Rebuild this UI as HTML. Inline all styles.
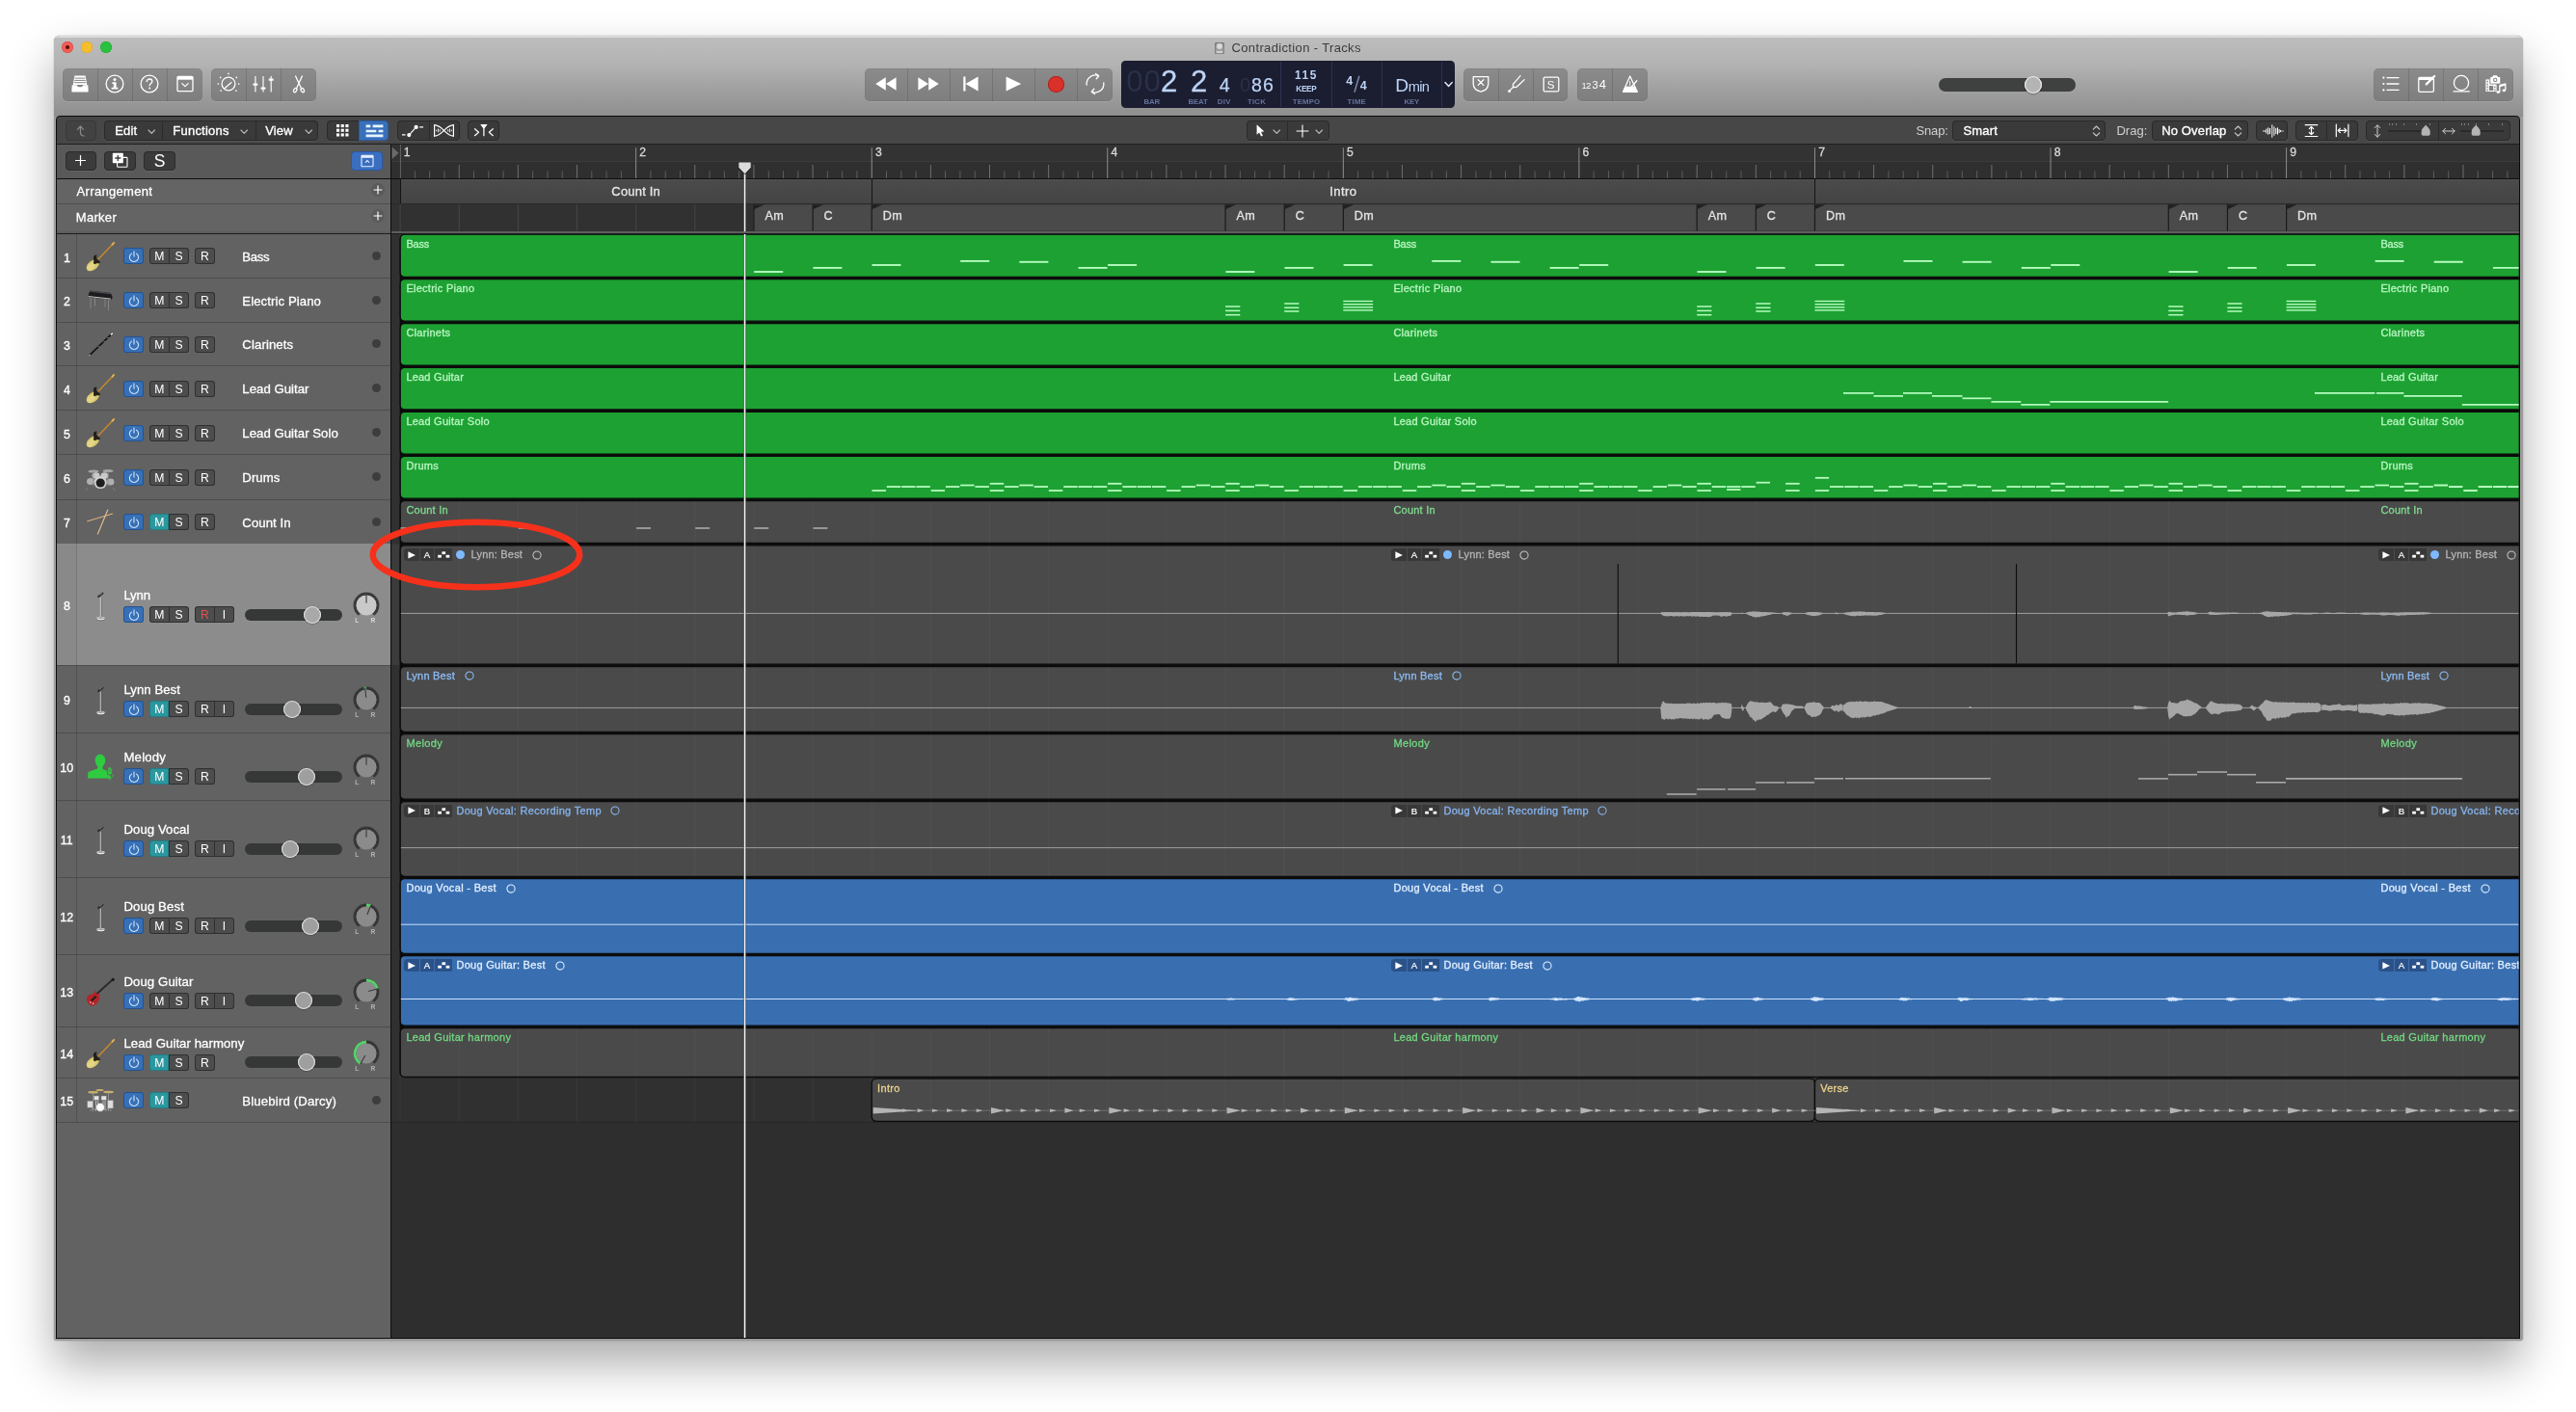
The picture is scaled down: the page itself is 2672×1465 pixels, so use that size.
<!DOCTYPE html>
<html><head><meta charset="utf-8"><title>Contradiction - Tracks</title>
<style>
html,body{margin:0;padding:0;background:#fff;}
body{width:2672px;height:1465px;position:relative;overflow:hidden;font-family:"Liberation Sans",sans-serif;}
div,span.t,svg{position:absolute;box-sizing:border-box;}
span.t{white-space:nowrap;display:block;}
svg{overflow:visible;}
svg.tx{pointer-events:none;}
svg.tx text{font-family:"Liberation Sans",sans-serif;white-space:pre;}
.tb{background:linear-gradient(#8b8b8b,#7e7e7e);border-radius:5px;box-shadow:0 0.5px 0 rgba(255,255,255,.18),inset 0 0 0 0.5px rgba(0,0,0,.08);}
.tbd{background:rgba(0,0,0,.13);width:1px;}
.mb{background:#3a3a3a;border-radius:4.5px;box-shadow:inset 0 0 0 1px #2a2a2a, 0 1px 0 rgba(255,255,255,.06);}
.mbd{background:#2a2a2a;width:1px;}
.hb{background:#4d4d4d;border-radius:3.5px;box-shadow:inset 0 0 0 1px #2f2f2f;}
.hbd{background:#2f2f2f;width:1px;}
#wrap{left:0;top:0;width:2672px;height:1465px;will-change:transform;}
</style></head><body><div id="wrap">
<div style="left:55.70px;top:37.30px;width:2561.10px;height:1353.80px;border-radius:6px 6px 3px 3px;background:#9b9b9b;box-shadow:0 24px 48px rgba(0,0,0,.33),0 0 1.5px rgba(0,0,0,.38);"></div>
<div style="left:55.70px;top:37.30px;width:2561.10px;height:84.00px;border-radius:6px 6px 0 0;background:linear-gradient(#cfcfcf 0,#e0e0e0 0.8px,#dedede 1.7px,#bdbdbd 1.7px,#b3b3b3 35%,#a1a1a1 65%,#8e8e8e 100%);"></div>
<div style="left:63.90px;top:43.00px;width:12.00px;height:12.00px;border-radius:50%;background:#ee5e57;box-shadow:inset 0 0 0 0.5px #d8483f;"></div>
<div style="left:84.00px;top:43.00px;width:12.00px;height:12.00px;border-radius:50%;background:#f6be2f;box-shadow:inset 0 0 0 0.5px #dba221;"></div>
<div style="left:104.00px;top:43.00px;width:12.00px;height:12.00px;border-radius:50%;background:#29c13f;box-shadow:inset 0 0 0 0.5px #1ea830;"></div>
<div style="left:68.10px;top:47.20px;width:3.60px;height:3.60px;border-radius:50%;background:#5e0d09;"></div>
<div style="left:1260.00px;top:43.50px;width:10.00px;height:12.50px;border-radius:1.5px;background:linear-gradient(#8c8c8c,#a8a8a8);box-shadow:inset 0 0 0 0.6px #6e6e6e;"></div>
<div style="left:1262.00px;top:45.20px;width:6.00px;height:6.00px;border-radius:50%;background:#d8d8d8;"></div>
<div style="left:1262.30px;top:53.00px;width:5.40px;height:1.60px;background:#d0d0d0;"></div>
<svg class="tx" style="left:0;top:0;" width="2672" height="1465"><defs><clipPath id="tclip"><rect x="406.2" y="242" width="2206.4" height="1146"/></clipPath></defs><text x="1277.50" y="54.20" font-size="13" fill="#3c3c3c" letter-spacing="0.357">Contradiction - Tracks</text></svg>
<div class="tb" style="left:65.10px;top:71.30px;width:144.60px;height:33.30px;"></div>
<div class="tbd" style="left:100.60px;top:71.30px;width:1.00px;height:33.30px;"></div>
<div class="tbd" style="left:136.80px;top:71.30px;width:1.00px;height:33.30px;"></div>
<div class="tbd" style="left:172.90px;top:71.30px;width:1.00px;height:33.30px;"></div>
<div class="tb" style="left:219.00px;top:71.30px;width:108.80px;height:33.30px;"></div>
<div class="tbd" style="left:254.70px;top:71.30px;width:1.00px;height:33.30px;"></div>
<div class="tbd" style="left:291.00px;top:71.30px;width:1.00px;height:33.30px;"></div>
<div class="tb" style="left:897.10px;top:71.30px;width:256.70px;height:33.30px;"></div>
<div class="tbd" style="left:940.70px;top:71.30px;width:1.00px;height:33.30px;"></div>
<div class="tbd" style="left:984.80px;top:71.30px;width:1.00px;height:33.30px;"></div>
<div class="tbd" style="left:1028.80px;top:71.30px;width:1.00px;height:33.30px;"></div>
<div class="tbd" style="left:1072.90px;top:71.30px;width:1.00px;height:33.30px;"></div>
<div class="tbd" style="left:1117.00px;top:71.30px;width:1.00px;height:33.30px;"></div>
<div class="tb" style="left:1518.20px;top:71.30px;width:108.30px;height:33.30px;"></div>
<div class="tbd" style="left:1554.00px;top:71.30px;width:1.00px;height:33.30px;"></div>
<div class="tbd" style="left:1589.90px;top:71.30px;width:1.00px;height:33.30px;"></div>
<div class="tb" style="left:1636.00px;top:71.30px;width:72.80px;height:33.30px;"></div>
<div class="tbd" style="left:1672.00px;top:71.30px;width:1.00px;height:33.30px;"></div>
<div class="tb" style="left:2462.00px;top:71.30px;width:144.90px;height:33.30px;"></div>
<div class="tbd" style="left:2498.00px;top:71.30px;width:1.00px;height:33.30px;"></div>
<div class="tbd" style="left:2534.00px;top:71.30px;width:1.00px;height:33.30px;"></div>
<div class="tbd" style="left:2570.10px;top:71.30px;width:1.00px;height:33.30px;"></div>
<svg style="left:73.20px;top:77.40px;" width="20" height="20" viewBox="0 0 20 20"><path d="M4.400 1.500h11.200l1.700 9.400H2.700z" fill="#fff"/><path d="M4.600 4.100h10.800M4.200 6.400h11.600M3.800 8.700h12.400" stroke="#858585" stroke-width="1" fill="none"/>
<path d="M1.700 11.200h5.100c.2 1.400 1.400 2.100 3.200 2.100s3-.7 3.200-2.100h5.100l.4 6.300a.9.9 0 0 1-.9 1H2.200a.9.9 0 0 1-.9-1z" fill="#fff"/></svg>
<svg style="left:109.20px;top:77.40px;" width="20" height="20" viewBox="0 0 20 20"><circle cx="10" cy="10" r="8.900" stroke="#fff" fill="none" stroke-width="1.3" stroke-linecap="round" stroke-linejoin="round"/><circle cx="10" cy="5.400" r="1.500" fill="#fff"/><path d="M7.400 8.200h4.200v5.600h1.800v1.800H6.600v-1.800h2.200V10H7.400z" fill="#fff"/></svg>
<svg style="left:145.30px;top:77.40px;" width="20" height="20" viewBox="0 0 20 20"><circle cx="10" cy="10" r="8.900" stroke="#fff" fill="none" stroke-width="1.3" stroke-linecap="round" stroke-linejoin="round"/><path d="M7.300 7.600c0-1.600 1.200-2.600 2.800-2.600s2.800.9 2.800 2.400c0 2-2.700 2.200-2.700 4.400" stroke="#fff" fill="none" stroke-width="1.3" stroke-linecap="round" stroke-linejoin="round"/><circle cx="10.200" cy="14.600" r="1" fill="#fff"/></svg>
<svg style="left:181.50px;top:77.40px;" width="20" height="20" viewBox="0 0 20 20"><rect x="2" y="2.3" width="16" height="15.4" rx="1.2" stroke="#fff" fill="none" stroke-width="1.3" stroke-linecap="round" stroke-linejoin="round"/><rect x="2" y="2.3" width="16" height="3.4" fill="#fff"/><path d="M6.8 9.6l3.2 3 3.2-3" stroke="#fff" fill="none" stroke-width="1.3" stroke-linecap="round" stroke-linejoin="round"/></svg>
<svg style="left:227.10px;top:77.40px;" width="20" height="20" viewBox="0 0 20 20"><circle cx="10" cy="10" r="6.9" stroke="#fff" fill="none" stroke-width="1.3" stroke-linecap="round" stroke-linejoin="round"/><path d="M6.200 14.600L13 8.600" stroke="#fff" fill="none" stroke-width="1.3" stroke-linecap="round" stroke-linejoin="round"/><circle cx="10.00" cy="-0.60" r="0.85" fill="#fff"/><circle cx="18.35" cy="3.47" r="0.85" fill="#fff"/><circle cx="20.60" cy="10.00" r="0.85" fill="#fff"/><circle cx="17.88" cy="17.09" r="0.85" fill="#fff"/><circle cx="2.12" cy="17.09" r="0.85" fill="#fff"/><circle cx="-0.60" cy="10.00" r="0.85" fill="#fff"/><circle cx="1.65" cy="3.47" r="0.85" fill="#fff"/></svg>
<svg style="left:263.30px;top:77.40px;" width="20" height="20" viewBox="0 0 20 20"><path d="M1.900 2v16.400M10 2v16.400M18.200 2v16.400" stroke="#fff" stroke-width="1.150" fill="none"/><path d="M-0.500 10.600h4.800M7.600 14.600h4.800M15.800 5.600h4.800" stroke="#fff" stroke-width="2.100" fill="none"/></svg>
<svg style="left:299.60px;top:77.40px;" width="20" height="20" viewBox="0 0 20 20"><path d="M6.600 2l6 13M13.400 2l-6 13" stroke="#fff" fill="none" stroke-width="1.3" stroke-linecap="round" stroke-linejoin="round"/><ellipse cx="6.200" cy="16.600" rx="1.500" ry="2.300" transform="rotate(28 6.200 16.600)" stroke="#fff" fill="none" stroke-width="1.3" stroke-linecap="round" stroke-linejoin="round"/><ellipse cx="13.800" cy="16.600" rx="1.500" ry="2.300" transform="rotate(-28 13.800 16.600)" stroke="#fff" fill="none" stroke-width="1.3" stroke-linecap="round" stroke-linejoin="round"/></svg>
<svg style="left:907.20px;top:75.40px;" width="24" height="24" viewBox="0 0 24 24"><path d="M11.8 5.3v13.4L1.2 12zM22.6 5.3v13.4L12 12z" fill="#fff"/></svg>
<svg style="left:951.20px;top:75.40px;" width="24" height="24" viewBox="0 0 24 24"><path d="M1.4 5.3v13.4L12 12zM12.2 5.3v13.4L22.8 12z" fill="#fff"/></svg>
<svg style="left:995.30px;top:75.40px;" width="24" height="24" viewBox="0 0 24 24"><path d="M4.3 4.6h2.2v14.8H4.3zM19.6 4.6v14.8L6.5 12z" fill="#fff"/></svg>
<svg style="left:1039.40px;top:75.40px;" width="24" height="24" viewBox="0 0 24 24"><path d="M4.6 4.4v15.2L20.2 12z" fill="#fff"/></svg>
<div style="left:1086.70px;top:78.60px;width:17.60px;height:17.60px;border-radius:50%;background:#d9302a;box-shadow:inset 0 0 0 0.8px #a8201c;"></div>
<svg style="left:1123.60px;top:75.40px;" width="24" height="24" viewBox="0 0 24 24"><path d="M3.2 13.2A8.9 8.9 0 0 1 15.4 3.7M20.8 10.8A8.9 8.9 0 0 1 8.6 20.3" stroke="#fff" fill="none" stroke-width="1.3" stroke-linecap="round" stroke-linejoin="round"/><path d="M12.6 1.4l3.2 2.4-2.6 2.9M11.4 22.6l-3.2-2.4 2.6-2.9" stroke="#fff" fill="none" stroke-width="1.3" stroke-linecap="round" stroke-linejoin="round"/></svg>
<svg style="left:1526.40px;top:77.40px;" width="20" height="20" viewBox="0 0 20 20"><path d="M2.2 2.6h15.6v7.2c0 4.6-3.3 7.3-7.8 8.3-4.5-1-7.8-3.7-7.8-8.3z" stroke="#fff" fill="none" stroke-width="1.3" stroke-linecap="round" stroke-linejoin="round"/><path d="M7.2 5.8l5.6 5.6M12.8 5.8l-5.6 5.6" stroke="#fff" fill="none" stroke-width="1.3" stroke-linecap="round" stroke-linejoin="round"/></svg>
<svg style="left:1562.50px;top:77.40px;" width="20" height="20" viewBox="0 0 20 20"><path d="M2.6 17.4L7 13M7 13c-1.5-1.5-.4-3 .8-4.2L14 1.6M7 13c1.5 1.500 3 .4 4.2-.8l7-6.600" stroke="#fff" fill="none" stroke-width="1.3" stroke-linecap="round" stroke-linejoin="round"/><circle cx="2.6" cy="17.400" r="1.5" fill="#fff"/></svg>
<svg style="left:1598.50px;top:77.40px;" width="20" height="20" viewBox="0 0 20 20"><rect x="2.200" y="3.100" width="15.600" height="14.800" rx="1.500" stroke="#fff" fill="none" stroke-width="1.3" stroke-linecap="round" stroke-linejoin="round"/></svg>
<svg style="left:1680.60px;top:77.40px;" width="20" height="20" viewBox="0 0 20 20"><path d="M9.760 2.050L2.600 18.350H17.260z" stroke="#fff" fill="none" stroke-width="1.3" stroke-linecap="round" stroke-linejoin="round"/><path d="M4.920 13.050H14.800L17.260 18.350H2.600z" fill="#fff" stroke="#fff" stroke-width="0.800" stroke-linejoin="round"/><path d="M11.300 13.050L16.850 6.700" stroke="#fff" stroke-width="1.300" stroke-linecap="round"/><path d="M9.760 7.200V11.800" stroke="#fff" stroke-width="1"/></svg>
<svg style="left:2470.20px;top:77.40px;" width="20" height="20" viewBox="0 0 20 20"><path d="M6 3.600h12M6 10h12M6 16.400h12" stroke="#fff" fill="none" stroke-width="1.3" stroke-linecap="round" stroke-linejoin="round"/><circle cx="2.400" cy="3.600" r="1.100" fill="#fff"/><circle cx="2.400" cy="10" r="1.100" fill="#fff"/><circle cx="2.400" cy="16.400" r="1.100" fill="#fff"/></svg>
<svg style="left:2506.50px;top:77.40px;" width="20" height="20" viewBox="0 0 20 20"><rect x="1.800" y="3.400" width="15.600" height="15" rx="1.400" stroke="#fff" fill="none" stroke-width="1.3" stroke-linecap="round" stroke-linejoin="round"/><rect x="1.800" y="3.400" width="15.600" height="2.600" fill="#fff"/><path d="M9.800 10.400L18.200 2" stroke="#fff" stroke-width="2.200" stroke-linecap="round"/><path d="M9.800 10.400L18.200 2" stroke="#7f7f7f" stroke-width="4.400" stroke-linecap="butt" opacity="0"/></svg>
<svg style="left:2542.50px;top:77.40px;" width="20" height="20" viewBox="0 0 20 20"><circle cx="10" cy="9" r="7.600" stroke="#fff" fill="none" stroke-width="1.3" stroke-linecap="round" stroke-linejoin="round"/><path d="M2 17.800h16.400" stroke="#fff" fill="none" stroke-width="1.3" stroke-linecap="round" stroke-linejoin="round"/></svg>
<svg style="left:2577.80px;top:76.40px;" width="22" height="22" viewBox="0 0 22 22"><rect x="0.400" y="6.400" width="11.200" height="12.600" fill="#fff"/><path d="M1.500 7.800h1.300v1.700H1.500zM1.500 10.700h1.300v1.700H1.500zM1.500 13.600h1.300v1.700H1.500zM1.500 16.500h1.300v1.700H1.500zM9.200 13.600h1.300v1.700H9.200zM9.200 16.500h1.300v1.700H9.200z" fill="#828282"/><rect x="3.900" y="13" width="4.300" height="5" fill="#828282"/>
<g transform="translate(-2.800 -0.700)"><path d="M7.600 4.200h2.200l1-1.800h4.200l1 1.800h2.600v7.600h-11z" fill="#fff" stroke="#828282" stroke-width="0.900"/><circle cx="13" cy="7.600" r="2.200" fill="#828282"/><circle cx="13" cy="7.600" r="1.150" fill="#fff"/></g>
<path d="M14.800 12.400l6-1.400v6.600" stroke="#fff" stroke-width="1.300" fill="none"/><path d="M14.800 12.400v7" stroke="#fff" stroke-width="1.300" fill="none"/><path d="M14.800 12.600l6-1.400v1.600l-6 1.400z" fill="#fff"/><ellipse cx="13.300" cy="19.600" rx="1.800" ry="1.350" fill="#fff"/><ellipse cx="19.300" cy="17.800" rx="1.800" ry="1.350" fill="#fff"/></svg>
<svg class="tx" style="left:0;top:0;" width="2672" height="1465"><defs><clipPath id="tclip"><rect x="406.2" y="242" width="2206.4" height="1146"/></clipPath></defs><text x="1604.83" y="92.10" font-size="11.6" fill="#fff">S</text><text x="1640.70" y="92.10" font-size="8.4" fill="#fff">1</text><text x="1644.90" y="92.10" font-size="9.9" fill="#fff">2</text><text x="1651.50" y="92.10" font-size="11.2" fill="#fff">3</text><text x="1658.80" y="92.10" font-size="12.9" fill="#fff">4</text></svg>
<div style="left:1162.90px;top:63.20px;width:346.30px;height:48.60px;background:#1b1d30;border-radius:4.500px;"></div>
<div style="left:1327.90px;top:64.20px;width:1.00px;height:46.60px;background:#2c3350;"></div>
<div style="left:1380.90px;top:64.20px;width:1.00px;height:46.60px;background:#2c3350;"></div>
<div style="left:1433.10px;top:64.20px;width:1.00px;height:46.60px;background:#2c3350;"></div>
<div style="left:1495.10px;top:64.20px;width:1.00px;height:46.60px;background:#2c3350;"></div>
<svg style="left:1400.00px;top:76.00px;" width="14" height="22" viewBox="0 0 14 22"><path d="M9.900 2.700L4.900 19.700" stroke="#7d88aa" stroke-width="1.500" fill="none"/></svg>
<svg style="left:1497.00px;top:83.00px;" width="12" height="10" viewBox="0 0 12 10"><path d="M2 2.600l3.600 3.800 3.600-3.800" stroke="#dfe8fa" stroke-width="1.500" fill="none" stroke-linecap="round" stroke-linejoin="round"/></svg>
<svg class="tx" style="left:0;top:0;" width="2672" height="1465"><defs><clipPath id="tclip"><rect x="406.2" y="242" width="2206.4" height="1146"/></clipPath></defs><text x="1168.20" y="94.80" font-size="31" fill="#2a3048" letter-spacing="1.059">00</text><text x="1203.90" y="94.80" font-size="31" fill="#bcd3f5" stroke="#bcd3f5" stroke-width="0.3">2</text><text x="1234.90" y="94.80" font-size="31" fill="#bcd3f5" stroke="#bcd3f5" stroke-width="0.3">2</text><text x="1264.70" y="94.80" font-size="19.6" fill="#bcd3f5" stroke="#bcd3f5" stroke-width="0.25">4</text><text x="1286.20" y="94.80" font-size="19.6" fill="#2a3048">0</text><text x="1297.90" y="94.80" font-size="19.6" fill="#bcd3f5" letter-spacing="1.299" stroke="#bcd3f5" stroke-width="0.25">86</text><text x="1186.40" y="107.90" font-size="7.8" fill="#64729b" letter-spacing="-0.033" font-weight="bold">BAR</text><text x="1232.40" y="107.90" font-size="7.8" fill="#64729b" letter-spacing="-0.114" font-weight="bold">BEAT</text><text x="1262.80" y="107.90" font-size="7.8" fill="#64729b" letter-spacing="0.266" font-weight="bold">DIV</text><text x="1294.00" y="107.90" font-size="7.8" fill="#64729b" letter-spacing="0.200" font-weight="bold">TICK</text><text x="1343.00" y="81.70" font-size="11.9" fill="#bcd3f5" letter-spacing="1.600" font-weight="bold">115</text><text x="1344.30" y="95.00" font-size="8.2" fill="#bcd3f5" letter-spacing="-0.332" font-weight="bold">KEEP</text><text x="1340.80" y="107.90" font-size="7.8" fill="#64729b" letter-spacing="0.133" font-weight="bold">TEMPO</text><text x="1396.20" y="87.90" font-size="12.5" fill="#bcd3f5" font-weight="bold">4</text><text x="1410.80" y="92.90" font-size="12.5" fill="#bcd3f5" font-weight="bold">4</text><text x="1397.60" y="107.90" font-size="7.8" fill="#64729b" letter-spacing="0.192" font-weight="bold">TIME</text><text x="1447.20" y="94.70" font-size="19.2" fill="#bcd3f5">D</text><text x="1460.80" y="94.70" font-size="14.6" fill="#bcd3f5" letter-spacing="-0.709">min</text><text x="1456.40" y="107.90" font-size="7.8" fill="#64729b" letter-spacing="-0.146" font-weight="bold">KEY</text></svg>
<div style="left:2011.10px;top:81.00px;width:141.80px;height:14.20px;border-radius:7.100px;background:#3e4140;"></div>
<div style="left:2099.70px;top:78.80px;width:18.40px;height:18.40px;border-radius:50%;background:#b4b4b4;box-shadow:inset 0 0 0 1.100px #efefef, 0 1px 1.500px rgba(0,0,0,.35);"></div>
<div style="left:59.10px;top:121.00px;width:2553.50px;height:1266.60px;background:#2d2d2d;border-radius:3.5px 3.5px 0 0;box-shadow:0 0 0 1px #0c0c0c;"></div>
<div style="left:59.10px;top:121.00px;width:2553.50px;height:28.80px;background:#474747;border-radius:3.5px 3.5px 0 0;border-bottom:1px solid #1f1f1f;"></div>
<div style="left:67.50px;top:125.40px;width:32.40px;height:20.30px;background:#424242;border-radius:4.500px;box-shadow:inset 0 0 0 1px #383838;"></div>
<svg style="left:77.00px;top:128.50px;" width="14" height="14" viewBox="0 0 14 14"><path d="M3.400 5.400L6.400 1.800l3 3.600M6.400 1.800v6.400c0 2.400 1.200 3.600 3.800 3.800" stroke="#8a8a8a" stroke-width="1.200" fill="none" stroke-linecap="round" stroke-linejoin="round"/></svg>
<div class="mb" style="left:108.10px;top:125.40px;width:222.40px;height:20.30px;"></div>
<div class="mbd" style="left:168.40px;top:126.40px;width:1.00px;height:18.30px;"></div>
<div class="mbd" style="left:264.70px;top:126.40px;width:1.00px;height:18.30px;"></div>
<svg style="left:153.05px;top:133.70px;" width="8.5" height="5.4" viewBox="0 0 8.5 5.4"><path d="M1 1l3.25 3.40 3.25 -3.40" stroke="#b8b8b8" stroke-width="1.15" fill="none" stroke-linecap="round" stroke-linejoin="round"/></svg>
<svg style="left:248.95px;top:133.70px;" width="8.5" height="5.4" viewBox="0 0 8.5 5.4"><path d="M1 1l3.25 3.40 3.25 -3.40" stroke="#b8b8b8" stroke-width="1.15" fill="none" stroke-linecap="round" stroke-linejoin="round"/></svg>
<svg style="left:315.75px;top:133.70px;" width="8.5" height="5.4" viewBox="0 0 8.5 5.4"><path d="M1 1l3.25 3.40 3.25 -3.40" stroke="#b8b8b8" stroke-width="1.15" fill="none" stroke-linecap="round" stroke-linejoin="round"/></svg>
<div class="mb" style="left:339.00px;top:125.40px;width:64.40px;height:20.30px;"></div>
<div style="left:371.70px;top:125.40px;width:31.70px;height:20.30px;background:#3a70ba;border-radius:0 4.500px 4.500px 0;box-shadow:inset 0 0 0 1px #2c599f;"></div>
<svg style="left:348.00px;top:128.10px;" width="14.5" height="14.5" viewBox="0 0 14.5 14.5"><rect x="1.00" y="1.00" width="3.100" height="3.100" fill="#fff"/><rect x="1.00" y="5.70" width="3.100" height="3.100" fill="#fff"/><rect x="1.00" y="10.40" width="3.100" height="3.100" fill="#fff"/><rect x="5.70" y="1.00" width="3.100" height="3.100" fill="#fff"/><rect x="5.70" y="5.70" width="3.100" height="3.100" fill="#fff"/><rect x="5.70" y="10.40" width="3.100" height="3.100" fill="#fff"/><rect x="10.40" y="1.00" width="3.100" height="3.100" fill="#fff"/><rect x="10.40" y="5.70" width="3.100" height="3.100" fill="#fff"/><rect x="10.40" y="10.40" width="3.100" height="3.100" fill="#fff"/></svg>
<svg style="left:378.50px;top:128.60px;" width="20" height="15" viewBox="0 0 20 15"><path d="M0.600 1.800h4.700M7.600 1.800h10.800M0.600 7h10.700M13.600 7h4.800M0.600 11.900h17.800" stroke="#e6f3ff" stroke-width="2.700" fill="none"/></svg>
<div class="mb" style="left:412.30px;top:125.40px;width:64.50px;height:20.30px;"></div>
<div class="mbd" style="left:444.50px;top:126.40px;width:1.00px;height:18.30px;"></div>
<svg style="left:418.00px;top:127.50px;" width="22" height="16" viewBox="0 0 22 16"><path d="M-1 11.900h3.500M17.200 3.900h3.900" stroke="#fff" stroke-width="1.200"/><path d="M7.600 10.600L12.300 5.400" stroke="#fff" stroke-width="1.200"/><circle cx="6.300" cy="12.100" r="2.100" fill="#fff"/><circle cx="13.600" cy="3.900" r="2.100" fill="#fff"/></svg>
<svg style="left:450.00px;top:127.20px;" width="22" height="17" viewBox="0 0 22 17"><path d="M0.600 2.600v11.600M20.400 2.600v11.600" stroke="#fff" fill="none" stroke-width="1.200" stroke-linecap="round" stroke-linejoin="round"/><path d="M0.600 2.600C5.500 3 8 6 10.500 8.400S15.500 13.800 20.400 14.200M0.600 14.200C5.500 13.800 8 10.800 10.500 8.400S15.500 3 20.400 2.600" stroke="#fff" fill="none" stroke-width="1.200" stroke-linecap="round" stroke-linejoin="round"/><path d="M2.600 7.600v1.600M4.400 6.400v4M6.200 7.200v2.400M14.800 7.200v2.400M16.600 6.400v4M18.400 7.600v1.600" stroke="#fff" stroke-width="0.900"/></svg>
<div class="mb" style="left:485.40px;top:125.40px;width:32.40px;height:20.30px;"></div>
<svg style="left:490.50px;top:128.40px;" width="22" height="15" viewBox="0 0 22 15"><path d="M1.500 5.700l4 3.500-4 3.500M20.300 5.700l-4 3.500 4 3.500" stroke="#fff" fill="none" stroke-width="1.200" stroke-linecap="round" stroke-linejoin="round"/><path d="M7.200 1.100h7.400l-3.100 4.200h-1.200z" fill="#fff"/><path d="M10.900 4.600v8.700" stroke="#fff" stroke-width="1.250"/></svg>
<div class="mb" style="left:1292.60px;top:125.40px;width:86.20px;height:20.30px;"></div>
<div class="mbd" style="left:1335.40px;top:126.40px;width:1.00px;height:18.30px;"></div>
<svg style="left:1300.50px;top:128.20px;" width="12" height="15" viewBox="0 0 12 15"><path d="M2.600 1.200v10.600l2.600-2.300 1.900 4.100 1.800-.8-1.900-4 3.400-.2z" fill="#fff"/></svg>
<svg style="left:1320.15px;top:133.70px;" width="8.5" height="5.4" viewBox="0 0 8.5 5.4"><path d="M1 1l3.25 3.40 3.25 -3.40" stroke="#b8b8b8" stroke-width="1.15" fill="none" stroke-linecap="round" stroke-linejoin="round"/></svg>
<svg style="left:1343.50px;top:128.80px;" width="14" height="14" viewBox="0 0 14 14"><path d="M7 0.600v12.800M0.600 7h12.800" stroke="#fff" stroke-width="1.100"/></svg>
<svg style="left:1364.35px;top:133.70px;" width="8.5" height="5.4" viewBox="0 0 8.5 5.4"><path d="M1 1l3.25 3.40 3.25 -3.40" stroke="#b8b8b8" stroke-width="1.15" fill="none" stroke-linecap="round" stroke-linejoin="round"/></svg>
<div class="mb" style="left:2025.30px;top:125.40px;width:159.20px;height:20.30px;"></div>
<svg style="left:2169.70px;top:128.60px;" width="9" height="14" viewBox="0 0 9 14"><path d="M1.300 5.200L4.500 2l3.200 3.200M1.300 8.800L4.500 12l3.200-3.200" stroke="#c8c8c8" stroke-width="1.150" fill="none" stroke-linecap="round" stroke-linejoin="round"/></svg>
<div class="mb" style="left:2231.60px;top:125.40px;width:100.20px;height:20.30px;"></div>
<svg style="left:2316.90px;top:128.60px;" width="9" height="14" viewBox="0 0 9 14"><path d="M1.300 5.200L4.500 2l3.200 3.200M1.300 8.800L4.500 12l3.200-3.200" stroke="#c8c8c8" stroke-width="1.150" fill="none" stroke-linecap="round" stroke-linejoin="round"/></svg>
<div class="mb" style="left:2340.20px;top:125.40px;width:32.60px;height:20.30px;"></div>
<svg style="left:2347.00px;top:127.50px;" width="22" height="16" viewBox="0 0 22 16"><path d="M0.50 7.50v1.00" stroke="#fff" stroke-width="1"/><path d="M2.25 6.90v2.20" stroke="#fff" stroke-width="1"/><path d="M4.00 5.50v5.00" stroke="#fff" stroke-width="1"/><path d="M5.75 4.30v7.40" stroke="#fff" stroke-width="1"/><path d="M7.50 5.00v6.00" stroke="#fff" stroke-width="1"/><path d="M9.80 1.30v13.40" stroke="#fff" stroke-width="1"/><path d="M11.90 3.30v9.40" stroke="#fff" stroke-width="1"/><path d="M13.80 5.00v6.00" stroke="#fff" stroke-width="1"/><path d="M15.50 4.40v7.20" stroke="#fff" stroke-width="1"/><path d="M17.10 6.00v4.00" stroke="#fff" stroke-width="1"/><path d="M18.60 7.00v2.00" stroke="#fff" stroke-width="1"/><path d="M20.00 7.50v1.00" stroke="#fff" stroke-width="1"/><path d="M21.30 7.60v0.80" stroke="#fff" stroke-width="1"/></svg>
<div class="mb" style="left:2381.30px;top:125.40px;width:64.70px;height:20.30px;"></div>
<div class="mbd" style="left:2413.40px;top:126.40px;width:1.00px;height:18.30px;"></div>
<svg style="left:2390.00px;top:128.00px;" width="15" height="15.5" viewBox="0 0 15 15.5"><path d="M1.200 1.700h12.600M1.200 13.500h12.600" stroke="#fff" fill="none" stroke-width="1.200" stroke-linecap="round" stroke-linejoin="round"/><path d="M7.500 3.600v8M5.300 5.700l2.200-2.200 2.200 2.200M5.300 9.500l2.200 2.200 2.200-2.200" stroke="#fff" fill="none" stroke-width="1.200" stroke-linecap="round" stroke-linejoin="round"/></svg>
<svg style="left:2422.00px;top:128.20px;" width="15.5" height="15" viewBox="0 0 15.5 15"><path d="M1.300 1.200v12.400M13.900 1.200v12.400" stroke="#fff" fill="none" stroke-width="1.200" stroke-linecap="round" stroke-linejoin="round"/><path d="M3.300 7.400h8.600M5.400 5.200L3.200 7.400l2.200 2.200M9.800 5.200l2.200 2.200-2.200 2.200" stroke="#fff" fill="none" stroke-width="1.200" stroke-linecap="round" stroke-linejoin="round"/></svg>
<div class="mb" style="left:2454.20px;top:125.40px;width:150.10px;height:20.30px;"></div>
<div class="mbd" style="left:2529.00px;top:126.40px;width:1.00px;height:18.30px;"></div>
<svg style="left:2460.50px;top:128.00px;" width="10" height="16" viewBox="0 0 10 16"><path d="M5 2v12M2.200 4.600L5 1.800l2.800 2.800M2.200 11.400L5 14.200l2.800-2.800" stroke="#d2d2d2" fill="none" stroke-width="1" stroke-linecap="round" stroke-linejoin="round"/></svg>
<div style="left:2477.00px;top:134.60px;width:41.00px;height:2.20px;background:#2a2a2a;border-radius:1px;"></div>
<svg style="left:2531.60px;top:130.70px;" width="16" height="10" viewBox="0 0 16 10"><path d="M2 5h12M4.600 2.200L1.800 5l2.800 2.800M11.400 2.200L14.200 5l-2.800 2.800" stroke="#d2d2d2" fill="none" stroke-width="1" stroke-linecap="round" stroke-linejoin="round"/></svg>
<div style="left:2552.00px;top:134.60px;width:45.00px;height:2.20px;background:#2a2a2a;border-radius:1px;"></div>
<div style="left:2477.90px;top:128.30px;width:0.80px;height:1.80px;background:#7e7e7e;"></div>
<div style="left:2480.80px;top:128.30px;width:0.80px;height:1.80px;background:#7e7e7e;"></div>
<div style="left:2484.60px;top:128.30px;width:0.80px;height:1.80px;background:#7e7e7e;"></div>
<div style="left:2493.10px;top:128.30px;width:0.80px;height:1.80px;background:#7e7e7e;"></div>
<div style="left:2506.10px;top:128.30px;width:0.80px;height:1.80px;background:#7e7e7e;"></div>
<div style="left:2519.90px;top:128.30px;width:0.80px;height:1.80px;background:#7e7e7e;"></div>
<div style="left:2552.90px;top:128.30px;width:0.80px;height:1.80px;background:#7e7e7e;"></div>
<div style="left:2555.80px;top:128.30px;width:0.80px;height:1.80px;background:#7e7e7e;"></div>
<div style="left:2559.60px;top:128.30px;width:0.80px;height:1.80px;background:#7e7e7e;"></div>
<div style="left:2568.30px;top:128.30px;width:0.80px;height:1.80px;background:#7e7e7e;"></div>
<div style="left:2581.10px;top:128.30px;width:0.80px;height:1.80px;background:#7e7e7e;"></div>
<div style="left:2594.90px;top:128.30px;width:0.80px;height:1.80px;background:#7e7e7e;"></div>
<svg style="left:2511.00px;top:128.60px;" width="10.4" height="12.4" viewBox="0 0 10.4 12.4"><path d="M5.200 0.500C6.400 2.600 9.700 4.400 9.700 7.300v2.700c0 1.100-.7 1.700-1.800 1.700H2.500c-1.100 0-1.800-.6-1.800-1.700V7.300C0.700 4.400 4 2.600 5.200 0.500z" fill="#b4b4b4"/></svg>
<svg style="left:2562.80px;top:128.60px;" width="10.4" height="12.4" viewBox="0 0 10.4 12.4"><path d="M5.200 0.500C6.400 2.600 9.700 4.400 9.700 7.300v2.700c0 1.100-.7 1.700-1.800 1.700H2.500c-1.100 0-1.800-.6-1.800-1.700V7.300C0.700 4.400 4 2.600 5.200 0.500z" fill="#b4b4b4"/></svg>
<svg class="tx" style="left:0;top:0;" width="2672" height="1465"><defs><clipPath id="tclip"><rect x="406.2" y="242" width="2206.4" height="1146"/></clipPath></defs><text x="119.20" y="140.20" font-size="13" fill="#fff" letter-spacing="0.200" stroke="#fff" stroke-width="0.35">Edit</text><text x="179.30" y="140.20" font-size="13" fill="#fff" letter-spacing="0.226" stroke="#fff" stroke-width="0.35">Functions</text><text x="275.20" y="140.20" font-size="13" fill="#fff" letter-spacing="0.164" stroke="#fff" stroke-width="0.35">View</text><text x="1987.40" y="140.20" font-size="13" fill="#d0d0d0" letter-spacing="-0.095">Snap:</text><text x="2036.50" y="140.20" font-size="13" fill="#fff" letter-spacing="0.166" stroke="#fff" stroke-width="0.35">Smart</text><text x="2195.40" y="140.20" font-size="13" fill="#d0d0d0" letter-spacing="0.042">Drag:</text><text x="2242.20" y="140.20" font-size="13" fill="#fff" letter-spacing="0.145" stroke="#fff" stroke-width="0.35">No Overlap</text></svg>
<div style="left:406.20px;top:150.00px;width:2206.40px;height:17.20px;background:#333;"></div>
<div style="left:406.20px;top:167.20px;width:2206.40px;height:18.00px;background:#2f2f2f;border-top:1px solid #3c3c3c;"></div>
<svg style="left:0.00px;top:0.00px;" width="2672" height="200" viewBox="0 0 2672 200"><path d="M430.39 177.4V185.2" stroke="#5e5e5e" stroke-width="1"/><path d="M445.67 177.4V185.2" stroke="#5e5e5e" stroke-width="1"/><path d="M460.96 177.4V185.2" stroke="#5e5e5e" stroke-width="1"/><path d="M476.24 171V185.2" stroke="#6f6f6f" stroke-width="1"/><path d="M491.53 177.4V185.2" stroke="#5e5e5e" stroke-width="1"/><path d="M506.81 177.4V185.2" stroke="#5e5e5e" stroke-width="1"/><path d="M522.10 177.4V185.2" stroke="#5e5e5e" stroke-width="1"/><path d="M537.38 171V185.2" stroke="#6f6f6f" stroke-width="1"/><path d="M552.66 177.4V185.2" stroke="#5e5e5e" stroke-width="1"/><path d="M567.95 177.4V185.2" stroke="#5e5e5e" stroke-width="1"/><path d="M583.24 177.4V185.2" stroke="#5e5e5e" stroke-width="1"/><path d="M598.52 171V185.2" stroke="#6f6f6f" stroke-width="1"/><path d="M613.81 177.4V185.2" stroke="#5e5e5e" stroke-width="1"/><path d="M629.09 177.4V185.2" stroke="#5e5e5e" stroke-width="1"/><path d="M644.38 177.4V185.2" stroke="#5e5e5e" stroke-width="1"/><path d="M659.66 153.2V185.2" stroke="#8e8e8e" stroke-width="1"/><path d="M674.95 177.4V185.2" stroke="#5e5e5e" stroke-width="1"/><path d="M690.23 177.4V185.2" stroke="#5e5e5e" stroke-width="1"/><path d="M705.52 177.4V185.2" stroke="#5e5e5e" stroke-width="1"/><path d="M720.80 171V185.2" stroke="#6f6f6f" stroke-width="1"/><path d="M736.09 177.4V185.2" stroke="#5e5e5e" stroke-width="1"/><path d="M751.37 177.4V185.2" stroke="#5e5e5e" stroke-width="1"/><path d="M766.65 177.4V185.2" stroke="#5e5e5e" stroke-width="1"/><path d="M781.94 171V185.2" stroke="#6f6f6f" stroke-width="1"/><path d="M797.23 177.4V185.2" stroke="#5e5e5e" stroke-width="1"/><path d="M812.51 177.4V185.2" stroke="#5e5e5e" stroke-width="1"/><path d="M827.80 177.4V185.2" stroke="#5e5e5e" stroke-width="1"/><path d="M843.08 171V185.2" stroke="#6f6f6f" stroke-width="1"/><path d="M858.37 177.4V185.2" stroke="#5e5e5e" stroke-width="1"/><path d="M873.65 177.4V185.2" stroke="#5e5e5e" stroke-width="1"/><path d="M888.93 177.4V185.2" stroke="#5e5e5e" stroke-width="1"/><path d="M904.22 153.2V185.2" stroke="#8e8e8e" stroke-width="1"/><path d="M919.51 177.4V185.2" stroke="#5e5e5e" stroke-width="1"/><path d="M934.79 177.4V185.2" stroke="#5e5e5e" stroke-width="1"/><path d="M950.08 177.4V185.2" stroke="#5e5e5e" stroke-width="1"/><path d="M965.36 171V185.2" stroke="#6f6f6f" stroke-width="1"/><path d="M980.64 177.4V185.2" stroke="#5e5e5e" stroke-width="1"/><path d="M995.93 177.4V185.2" stroke="#5e5e5e" stroke-width="1"/><path d="M1011.22 177.4V185.2" stroke="#5e5e5e" stroke-width="1"/><path d="M1026.50 171V185.2" stroke="#6f6f6f" stroke-width="1"/><path d="M1041.79 177.4V185.2" stroke="#5e5e5e" stroke-width="1"/><path d="M1057.07 177.4V185.2" stroke="#5e5e5e" stroke-width="1"/><path d="M1072.36 177.4V185.2" stroke="#5e5e5e" stroke-width="1"/><path d="M1087.64 171V185.2" stroke="#6f6f6f" stroke-width="1"/><path d="M1102.93 177.4V185.2" stroke="#5e5e5e" stroke-width="1"/><path d="M1118.21 177.4V185.2" stroke="#5e5e5e" stroke-width="1"/><path d="M1133.49 177.4V185.2" stroke="#5e5e5e" stroke-width="1"/><path d="M1148.78 153.2V185.2" stroke="#8e8e8e" stroke-width="1"/><path d="M1164.07 177.4V185.2" stroke="#5e5e5e" stroke-width="1"/><path d="M1179.35 177.4V185.2" stroke="#5e5e5e" stroke-width="1"/><path d="M1194.63 177.4V185.2" stroke="#5e5e5e" stroke-width="1"/><path d="M1209.92 171V185.2" stroke="#6f6f6f" stroke-width="1"/><path d="M1225.20 177.4V185.2" stroke="#5e5e5e" stroke-width="1"/><path d="M1240.49 177.4V185.2" stroke="#5e5e5e" stroke-width="1"/><path d="M1255.78 177.4V185.2" stroke="#5e5e5e" stroke-width="1"/><path d="M1271.06 171V185.2" stroke="#6f6f6f" stroke-width="1"/><path d="M1286.35 177.4V185.2" stroke="#5e5e5e" stroke-width="1"/><path d="M1301.63 177.4V185.2" stroke="#5e5e5e" stroke-width="1"/><path d="M1316.91 177.4V185.2" stroke="#5e5e5e" stroke-width="1"/><path d="M1332.20 171V185.2" stroke="#6f6f6f" stroke-width="1"/><path d="M1347.49 177.4V185.2" stroke="#5e5e5e" stroke-width="1"/><path d="M1362.77 177.4V185.2" stroke="#5e5e5e" stroke-width="1"/><path d="M1378.06 177.4V185.2" stroke="#5e5e5e" stroke-width="1"/><path d="M1393.34 153.2V185.2" stroke="#8e8e8e" stroke-width="1"/><path d="M1408.62 177.4V185.2" stroke="#5e5e5e" stroke-width="1"/><path d="M1423.91 177.4V185.2" stroke="#5e5e5e" stroke-width="1"/><path d="M1439.20 177.4V185.2" stroke="#5e5e5e" stroke-width="1"/><path d="M1454.48 171V185.2" stroke="#6f6f6f" stroke-width="1"/><path d="M1469.76 177.4V185.2" stroke="#5e5e5e" stroke-width="1"/><path d="M1485.05 177.4V185.2" stroke="#5e5e5e" stroke-width="1"/><path d="M1500.34 177.4V185.2" stroke="#5e5e5e" stroke-width="1"/><path d="M1515.62 171V185.2" stroke="#6f6f6f" stroke-width="1"/><path d="M1530.91 177.4V185.2" stroke="#5e5e5e" stroke-width="1"/><path d="M1546.19 177.4V185.2" stroke="#5e5e5e" stroke-width="1"/><path d="M1561.47 177.4V185.2" stroke="#5e5e5e" stroke-width="1"/><path d="M1576.76 171V185.2" stroke="#6f6f6f" stroke-width="1"/><path d="M1592.05 177.4V185.2" stroke="#5e5e5e" stroke-width="1"/><path d="M1607.33 177.4V185.2" stroke="#5e5e5e" stroke-width="1"/><path d="M1622.62 177.4V185.2" stroke="#5e5e5e" stroke-width="1"/><path d="M1637.90 153.2V185.2" stroke="#8e8e8e" stroke-width="1"/><path d="M1653.18 177.4V185.2" stroke="#5e5e5e" stroke-width="1"/><path d="M1668.47 177.4V185.2" stroke="#5e5e5e" stroke-width="1"/><path d="M1683.76 177.4V185.2" stroke="#5e5e5e" stroke-width="1"/><path d="M1699.04 171V185.2" stroke="#6f6f6f" stroke-width="1"/><path d="M1714.32 177.4V185.2" stroke="#5e5e5e" stroke-width="1"/><path d="M1729.61 177.4V185.2" stroke="#5e5e5e" stroke-width="1"/><path d="M1744.89 177.4V185.2" stroke="#5e5e5e" stroke-width="1"/><path d="M1760.18 171V185.2" stroke="#6f6f6f" stroke-width="1"/><path d="M1775.47 177.4V185.2" stroke="#5e5e5e" stroke-width="1"/><path d="M1790.75 177.4V185.2" stroke="#5e5e5e" stroke-width="1"/><path d="M1806.03 177.4V185.2" stroke="#5e5e5e" stroke-width="1"/><path d="M1821.32 171V185.2" stroke="#6f6f6f" stroke-width="1"/><path d="M1836.61 177.4V185.2" stroke="#5e5e5e" stroke-width="1"/><path d="M1851.89 177.4V185.2" stroke="#5e5e5e" stroke-width="1"/><path d="M1867.18 177.4V185.2" stroke="#5e5e5e" stroke-width="1"/><path d="M1882.46 153.2V185.2" stroke="#8e8e8e" stroke-width="1"/><path d="M1897.74 177.4V185.2" stroke="#5e5e5e" stroke-width="1"/><path d="M1913.03 177.4V185.2" stroke="#5e5e5e" stroke-width="1"/><path d="M1928.32 177.4V185.2" stroke="#5e5e5e" stroke-width="1"/><path d="M1943.60 171V185.2" stroke="#6f6f6f" stroke-width="1"/><path d="M1958.89 177.4V185.2" stroke="#5e5e5e" stroke-width="1"/><path d="M1974.17 177.4V185.2" stroke="#5e5e5e" stroke-width="1"/><path d="M1989.45 177.4V185.2" stroke="#5e5e5e" stroke-width="1"/><path d="M2004.74 171V185.2" stroke="#6f6f6f" stroke-width="1"/><path d="M2020.03 177.4V185.2" stroke="#5e5e5e" stroke-width="1"/><path d="M2035.31 177.4V185.2" stroke="#5e5e5e" stroke-width="1"/><path d="M2050.60 177.4V185.2" stroke="#5e5e5e" stroke-width="1"/><path d="M2065.88 171V185.2" stroke="#6f6f6f" stroke-width="1"/><path d="M2081.16 177.4V185.2" stroke="#5e5e5e" stroke-width="1"/><path d="M2096.45 177.4V185.2" stroke="#5e5e5e" stroke-width="1"/><path d="M2111.74 177.4V185.2" stroke="#5e5e5e" stroke-width="1"/><path d="M2127.02 153.2V185.2" stroke="#8e8e8e" stroke-width="1"/><path d="M2142.30 177.4V185.2" stroke="#5e5e5e" stroke-width="1"/><path d="M2157.59 177.4V185.2" stroke="#5e5e5e" stroke-width="1"/><path d="M2172.88 177.4V185.2" stroke="#5e5e5e" stroke-width="1"/><path d="M2188.16 171V185.2" stroke="#6f6f6f" stroke-width="1"/><path d="M2203.45 177.4V185.2" stroke="#5e5e5e" stroke-width="1"/><path d="M2218.73 177.4V185.2" stroke="#5e5e5e" stroke-width="1"/><path d="M2234.01 177.4V185.2" stroke="#5e5e5e" stroke-width="1"/><path d="M2249.30 171V185.2" stroke="#6f6f6f" stroke-width="1"/><path d="M2264.59 177.4V185.2" stroke="#5e5e5e" stroke-width="1"/><path d="M2279.87 177.4V185.2" stroke="#5e5e5e" stroke-width="1"/><path d="M2295.16 177.4V185.2" stroke="#5e5e5e" stroke-width="1"/><path d="M2310.44 171V185.2" stroke="#6f6f6f" stroke-width="1"/><path d="M2325.72 177.4V185.2" stroke="#5e5e5e" stroke-width="1"/><path d="M2341.01 177.4V185.2" stroke="#5e5e5e" stroke-width="1"/><path d="M2356.30 177.4V185.2" stroke="#5e5e5e" stroke-width="1"/><path d="M2371.58 153.2V185.2" stroke="#8e8e8e" stroke-width="1"/><path d="M2386.87 177.4V185.2" stroke="#5e5e5e" stroke-width="1"/><path d="M2402.15 177.4V185.2" stroke="#5e5e5e" stroke-width="1"/><path d="M2417.43 177.4V185.2" stroke="#5e5e5e" stroke-width="1"/><path d="M2432.72 171V185.2" stroke="#6f6f6f" stroke-width="1"/><path d="M2448.01 177.4V185.2" stroke="#5e5e5e" stroke-width="1"/><path d="M2463.29 177.4V185.2" stroke="#5e5e5e" stroke-width="1"/><path d="M2478.57 177.4V185.2" stroke="#5e5e5e" stroke-width="1"/><path d="M2493.86 171V185.2" stroke="#6f6f6f" stroke-width="1"/><path d="M2509.14 177.4V185.2" stroke="#5e5e5e" stroke-width="1"/><path d="M2524.43 177.4V185.2" stroke="#5e5e5e" stroke-width="1"/><path d="M2539.72 177.4V185.2" stroke="#5e5e5e" stroke-width="1"/><path d="M2555.00 171V185.2" stroke="#6f6f6f" stroke-width="1"/><path d="M2570.28 177.4V185.2" stroke="#5e5e5e" stroke-width="1"/><path d="M2585.57 177.4V185.2" stroke="#5e5e5e" stroke-width="1"/><path d="M2600.86 177.4V185.2" stroke="#5e5e5e" stroke-width="1"/><path d="M406.6 152.6L413.6 158.800L406.6 165z" fill="#6a6a6a"/><path d="M415.4 150.5V185" stroke="#b4b4b4" stroke-width="0.800" stroke-dasharray="1 1"/></svg>
<svg class="tx" style="left:0;top:0;" width="2672" height="1465"><defs><clipPath id="tclip"><rect x="406.2" y="242" width="2206.4" height="1146"/></clipPath></defs><text x="418.80" y="161.80" font-size="12.2" fill="#dadada" stroke="#dadada" stroke-width="0.3">1</text><text x="663.36" y="161.80" font-size="12.2" fill="#dadada" stroke="#dadada" stroke-width="0.3">2</text><text x="907.92" y="161.80" font-size="12.2" fill="#dadada" stroke="#dadada" stroke-width="0.3">3</text><text x="1152.48" y="161.80" font-size="12.2" fill="#dadada" stroke="#dadada" stroke-width="0.3">4</text><text x="1397.04" y="161.80" font-size="12.2" fill="#dadada" stroke="#dadada" stroke-width="0.3">5</text><text x="1641.60" y="161.80" font-size="12.2" fill="#dadada" stroke="#dadada" stroke-width="0.3">6</text><text x="1886.16" y="161.80" font-size="12.2" fill="#dadada" stroke="#dadada" stroke-width="0.3">7</text><text x="2130.72" y="161.80" font-size="12.2" fill="#dadada" stroke="#dadada" stroke-width="0.3">8</text><text x="2375.28" y="161.80" font-size="12.2" fill="#dadada" stroke="#dadada" stroke-width="0.3">9</text></svg>
<div style="left:406.20px;top:186.40px;width:2206.40px;height:24.80px;background:#323232;"></div>
<div style="left:415.10px;top:186.40px;width:2197.50px;height:24.80px;background:linear-gradient(#4b4b4b,#444);box-shadow:inset 0 1px 0 #525252;"></div>
<div style="left:414.50px;top:186.40px;width:1.20px;height:24.80px;background:#141414;"></div>
<div style="left:903.62px;top:186.40px;width:1.20px;height:24.80px;background:#141414;"></div>
<div style="left:1881.86px;top:186.40px;width:1.20px;height:24.80px;background:#141414;"></div>
<div style="left:406.20px;top:211.20px;width:2206.40px;height:1.00px;background:#2a2a2a;"></div>
<svg class="tx" style="left:0;top:0;" width="2672" height="1465"><defs><clipPath id="tclip"><rect x="406.2" y="242" width="2206.4" height="1146"/></clipPath></defs><text x="634.36" y="202.80" font-size="13" fill="#e8e8e8" letter-spacing="0.182" stroke="#e8e8e8" stroke-width="0.3">Count In</text><text x="1379.34" y="202.80" font-size="13" fill="#e8e8e8" letter-spacing="0.397" stroke="#e8e8e8" stroke-width="0.3">Intro</text></svg>
<div style="left:406.20px;top:212.20px;width:2206.40px;height:27.40px;background:#313131;"></div>
<svg style="left:0.00px;top:0.00px;" width="2672" height="260" viewBox="0 0 2672 260"><path d="M415.10 212.2V239.6" stroke="#474747" stroke-width="1"/><path d="M476.24 212.2V239.6" stroke="#474747" stroke-width="1"/><path d="M537.38 212.2V239.6" stroke="#474747" stroke-width="1"/><path d="M598.52 212.2V239.6" stroke="#474747" stroke-width="1"/><path d="M659.66 212.2V239.6" stroke="#474747" stroke-width="1"/><path d="M720.80 212.2V239.6" stroke="#474747" stroke-width="1"/><path d="M781.94 212.2V239.6" stroke="#474747" stroke-width="1"/><path d="M843.08 212.2V239.6" stroke="#474747" stroke-width="1"/><rect x="781.94" y="212.2" width="61.14" height="27.40" fill="#4a4a4a"/><path d="M781.94 212.2V239.6" stroke="#1b1b1b" stroke-width="1.200"/><path d="M781.94 212.2h11.200L781.94 217.20z" fill="#202020"/><rect x="843.08" y="212.2" width="61.14" height="27.40" fill="#4a4a4a"/><path d="M843.08 212.2V239.6" stroke="#1b1b1b" stroke-width="1.200"/><path d="M843.08 212.2h11.200L843.08 217.20z" fill="#202020"/><rect x="904.22" y="212.2" width="366.84" height="27.40" fill="#4a4a4a"/><path d="M904.22 212.2V239.6" stroke="#1b1b1b" stroke-width="1.200"/><path d="M904.22 212.2h11.200L904.22 217.20z" fill="#202020"/><rect x="1271.06" y="212.2" width="61.14" height="27.40" fill="#4a4a4a"/><path d="M1271.06 212.2V239.6" stroke="#1b1b1b" stroke-width="1.200"/><path d="M1271.06 212.2h11.200L1271.06 217.20z" fill="#202020"/><rect x="1332.20" y="212.2" width="61.14" height="27.40" fill="#4a4a4a"/><path d="M1332.20 212.2V239.6" stroke="#1b1b1b" stroke-width="1.200"/><path d="M1332.20 212.2h11.200L1332.20 217.20z" fill="#202020"/><rect x="1393.34" y="212.2" width="366.84" height="27.40" fill="#4a4a4a"/><path d="M1393.34 212.2V239.6" stroke="#1b1b1b" stroke-width="1.200"/><path d="M1393.34 212.2h11.200L1393.34 217.20z" fill="#202020"/><rect x="1760.18" y="212.2" width="61.14" height="27.40" fill="#4a4a4a"/><path d="M1760.18 212.2V239.6" stroke="#1b1b1b" stroke-width="1.200"/><path d="M1760.18 212.2h11.200L1760.18 217.20z" fill="#202020"/><rect x="1821.32" y="212.2" width="61.14" height="27.40" fill="#4a4a4a"/><path d="M1821.32 212.2V239.6" stroke="#1b1b1b" stroke-width="1.200"/><path d="M1821.32 212.2h11.200L1821.32 217.20z" fill="#202020"/><rect x="1882.46" y="212.2" width="366.84" height="27.40" fill="#4a4a4a"/><path d="M1882.46 212.2V239.6" stroke="#1b1b1b" stroke-width="1.200"/><path d="M1882.46 212.2h11.200L1882.46 217.20z" fill="#202020"/><rect x="2249.30" y="212.2" width="61.14" height="27.40" fill="#4a4a4a"/><path d="M2249.30 212.2V239.6" stroke="#1b1b1b" stroke-width="1.200"/><path d="M2249.30 212.2h11.200L2249.30 217.20z" fill="#202020"/><rect x="2310.44" y="212.2" width="61.14" height="27.40" fill="#4a4a4a"/><path d="M2310.44 212.2V239.6" stroke="#1b1b1b" stroke-width="1.200"/><path d="M2310.44 212.2h11.200L2310.44 217.20z" fill="#202020"/><rect x="2371.58" y="212.2" width="241.02" height="27.40" fill="#4a4a4a"/><path d="M2371.58 212.2V239.6" stroke="#1b1b1b" stroke-width="1.200"/><path d="M2371.58 212.2h11.200L2371.58 217.20z" fill="#202020"/></svg>
<svg class="tx" style="left:0;top:0;" width="2672" height="1465"><defs><clipPath id="tclip"><rect x="406.2" y="242" width="2206.4" height="1146"/></clipPath></defs><text x="793.44" y="228.00" font-size="12.6" fill="#e4e4e4" letter-spacing="0.350" stroke="#e4e4e4" stroke-width="0.3">Am</text><text x="854.58" y="228.00" font-size="12.6" fill="#e4e4e4" stroke="#e4e4e4" stroke-width="0.3">C</text><text x="915.72" y="228.00" font-size="12.6" fill="#e4e4e4" letter-spacing="0.402" stroke="#e4e4e4" stroke-width="0.3">Dm</text><text x="1282.56" y="228.00" font-size="12.6" fill="#e4e4e4" letter-spacing="0.350" stroke="#e4e4e4" stroke-width="0.3">Am</text><text x="1343.70" y="228.00" font-size="12.6" fill="#e4e4e4" stroke="#e4e4e4" stroke-width="0.3">C</text><text x="1404.84" y="228.00" font-size="12.6" fill="#e4e4e4" letter-spacing="0.402" stroke="#e4e4e4" stroke-width="0.3">Dm</text><text x="1771.68" y="228.00" font-size="12.6" fill="#e4e4e4" letter-spacing="0.350" stroke="#e4e4e4" stroke-width="0.3">Am</text><text x="1832.82" y="228.00" font-size="12.6" fill="#e4e4e4" stroke="#e4e4e4" stroke-width="0.3">C</text><text x="1893.96" y="228.00" font-size="12.6" fill="#e4e4e4" letter-spacing="0.402" stroke="#e4e4e4" stroke-width="0.3">Dm</text><text x="2260.80" y="228.00" font-size="12.6" fill="#e4e4e4" letter-spacing="0.350" stroke="#e4e4e4" stroke-width="0.3">Am</text><text x="2321.94" y="228.00" font-size="12.6" fill="#e4e4e4" stroke="#e4e4e4" stroke-width="0.3">C</text><text x="2383.08" y="228.00" font-size="12.6" fill="#e4e4e4" letter-spacing="0.402" stroke="#e4e4e4" stroke-width="0.3">Dm</text></svg>
<svg style="left:0;top:0;" width="2672" height="1465" viewBox="0 0 2672 1465"><defs><clipPath id="lc"><rect x="406.2" y="242.8" width="2206.4" height="1144.800"/></clipPath></defs><g clip-path="url(#lc)"><rect x="406.2" y="242.8" width="2206.4" height="1144.8" fill="#2e2e2e"/><rect x="406.2" y="242.8" width="2206.4" height="921.6" fill="#303030"/><rect x="406.2" y="564.4" width="2206.4" height="125.7" fill="#3b3b3b"/><path d="M415.10 242.8V1164.4" stroke="#3a3a3a" stroke-width="1"/><path d="M476.24 242.8V1164.4" stroke="#3a3a3a" stroke-width="1"/><path d="M537.38 242.8V1164.4" stroke="#3a3a3a" stroke-width="1"/><path d="M598.52 242.8V1164.4" stroke="#3a3a3a" stroke-width="1"/><path d="M659.66 242.8V1164.4" stroke="#3a3a3a" stroke-width="1"/><path d="M720.80 242.8V1164.4" stroke="#3a3a3a" stroke-width="1"/><path d="M781.94 242.8V1164.4" stroke="#3a3a3a" stroke-width="1"/><path d="M843.08 242.8V1164.4" stroke="#3a3a3a" stroke-width="1"/><path d="M904.22 242.8V1164.4" stroke="#3a3a3a" stroke-width="1"/><path d="M965.36 242.8V1164.4" stroke="#3a3a3a" stroke-width="1"/><path d="M1026.50 242.8V1164.4" stroke="#3a3a3a" stroke-width="1"/><path d="M1087.64 242.8V1164.4" stroke="#3a3a3a" stroke-width="1"/><path d="M1148.78 242.8V1164.4" stroke="#3a3a3a" stroke-width="1"/><path d="M1209.92 242.8V1164.4" stroke="#3a3a3a" stroke-width="1"/><path d="M1271.06 242.8V1164.4" stroke="#3a3a3a" stroke-width="1"/><path d="M1332.20 242.8V1164.4" stroke="#3a3a3a" stroke-width="1"/><path d="M1393.34 242.8V1164.4" stroke="#3a3a3a" stroke-width="1"/><path d="M1454.48 242.8V1164.4" stroke="#3a3a3a" stroke-width="1"/><path d="M1515.62 242.8V1164.4" stroke="#3a3a3a" stroke-width="1"/><path d="M1576.76 242.8V1164.4" stroke="#3a3a3a" stroke-width="1"/><path d="M1637.90 242.8V1164.4" stroke="#3a3a3a" stroke-width="1"/><path d="M1699.04 242.8V1164.4" stroke="#3a3a3a" stroke-width="1"/><path d="M1760.18 242.8V1164.4" stroke="#3a3a3a" stroke-width="1"/><path d="M1821.32 242.8V1164.4" stroke="#3a3a3a" stroke-width="1"/><path d="M1882.46 242.8V1164.4" stroke="#3a3a3a" stroke-width="1"/><path d="M1943.60 242.8V1164.4" stroke="#3a3a3a" stroke-width="1"/><path d="M2004.74 242.8V1164.4" stroke="#3a3a3a" stroke-width="1"/><path d="M2065.88 242.8V1164.4" stroke="#3a3a3a" stroke-width="1"/><path d="M2127.02 242.8V1164.4" stroke="#3a3a3a" stroke-width="1"/><path d="M2188.16 242.8V1164.4" stroke="#3a3a3a" stroke-width="1"/><path d="M2249.30 242.8V1164.4" stroke="#3a3a3a" stroke-width="1"/><path d="M2310.44 242.8V1164.4" stroke="#3a3a3a" stroke-width="1"/><path d="M2371.58 242.8V1164.4" stroke="#3a3a3a" stroke-width="1"/><path d="M2432.72 242.8V1164.4" stroke="#3a3a3a" stroke-width="1"/><path d="M2493.86 242.8V1164.4" stroke="#3a3a3a" stroke-width="1"/><path d="M2555.00 242.8V1164.4" stroke="#3a3a3a" stroke-width="1"/><path d="M406.2 1164.4H2612.6" stroke="#262626" stroke-width="1"/><rect x="414.60" y="243.10" width="2206.80" height="874.50" rx="4.5" fill="#0b0b0b"/><rect x="415.20" y="243.20" width="2206.00" height="44.20" rx="4.7" fill="#1da132" stroke="#0c0c0c" stroke-width="1.300"/><rect x="415.20" y="289.70" width="2206.00" height="43.50" rx="4.7" fill="#1da132" stroke="#0c0c0c" stroke-width="1.300"/><rect x="415.20" y="335.50" width="2206.00" height="43.60" rx="4.7" fill="#1da132" stroke="#0c0c0c" stroke-width="1.300"/><rect x="415.20" y="381.40" width="2206.00" height="43.60" rx="4.7" fill="#1da132" stroke="#0c0c0c" stroke-width="1.300"/><rect x="415.20" y="427.30" width="2206.00" height="43.80" rx="4.7" fill="#1da132" stroke="#0c0c0c" stroke-width="1.300"/><rect x="415.20" y="473.40" width="2206.00" height="43.80" rx="4.7" fill="#1da132" stroke="#0c0c0c" stroke-width="1.300"/><rect x="415.20" y="519.50" width="2206.00" height="44.00" rx="4.7" fill="#4a4a4a" stroke="#0c0c0c" stroke-width="1.300"/><path d="M476.24 520.6V562.4M537.38 520.6V562.4M598.52 520.6V562.4M659.66 520.6V562.4M720.80 520.6V562.4M781.94 520.6V562.4M843.08 520.6V562.4M904.22 520.6V562.4M965.36 520.6V562.4M1026.50 520.6V562.4M1087.64 520.6V562.4M1148.78 520.6V562.4M1209.92 520.6V562.4M1271.06 520.6V562.4M1332.20 520.6V562.4M1393.34 520.6V562.4M1454.48 520.6V562.4M1515.62 520.6V562.4M1576.76 520.6V562.4M1637.90 520.6V562.4M1699.04 520.6V562.4M1760.18 520.6V562.4M1821.32 520.6V562.4M1882.46 520.6V562.4M1943.60 520.6V562.4M2004.74 520.6V562.4M2065.88 520.6V562.4M2127.02 520.6V562.4M2188.16 520.6V562.4M2249.30 520.6V562.4M2310.44 520.6V562.4M2371.58 520.6V562.4M2432.72 520.6V562.4M2493.86 520.6V562.4M2555.00 520.6V562.4" stroke="#505050" stroke-width="1" fill="none"/><rect x="415.20" y="565.80" width="2206.00" height="123.40" rx="4.7" fill="#4a4a4a" stroke="#0c0c0c" stroke-width="1.300"/><path d="M476.24 566.9V688.1M537.38 566.9V688.1M598.52 566.9V688.1M659.66 566.9V688.1M720.80 566.9V688.1M781.94 566.9V688.1M843.08 566.9V688.1M904.22 566.9V688.1M965.36 566.9V688.1M1026.50 566.9V688.1M1087.64 566.9V688.1M1148.78 566.9V688.1M1209.92 566.9V688.1M1271.06 566.9V688.1M1332.20 566.9V688.1M1393.34 566.9V688.1M1454.48 566.9V688.1M1515.62 566.9V688.1M1576.76 566.9V688.1M1637.90 566.9V688.1M1699.04 566.9V688.1M1760.18 566.9V688.1M1821.32 566.9V688.1M1882.46 566.9V688.1M1943.60 566.9V688.1M2004.74 566.9V688.1M2065.88 566.9V688.1M2127.02 566.9V688.1M2188.16 566.9V688.1M2249.30 566.9V688.1M2310.44 566.9V688.1M2371.58 566.9V688.1M2432.72 566.9V688.1M2493.86 566.9V688.1M2555.00 566.9V688.1" stroke="#505050" stroke-width="1" fill="none"/><path d="M415.8 636.4H2612.6" stroke="#a9a9a9" stroke-width="0.900"/><path d="M1678.3 585V688.400" stroke="#0e0e0e" stroke-width="1.100"/><path d="M2091.5 585V688.400" stroke="#0e0e0e" stroke-width="1.100"/><path d="M1722.3 636.4L1723.3 635.0L1724.3 635.0L1725.3 635.2L1726.3 635.0L1727.3 635.0L1728.3 635.3L1729.3 635.1L1730.3 635.1L1731.3 635.1L1732.3 635.2L1733.3 635.1L1734.3 635.2L1735.3 635.3L1736.3 635.2L1737.3 635.0L1738.3 635.2L1739.3 635.1L1740.3 635.3L1741.3 635.1L1742.3 635.3L1743.3 635.2L1744.3 635.2L1745.3 635.2L1746.3 635.1L1747.3 635.1L1748.3 635.2L1749.3 635.1L1750.3 635.2L1751.3 635.2L1752.3 635.2L1753.3 635.2L1754.3 635.1L1755.3 635.1L1756.3 635.1L1757.3 635.0L1758.3 635.1L1759.3 634.9L1760.3 635.0L1761.3 635.1L1762.3 635.1L1763.3 635.0L1764.3 634.9L1765.3 635.0L1766.3 634.9L1767.3 635.2L1768.3 635.1L1769.3 635.1L1770.3 635.0L1771.3 634.9L1772.3 635.1L1773.3 634.9L1774.3 634.9L1775.3 635.2L1776.3 635.0L1777.3 635.2L1778.3 635.2L1779.3 635.3L1780.3 635.3L1781.3 635.2L1782.3 635.2L1783.3 635.2L1784.3 635.1L1785.3 635.2L1786.3 635.3L1787.3 635.1L1788.3 635.1L1789.3 635.3L1790.3 635.1L1791.3 635.0L1792.3 635.2L1793.3 635.3L1794.3 635.1L1795.3 635.3L1796.3 635.8L1796.3 637.4L1795.3 638.7L1794.3 639.1L1793.3 639.0L1792.3 639.2L1791.3 639.5L1790.3 639.7L1789.3 639.3L1788.3 639.0L1787.3 639.6L1786.3 639.5L1785.3 639.7L1784.3 639.4L1783.3 638.7L1782.3 638.5L1781.3 638.7L1780.3 638.4L1779.3 638.5L1778.3 638.6L1777.3 638.8L1776.3 638.7L1775.3 639.5L1774.3 639.8L1773.3 640.0L1772.3 640.5L1771.3 639.8L1770.3 639.9L1769.3 640.0L1768.3 639.8L1767.3 639.9L1766.3 639.9L1765.3 639.6L1764.3 639.9L1763.3 640.0L1762.3 639.5L1761.3 639.4L1760.3 639.6L1759.3 639.4L1758.3 639.7L1757.3 639.2L1756.3 639.2L1755.3 639.7L1754.3 639.4L1753.3 639.2L1752.3 639.1L1751.3 639.6L1750.3 639.1L1749.3 639.2L1748.3 639.5L1747.3 639.5L1746.3 639.4L1745.3 639.4L1744.3 639.3L1743.3 639.1L1742.3 639.7L1741.3 639.3L1740.3 639.6L1739.3 639.1L1738.3 639.3L1737.3 639.4L1736.3 639.6L1735.3 639.6L1734.3 639.0L1733.3 639.0L1732.3 639.0L1731.3 639.4L1730.3 639.5L1729.3 639.1L1728.3 639.4L1727.3 639.0L1726.3 639.3L1725.3 638.8L1724.3 638.2L1723.3 637.5L1722.3 636.4z" fill="#a6a6a6"/><path d="M1806.0 636.2L1807.0 635.5L1808.0 636.2L1808.0 636.6L1807.0 636.9L1806.0 636.6z" fill="#a6a6a6"/><path d="M1810.7 636.1L1811.7 635.6L1812.7 635.2L1813.7 634.9L1814.7 634.6L1815.7 634.7L1816.7 634.7L1817.7 634.4L1818.7 634.3L1819.7 634.6L1820.7 634.6L1821.7 634.5L1822.7 634.6L1823.7 634.8L1824.7 634.7L1825.7 634.8L1826.7 635.0L1827.7 635.0L1828.7 635.2L1829.7 634.9L1830.7 635.1L1831.7 635.1L1832.7 635.2L1833.7 635.2L1834.7 635.2L1835.7 635.2L1836.7 635.4L1837.7 635.3L1838.7 635.4L1839.7 635.5L1840.7 635.7L1841.7 635.7L1842.7 635.9L1843.7 635.9L1844.7 636.1L1844.7 636.7L1843.7 636.7L1842.7 636.9L1841.7 636.9L1840.7 637.0L1839.7 637.1L1838.7 637.1L1837.7 637.3L1836.7 637.6L1835.7 637.9L1834.7 638.0L1833.7 638.3L1832.7 638.4L1831.7 638.8L1830.7 639.0L1829.7 639.1L1828.7 639.5L1827.7 639.6L1826.7 639.5L1825.7 639.7L1824.7 640.4L1823.7 640.0L1822.7 640.3L1821.7 640.5L1820.7 640.6L1819.7 640.2L1818.7 639.7L1817.7 639.9L1816.7 639.1L1815.7 638.9L1814.7 638.5L1813.7 638.1L1812.7 637.7L1811.7 637.1L1810.7 636.7z" fill="#a6a6a6"/><path d="M1848.0 636.2L1849.0 635.7L1850.0 635.1L1851.0 635.2L1852.0 635.1L1853.0 635.3L1854.0 635.0L1855.0 635.3L1856.0 635.3L1857.0 635.4L1858.0 635.7L1859.0 636.1L1859.0 636.7L1858.0 637.1L1857.0 637.5L1856.0 638.0L1855.0 638.5L1854.0 638.9L1853.0 638.7L1852.0 638.1L1851.0 638.2L1850.0 638.0L1849.0 637.2L1848.0 636.7z" fill="#a6a6a6"/><path d="M1872.0 636.2L1873.0 635.8L1874.0 635.4L1875.0 635.2L1876.0 635.0L1877.0 635.0L1878.0 635.0L1879.0 635.1L1880.0 634.9L1881.0 635.0L1882.0 635.0L1883.0 635.1L1884.0 635.0L1885.0 635.0L1886.0 635.2L1887.0 635.2L1888.0 635.5L1889.0 635.7L1890.0 635.7L1891.0 636.1L1891.0 636.6L1890.0 637.2L1889.0 637.6L1888.0 638.0L1887.0 638.4L1886.0 638.5L1885.0 638.7L1884.0 638.8L1883.0 639.0L1882.0 639.0L1881.0 638.9L1880.0 639.2L1879.0 638.8L1878.0 638.6L1877.0 638.4L1876.0 638.0L1875.0 638.2L1874.0 637.5L1873.0 637.2L1872.0 636.6z" fill="#a6a6a6"/><path d="M1903.0 636.2L1904.0 635.6L1905.0 635.4L1906.0 636.0L1907.0 636.2L1907.0 636.8L1906.0 637.6L1905.0 637.1L1904.0 636.8L1903.0 636.6z" fill="#a6a6a6"/><path d="M1911.9 636.1L1912.9 635.8L1913.9 635.8L1914.9 635.6L1915.9 635.3L1916.9 635.2L1917.9 635.2L1918.9 635.1L1919.9 634.9L1920.9 634.7L1921.9 634.4L1922.9 634.7L1923.9 634.5L1924.9 634.7L1925.9 634.4L1926.9 634.5L1927.9 634.5L1928.9 634.4L1929.9 634.3L1930.9 634.4L1931.9 634.7L1932.9 634.5L1933.9 634.5L1934.9 635.0L1935.9 635.0L1936.9 634.9L1937.9 635.0L1938.9 635.0L1939.9 635.1L1940.9 635.1L1941.9 635.1L1942.9 635.1L1943.9 635.0L1944.9 635.2L1945.9 635.2L1946.9 635.3L1947.9 635.3L1948.9 635.1L1949.9 635.2L1950.9 635.3L1951.9 635.4L1952.9 635.6L1953.9 635.6L1954.9 635.9L1955.9 636.1L1955.9 636.7L1954.9 636.9L1953.9 637.2L1952.9 637.5L1951.9 637.7L1950.9 638.0L1949.9 637.9L1948.9 638.3L1947.9 638.3L1946.9 638.7L1945.9 638.7L1944.9 638.7L1943.9 638.6L1942.9 638.9L1941.9 638.5L1940.9 638.8L1939.9 638.4L1938.9 638.6L1937.9 638.7L1936.9 638.6L1935.9 638.6L1934.9 638.5L1933.9 638.4L1932.9 638.8L1931.9 638.8L1930.9 638.8L1929.9 638.9L1928.9 639.0L1927.9 638.8L1926.9 638.8L1925.9 638.7L1924.9 639.2L1923.9 639.3L1922.9 639.2L1921.9 639.2L1920.9 638.9L1919.9 639.0L1918.9 638.8L1917.9 638.5L1916.9 638.5L1915.9 638.1L1914.9 637.8L1913.9 637.7L1912.9 637.1L1911.9 636.7z" fill="#a6a6a6"/><path d="M2248.2 636.1L2249.2 635.1L2250.2 634.8L2251.2 634.9L2252.2 635.2L2253.2 635.3L2254.2 635.5L2255.2 635.4L2256.2 635.5L2257.2 635.4L2258.2 635.2L2259.2 635.0L2260.2 634.9L2261.2 634.8L2262.2 634.9L2263.2 634.8L2264.2 634.5L2265.2 634.7L2266.2 634.6L2267.2 634.5L2268.2 634.2L2269.2 634.3L2270.2 634.6L2271.2 634.7L2272.2 634.7L2273.2 634.8L2274.2 635.0L2275.2 635.0L2276.2 635.2L2277.2 635.4L2278.2 635.6L2279.2 635.9L2279.2 637.0L2278.2 637.2L2277.2 637.5L2276.2 637.7L2275.2 638.0L2274.2 638.1L2273.2 638.0L2272.2 638.1L2271.2 638.3L2270.2 638.3L2269.2 638.4L2268.2 638.4L2267.2 638.5L2266.2 638.1L2265.2 638.0L2264.2 638.1L2263.2 638.0L2262.2 637.9L2261.2 637.8L2260.2 637.8L2259.2 637.7L2258.2 637.8L2257.2 637.8L2256.2 637.5L2255.2 637.9L2254.2 638.1L2253.2 638.2L2252.2 638.6L2251.2 638.6L2250.2 639.4L2249.2 639.0L2248.2 636.7z" fill="#a6a6a6"/><path d="M2289.4 636.1L2290.4 635.7L2291.4 635.0L2292.4 634.7L2293.4 634.8L2294.4 634.9L2295.4 635.2L2296.4 635.1L2297.4 635.4L2298.4 635.4L2299.4 635.4L2300.4 635.4L2301.4 635.4L2302.4 635.5L2303.4 635.5L2304.4 635.5L2305.4 635.6L2306.4 635.5L2307.4 635.6L2308.4 635.5L2309.4 635.4L2310.4 635.5L2311.4 635.6L2312.4 635.6L2313.4 635.5L2314.4 635.7L2315.4 635.6L2316.4 635.6L2317.4 635.7L2318.4 635.6L2319.4 635.6L2320.4 635.7L2321.4 635.8L2322.4 635.7L2322.4 636.8L2321.4 636.9L2320.4 637.0L2319.4 636.9L2318.4 637.0L2317.4 637.0L2316.4 637.0L2315.4 637.1L2314.4 637.1L2313.4 637.1L2312.4 637.2L2311.4 637.3L2310.4 637.3L2309.4 637.3L2308.4 637.3L2307.4 637.5L2306.4 637.4L2305.4 637.4L2304.4 637.6L2303.4 637.8L2302.4 637.6L2301.4 637.9L2300.4 637.7L2299.4 638.1L2298.4 637.9L2297.4 638.0L2296.4 638.0L2295.4 637.8L2294.4 638.0L2293.4 637.7L2292.4 637.9L2291.4 637.6L2290.4 637.1L2289.4 636.6z" fill="#a6a6a6"/><path d="M2337.0 636.2L2338.0 635.5L2339.0 636.2L2339.0 636.6L2338.0 636.8L2337.0 636.6z" fill="#a6a6a6"/><path d="M2342.5 636.2L2343.5 635.9L2344.5 635.7L2345.5 635.5L2346.5 635.2L2347.5 634.8L2348.5 634.8L2349.5 634.5L2350.5 634.2L2351.5 634.3L2352.5 634.2L2353.5 634.6L2354.5 634.6L2355.5 634.7L2356.5 634.8L2357.5 634.7L2358.5 634.8L2359.5 634.9L2360.5 634.8L2361.5 635.1L2362.5 635.1L2363.5 635.0L2364.5 635.1L2365.5 635.1L2366.5 635.2L2367.5 635.2L2368.5 635.3L2369.5 635.3L2370.5 635.1L2371.5 635.3L2372.5 635.4L2373.5 635.2L2374.5 635.3L2375.5 635.4L2376.5 635.5L2377.5 635.6L2378.5 635.6L2379.5 635.6L2380.5 635.6L2381.5 635.7L2382.5 635.6L2383.5 635.6L2384.5 635.8L2385.5 635.6L2386.5 635.7L2387.5 635.7L2388.5 635.8L2389.5 635.7L2390.5 635.8L2391.5 635.8L2392.5 635.8L2393.5 635.8L2394.5 635.7L2395.5 635.7L2396.5 635.7L2397.5 635.7L2398.5 635.8L2399.5 635.8L2400.5 635.7L2401.5 635.8L2402.5 635.8L2403.5 635.7L2404.5 635.7L2404.5 636.8L2403.5 637.0L2402.5 637.1L2401.5 637.0L2400.5 637.1L2399.5 637.1L2398.5 637.3L2397.5 637.4L2396.5 637.5L2395.5 637.5L2394.5 637.5L2393.5 637.5L2392.5 637.4L2391.5 637.3L2390.5 637.4L2389.5 637.4L2388.5 637.3L2387.5 637.3L2386.5 637.3L2385.5 637.3L2384.5 637.2L2383.5 637.2L2382.5 637.3L2381.5 637.3L2380.5 637.2L2379.5 637.1L2378.5 637.3L2377.5 637.6L2376.5 637.8L2375.5 637.9L2374.5 638.6L2373.5 638.3L2372.5 638.4L2371.5 638.9L2370.5 638.5L2369.5 638.9L2368.5 638.9L2367.5 639.3L2366.5 639.0L2365.5 639.1L2364.5 639.4L2363.5 639.5L2362.5 639.7L2361.5 639.0L2360.5 639.7L2359.5 639.6L2358.5 639.3L2357.5 639.9L2356.5 640.1L2355.5 639.6L2354.5 640.3L2353.5 640.0L2352.5 640.3L2351.5 640.1L2350.5 639.4L2349.5 639.0L2348.5 638.7L2347.5 637.9L2346.5 637.6L2345.5 637.3L2344.5 637.1L2343.5 636.9L2342.5 636.7z" fill="#a6a6a6"/><path d="M2408.0 636.2L2409.0 636.1L2410.0 635.9L2411.0 635.8L2412.0 635.7L2413.0 635.6L2414.0 635.5L2415.0 635.5L2416.0 635.8L2417.0 635.8L2418.0 635.9L2419.0 636.0L2420.0 636.1L2421.0 635.9L2422.0 635.9L2423.0 635.8L2424.0 635.8L2425.0 635.6L2426.0 635.7L2427.0 635.6L2428.0 635.5L2429.0 635.6L2430.0 635.7L2431.0 635.6L2432.0 635.7L2433.0 635.8L2434.0 635.9L2435.0 635.9L2436.0 636.0L2437.0 635.9L2438.0 635.9L2439.0 635.9L2440.0 635.9L2441.0 636.0L2442.0 636.0L2443.0 635.8L2444.0 635.8L2445.0 635.8L2445.0 636.9L2444.0 636.9L2443.0 636.9L2442.0 636.9L2441.0 637.0L2440.0 636.9L2439.0 637.0L2438.0 637.0L2437.0 637.0L2436.0 637.0L2435.0 637.1L2434.0 637.0L2433.0 637.0L2432.0 636.9L2431.0 636.9L2430.0 636.9L2429.0 636.9L2428.0 636.8L2427.0 636.9L2426.0 636.9L2425.0 636.9L2424.0 637.0L2423.0 636.9L2422.0 637.1L2421.0 637.1L2420.0 637.1L2419.0 637.1L2418.0 637.1L2417.0 637.0L2416.0 637.0L2415.0 636.9L2414.0 636.9L2413.0 636.8L2412.0 636.8L2411.0 636.8L2410.0 636.7L2409.0 636.7L2408.0 636.7z" fill="#a6a6a6"/><path d="M2445.9 636.0L2446.9 635.9L2447.9 635.9L2448.9 635.7L2449.9 635.7L2450.9 635.7L2451.9 635.5L2452.9 635.5L2453.9 635.6L2454.9 635.5L2455.9 635.6L2456.9 635.5L2457.9 635.5L2458.9 635.7L2459.9 635.7L2460.9 635.5L2461.9 635.7L2462.9 635.6L2463.9 635.7L2464.9 635.7L2465.9 635.7L2466.9 635.7L2467.9 635.5L2468.9 635.5L2469.9 635.4L2470.9 635.4L2471.9 635.2L2472.9 635.4L2473.9 635.4L2474.9 635.5L2475.9 635.5L2476.9 635.5L2477.9 635.6L2478.9 635.7L2479.9 635.7L2480.9 635.7L2481.9 635.7L2482.9 635.6L2483.9 635.6L2484.9 635.5L2485.9 635.5L2486.9 635.4L2487.9 635.4L2488.9 635.5L2489.9 635.3L2490.9 635.4L2491.9 635.4L2492.9 635.2L2493.9 635.3L2494.9 635.2L2495.9 635.3L2496.9 635.3L2497.9 635.3L2498.9 635.2L2499.9 635.3L2500.9 635.2L2501.9 635.3L2502.9 635.3L2503.9 635.4L2504.9 635.2L2505.9 635.3L2506.9 635.2L2507.9 635.2L2508.9 635.3L2509.9 635.1L2510.9 635.2L2511.9 635.3L2512.9 635.1L2513.9 635.2L2514.9 635.2L2515.9 635.2L2516.9 635.3L2517.9 635.5L2518.9 635.6L2519.9 635.6L2520.9 635.8L2521.9 636.0L2521.9 636.7L2520.9 637.0L2519.9 637.0L2518.9 637.2L2517.9 637.2L2516.9 637.3L2515.9 637.3L2514.9 637.5L2513.9 637.7L2512.9 637.8L2511.9 637.5L2510.9 637.6L2509.9 637.9L2508.9 637.8L2507.9 637.7L2506.9 637.8L2505.9 637.9L2504.9 637.8L2503.9 637.9L2502.9 638.0L2501.9 638.0L2500.9 637.9L2499.9 638.1L2498.9 638.1L2497.9 638.0L2496.9 638.1L2495.9 638.2L2494.9 638.4L2493.9 638.2L2492.9 638.4L2491.9 638.3L2490.9 638.6L2489.9 638.3L2488.9 638.7L2487.9 638.9L2486.9 638.8L2485.9 638.5L2484.9 638.6L2483.9 638.4L2482.9 638.1L2481.9 638.3L2480.9 637.9L2479.9 637.9L2478.9 638.0L2477.9 637.9L2476.9 638.1L2475.9 638.3L2474.9 638.3L2473.9 638.6L2472.9 638.4L2471.9 638.4L2470.9 638.5L2469.9 638.3L2468.9 637.9L2467.9 638.0L2466.9 637.6L2465.9 637.8L2464.9 637.8L2463.9 637.7L2462.9 637.6L2461.9 637.7L2460.9 637.8L2459.9 637.6L2458.9 637.7L2457.9 637.7L2456.9 637.7L2455.9 637.9L2454.9 637.8L2453.9 637.9L2452.9 637.8L2451.9 637.9L2450.9 637.6L2449.9 637.5L2448.9 637.4L2447.9 637.1L2446.9 637.0L2445.9 636.8z" fill="#a6a6a6"/><rect x="415.20" y="691.50" width="2206.00" height="67.80" rx="4.7" fill="#4a4a4a" stroke="#0c0c0c" stroke-width="1.300"/><path d="M476.24 692.6V758.2M537.38 692.6V758.2M598.52 692.6V758.2M659.66 692.6V758.2M720.80 692.6V758.2M781.94 692.6V758.2M843.08 692.6V758.2M904.22 692.6V758.2M965.36 692.6V758.2M1026.50 692.6V758.2M1087.64 692.6V758.2M1148.78 692.6V758.2M1209.92 692.6V758.2M1271.06 692.6V758.2M1332.20 692.6V758.2M1393.34 692.6V758.2M1454.48 692.6V758.2M1515.62 692.6V758.2M1576.76 692.6V758.2M1637.90 692.6V758.2M1699.04 692.6V758.2M1760.18 692.6V758.2M1821.32 692.6V758.2M1882.46 692.6V758.2M1943.60 692.6V758.2M2004.74 692.6V758.2M2065.88 692.6V758.2M2127.02 692.6V758.2M2188.16 692.6V758.2M2249.30 692.6V758.2M2310.44 692.6V758.2M2371.58 692.6V758.2M2432.72 692.6V758.2M2493.86 692.6V758.2M2555.00 692.6V758.2" stroke="#505050" stroke-width="1" fill="none"/><path d="M415.8 734.4H2612.6" stroke="#a9a9a9" stroke-width="0.900"/><path d="M1722.3 734.4L1723.3 730.9L1724.3 728.4L1725.3 727.2L1726.3 728.6L1727.3 729.6L1728.3 729.6L1729.3 729.7L1730.3 729.7L1731.3 729.8L1732.3 729.9L1733.3 729.7L1734.3 729.7L1735.3 730.2L1736.3 730.2L1737.3 729.9L1738.3 730.3L1739.3 729.9L1740.3 729.9L1741.3 730.1L1742.3 730.3L1743.3 730.0L1744.3 729.9L1745.3 729.8L1746.3 730.3L1747.3 729.9L1748.3 730.2L1749.3 729.8L1750.3 729.6L1751.3 729.8L1752.3 729.6L1753.3 729.6L1754.3 730.2L1755.3 729.9L1756.3 729.5L1757.3 729.8L1758.3 729.9L1759.3 730.1L1760.3 729.4L1761.3 729.6L1762.3 729.9L1763.3 729.5L1764.3 729.1L1765.3 729.8L1766.3 729.0L1767.3 729.0L1768.3 729.5L1769.3 728.8L1770.3 729.1L1771.3 729.1L1772.3 729.3L1773.3 729.0L1774.3 728.8L1775.3 729.5L1776.3 729.0L1777.3 729.0L1778.3 729.0L1779.3 729.2L1780.3 729.7L1781.3 729.6L1782.3 729.3L1783.3 729.2L1784.3 729.2L1785.3 729.2L1786.3 728.6L1787.3 729.3L1788.3 729.3L1789.3 728.8L1790.3 729.2L1791.3 729.4L1792.3 729.0L1793.3 729.7L1794.3 729.7L1795.3 729.8L1796.3 731.6L1796.3 737.2L1795.3 744.0L1794.3 745.2L1793.3 746.1L1792.3 745.5L1791.3 745.9L1790.3 745.4L1789.3 746.0L1788.3 744.8L1787.3 745.3L1786.3 744.5L1785.3 743.7L1784.3 742.1L1783.3 740.9L1782.3 741.0L1781.3 741.3L1780.3 741.5L1779.3 741.2L1778.3 741.8L1777.3 742.3L1776.3 744.3L1775.3 745.0L1774.3 746.3L1773.3 745.4L1772.3 746.7L1771.3 746.7L1770.3 746.0L1769.3 746.4L1768.3 746.1L1767.3 746.8L1766.3 746.6L1765.3 745.7L1764.3 745.1L1763.3 746.6L1762.3 746.2L1761.3 746.5L1760.3 745.7L1759.3 746.2L1758.3 746.3L1757.3 744.9L1756.3 746.6L1755.3 746.0L1754.3 745.4L1753.3 746.1L1752.3 745.9L1751.3 745.5L1750.3 745.8L1749.3 745.8L1748.3 745.5L1747.3 745.3L1746.3 745.8L1745.3 745.5L1744.3 745.2L1743.3 745.0L1742.3 745.1L1741.3 745.6L1740.3 745.5L1739.3 745.9L1738.3 745.4L1737.3 745.7L1736.3 746.7L1735.3 746.2L1734.3 746.0L1733.3 746.7L1732.3 745.8L1731.3 745.7L1730.3 746.8L1729.3 745.7L1728.3 745.5L1727.3 746.2L1726.3 746.9L1725.3 746.2L1724.3 746.1L1723.3 745.4L1722.3 734.4z" fill="#a6a6a6"/><path d="M1805.8 734.4L1806.8 730.6L1807.8 733.5L1808.8 733.7L1808.8 736.2L1807.8 738.1L1806.8 736.0L1805.8 734.4z" fill="#a6a6a6"/><path d="M1810.7 734.0L1811.7 731.9L1812.7 730.0L1813.7 728.8L1814.7 727.7L1815.7 727.2L1816.7 727.6L1817.7 727.8L1818.7 727.8L1819.7 728.2L1820.7 728.6L1821.7 728.3L1822.7 728.5L1823.7 728.4L1824.7 728.9L1825.7 728.9L1826.7 728.5L1827.7 729.1L1828.7 728.5L1829.7 729.1L1830.7 729.3L1831.7 729.1L1832.7 728.7L1833.7 729.1L1834.7 728.4L1835.7 728.0L1836.7 728.8L1837.7 729.4L1838.7 730.8L1839.7 732.1L1840.7 732.4L1841.7 732.4L1842.7 732.5L1843.7 732.9L1844.7 733.4L1844.7 735.9L1843.7 737.0L1842.7 738.2L1841.7 738.9L1840.7 738.9L1839.7 737.9L1838.7 738.6L1837.7 739.1L1836.7 739.5L1835.7 740.3L1834.7 741.3L1833.7 741.9L1832.7 741.8L1831.7 743.3L1830.7 743.8L1829.7 744.5L1828.7 745.0L1827.7 745.8L1826.7 746.3L1825.7 747.1L1824.7 745.9L1823.7 747.8L1822.7 746.6L1821.7 748.2L1820.7 749.0L1819.7 747.1L1818.7 747.4L1817.7 745.3L1816.7 744.6L1815.7 744.2L1814.7 742.6L1813.7 740.7L1812.7 739.0L1811.7 737.2L1810.7 734.9z" fill="#a6a6a6"/><path d="M1847.5 734.0L1848.5 731.6L1849.5 730.5L1850.5 730.5L1851.5 730.4L1852.5 730.2L1853.5 730.6L1854.5 730.5L1855.5 730.5L1856.5 730.7L1857.5 731.1L1858.5 731.0L1859.5 731.3L1860.5 731.5L1861.5 732.0L1862.5 732.2L1863.5 732.2L1864.5 732.5L1865.5 732.5L1866.5 732.5L1867.5 732.6L1868.5 732.6L1869.5 732.7L1870.5 732.8L1870.5 734.8L1869.5 734.8L1868.5 734.8L1867.5 734.8L1866.5 734.8L1865.5 734.9L1864.5 734.9L1863.5 734.9L1862.5 734.9L1861.5 735.3L1860.5 736.0L1859.5 736.9L1858.5 737.8L1857.5 739.8L1856.5 741.7L1855.5 742.9L1854.5 742.7L1853.5 744.6L1852.5 744.3L1851.5 742.1L1850.5 741.0L1849.5 739.6L1848.5 737.8L1847.5 734.8z" fill="#a6a6a6"/><path d="M1871.6 733.5L1872.6 731.8L1873.6 730.0L1874.6 729.3L1875.6 729.4L1876.6 728.5L1877.6 729.1L1878.6 728.9L1879.6 728.4L1880.6 728.5L1881.6 728.6L1882.6 728.6L1883.6 729.1L1884.6 728.9L1885.6 728.7L1886.6 729.2L1887.6 729.2L1888.6 730.1L1889.6 731.4L1890.6 732.3L1891.6 733.5L1891.6 735.4L1890.6 736.5L1889.6 738.9L1888.6 740.7L1887.6 741.6L1886.6 742.6L1885.6 742.4L1884.6 743.1L1883.6 744.2L1882.6 743.2L1881.6 743.7L1880.6 743.9L1879.6 743.7L1878.6 743.8L1877.6 742.5L1876.6 742.0L1875.6 741.8L1874.6 740.8L1873.6 739.2L1872.6 737.1L1871.6 734.9z" fill="#a6a6a6"/><path d="M1898.6 733.9L1899.6 732.8L1900.6 731.8L1901.6 731.9L1902.6 732.5L1903.6 732.1L1904.6 731.1L1905.6 731.3L1906.6 732.1L1907.6 731.6L1908.6 730.4L1909.6 730.2L1910.6 731.1L1911.6 731.5L1911.6 737.6L1910.6 737.5L1909.6 737.2L1908.6 737.6L1907.6 738.4L1906.6 738.9L1905.6 737.6L1904.6 737.3L1903.6 737.9L1902.6 738.1L1901.6 737.1L1900.6 736.3L1899.6 735.5L1898.6 734.8z" fill="#a6a6a6"/><path d="M1911.9 731.4L1912.9 731.1L1913.9 730.5L1914.9 729.3L1915.9 728.9L1916.9 728.3L1917.9 728.2L1918.9 728.3L1919.9 727.8L1920.9 727.9L1921.9 728.3L1922.9 727.7L1923.9 728.3L1924.9 728.0L1925.9 727.5L1926.9 727.8L1927.9 728.2L1928.9 727.3L1929.9 727.4L1930.9 727.9L1931.9 727.7L1932.9 728.2L1933.9 727.5L1934.9 727.5L1935.9 728.1L1936.9 727.7L1937.9 728.0L1938.9 728.5L1939.9 727.7L1940.9 728.0L1941.9 728.1L1942.9 728.1L1943.9 727.4L1944.9 727.6L1945.9 727.9L1946.9 727.9L1947.9 727.7L1948.9 728.1L1949.9 728.0L1950.9 727.9L1951.9 728.0L1952.9 728.7L1953.9 728.8L1954.9 729.3L1955.9 729.4L1956.9 729.9L1957.9 730.1L1958.9 730.5L1959.9 730.8L1960.9 731.5L1961.9 731.5L1962.9 731.9L1963.9 732.3L1964.9 732.7L1965.9 733.1L1966.9 733.3L1967.9 733.7L1968.9 734.1L1968.9 734.7L1967.9 735.0L1966.9 735.3L1965.9 735.7L1964.9 735.9L1963.9 736.3L1962.9 736.8L1961.9 737.0L1960.9 737.2L1959.9 737.6L1958.9 738.0L1957.9 738.1L1956.9 738.4L1955.9 739.2L1954.9 739.5L1953.9 740.1L1952.9 740.5L1951.9 740.2L1950.9 740.7L1949.9 741.1L1948.9 741.8L1947.9 741.4L1946.9 741.8L1945.9 742.0L1944.9 743.0L1943.9 742.1L1942.9 742.4L1941.9 743.2L1940.9 743.2L1939.9 744.0L1938.9 744.1L1937.9 742.9L1936.9 744.2L1935.9 743.6L1934.9 744.3L1933.9 744.8L1932.9 743.5L1931.9 744.9L1930.9 744.0L1929.9 744.2L1928.9 745.3L1927.9 745.3L1926.9 744.1L1925.9 745.4L1924.9 744.6L1923.9 744.3L1922.9 745.2L1921.9 744.9L1920.9 744.9L1919.9 744.3L1918.9 744.2L1917.9 743.1L1916.9 742.5L1915.9 741.9L1914.9 741.2L1913.9 739.5L1912.9 738.5L1911.9 737.8z" fill="#a6a6a6"/><path d="M2042.0 734.1L2043.0 733.2L2044.0 733.1L2045.0 733.8L2045.0 734.7L2044.0 734.9L2043.0 734.9L2042.0 734.7z" fill="#a6a6a6"/><path d="M2212.6 734.1L2213.6 732.5L2214.6 732.0L2215.6 732.3L2216.6 732.4L2217.6 732.5L2218.6 732.5L2219.6 732.6L2220.6 732.8L2221.6 733.0L2222.6 733.2L2223.6 733.3L2224.6 733.4L2225.6 733.6L2226.6 733.8L2227.6 733.9L2228.6 734.0L2228.6 734.8L2227.6 735.0L2226.6 735.2L2225.6 735.3L2224.6 735.4L2223.6 735.5L2222.6 735.7L2221.6 735.8L2220.6 735.9L2219.6 735.8L2218.6 735.8L2217.6 736.0L2216.6 735.9L2215.6 736.1L2214.6 736.0L2213.6 735.6L2212.6 734.7z" fill="#a6a6a6"/><path d="M2248.2 734.0L2249.2 729.2L2250.2 727.1L2251.2 727.6L2252.2 729.2L2253.2 728.8L2254.2 729.2L2255.2 729.1L2256.2 729.6L2257.2 729.8L2258.2 729.6L2259.2 729.6L2260.2 728.8L2261.2 727.7L2262.2 727.1L2263.2 727.5L2264.2 727.3L2265.2 726.8L2266.2 726.8L2267.2 726.8L2268.2 725.8L2269.2 725.7L2270.2 726.0L2271.2 727.1L2272.2 726.8L2273.2 727.5L2274.2 728.3L2275.2 728.3L2276.2 729.2L2277.2 729.6L2278.2 729.6L2279.2 730.3L2280.2 731.0L2281.2 731.7L2282.2 732.4L2283.2 733.0L2283.2 735.0L2282.2 735.3L2281.2 735.8L2280.2 737.1L2279.2 738.4L2278.2 739.1L2277.2 740.4L2276.2 740.8L2275.2 741.5L2274.2 742.1L2273.2 743.0L2272.2 742.6L2271.2 743.3L2270.2 743.1L2269.2 743.0L2268.2 743.3L2267.2 743.4L2266.2 743.2L2265.2 742.9L2264.2 743.0L2263.2 742.1L2262.2 742.0L2261.2 741.0L2260.2 741.1L2259.2 739.9L2258.2 740.3L2257.2 740.6L2256.2 741.5L2255.2 742.8L2254.2 743.3L2253.2 744.4L2252.2 744.8L2251.2 745.3L2250.2 746.7L2249.2 743.0L2248.2 734.8z" fill="#a6a6a6"/><path d="M2288.0 733.8L2289.0 732.6L2290.0 731.1L2291.0 729.9L2292.0 728.5L2293.0 727.6L2294.0 727.6L2295.0 728.1L2296.0 728.5L2297.0 729.3L2298.0 729.3L2299.0 729.5L2300.0 730.1L2301.0 730.0L2302.0 730.2L2303.0 730.2L2304.0 729.8L2305.0 730.0L2306.0 730.2L2307.0 730.3L2308.0 730.2L2309.0 730.5L2310.0 730.5L2311.0 730.3L2312.0 730.3L2313.0 730.2L2314.0 730.5L2315.0 730.0L2316.0 730.2L2317.0 730.4L2318.0 730.5L2319.0 730.4L2320.0 730.4L2321.0 730.8L2322.0 730.5L2323.0 731.1L2324.0 731.3L2325.0 732.2L2326.0 732.9L2326.0 735.3L2325.0 736.2L2324.0 736.9L2323.0 736.9L2322.0 737.2L2321.0 737.3L2320.0 737.6L2319.0 737.7L2318.0 737.7L2317.0 738.0L2316.0 738.1L2315.0 737.9L2314.0 738.2L2313.0 738.0L2312.0 738.2L2311.0 738.4L2310.0 738.3L2309.0 738.4L2308.0 738.4L2307.0 738.7L2306.0 739.3L2305.0 739.1L2304.0 739.6L2303.0 740.6L2302.0 740.5L2301.0 741.4L2300.0 741.1L2299.0 740.6L2298.0 740.5L2297.0 740.4L2296.0 740.6L2295.0 741.0L2294.0 741.3L2293.0 740.6L2292.0 739.7L2291.0 738.8L2290.0 737.6L2289.0 736.2L2288.0 734.9z" fill="#a6a6a6"/><path d="M2333.5 734.1L2334.5 732.8L2335.5 731.7L2336.5 731.8L2337.5 733.0L2338.5 733.3L2339.5 733.6L2340.5 733.8L2340.5 735.3L2339.5 736.0L2338.5 736.8L2337.5 737.4L2336.5 736.3L2335.5 735.5L2334.5 735.0L2333.5 734.7z" fill="#a6a6a6"/><path d="M2342.5 733.8L2343.5 732.8L2344.5 731.8L2345.5 730.5L2346.5 730.1L2347.5 728.9L2348.5 727.5L2349.5 726.6L2350.5 726.2L2351.5 726.3L2352.5 726.8L2353.5 727.0L2354.5 727.6L2355.5 727.8L2356.5 728.1L2357.5 728.4L2358.5 728.2L2359.5 728.4L2360.5 727.9L2361.5 728.2L2362.5 728.8L2363.5 728.5L2364.5 728.5L2365.5 728.4L2366.5 728.8L2367.5 728.6L2368.5 728.6L2369.5 728.4L2370.5 728.9L2371.5 728.5L2372.5 728.7L2373.5 728.9L2374.5 728.7L2375.5 728.8L2376.5 728.5L2377.5 729.0L2378.5 728.5L2379.5 728.6L2380.5 728.9L2381.5 729.3L2382.5 728.9L2383.5 729.2L2384.5 729.1L2385.5 728.7L2386.5 729.4L2387.5 728.9L2388.5 729.3L2389.5 728.9L2390.5 729.3L2391.5 729.0L2392.5 729.5L2393.5 729.3L2394.5 728.8L2395.5 729.0L2396.5 729.4L2397.5 729.3L2398.5 729.1L2399.5 729.2L2400.5 729.5L2401.5 729.2L2402.5 729.2L2403.5 729.2L2404.5 729.1L2405.5 729.7L2406.5 730.5L2407.5 731.4L2407.5 737.1L2406.5 737.8L2405.5 738.5L2404.5 738.8L2403.5 739.2L2402.5 739.0L2401.5 738.9L2400.5 738.8L2399.5 738.8L2398.5 739.0L2397.5 739.0L2396.5 738.9L2395.5 739.0L2394.5 739.2L2393.5 739.1L2392.5 738.9L2391.5 739.5L2390.5 739.5L2389.5 739.0L2388.5 739.3L2387.5 739.3L2386.5 739.7L2385.5 739.5L2384.5 739.2L2383.5 739.9L2382.5 739.6L2381.5 740.1L2380.5 740.3L2379.5 740.4L2378.5 740.1L2377.5 740.4L2376.5 741.6L2375.5 742.2L2374.5 743.6L2373.5 744.0L2372.5 743.6L2371.5 743.7L2370.5 744.8L2369.5 744.7L2368.5 744.1L2367.5 745.0L2366.5 744.8L2365.5 744.3L2364.5 744.4L2363.5 745.7L2362.5 744.8L2361.5 744.8L2360.5 746.4L2359.5 745.6L2358.5 745.2L2357.5 745.5L2356.5 745.8L2355.5 747.4L2354.5 747.8L2353.5 747.5L2352.5 748.0L2351.5 747.7L2350.5 746.0L2349.5 744.1L2348.5 743.4L2347.5 741.9L2346.5 739.8L2345.5 737.9L2344.5 736.9L2343.5 735.9L2342.5 734.9z" fill="#a6a6a6"/><path d="M2408.2 731.5L2409.2 731.3L2410.2 731.3L2411.2 731.1L2412.2 731.0L2413.2 731.4L2414.2 731.8L2415.2 732.0L2416.2 732.1L2417.2 732.0L2418.2 731.6L2419.2 731.5L2420.2 731.3L2421.2 731.0L2422.2 731.2L2423.2 730.9L2424.2 730.9L2425.2 730.5L2426.2 730.2L2427.2 730.6L2428.2 731.4L2429.2 731.7L2430.2 732.1L2431.2 731.8L2432.2 731.7L2433.2 731.5L2434.2 731.6L2435.2 731.4L2436.2 731.1L2437.2 731.5L2438.2 731.6L2439.2 731.6L2440.2 731.6L2441.2 731.9L2442.2 731.5L2443.2 731.7L2444.2 731.2L2445.2 731.2L2445.2 737.6L2444.2 737.4L2443.2 737.6L2442.2 737.9L2441.2 737.7L2440.2 737.6L2439.2 737.3L2438.2 737.2L2437.2 737.0L2436.2 737.0L2435.2 737.0L2434.2 737.0L2433.2 737.0L2432.2 737.4L2431.2 737.2L2430.2 737.5L2429.2 737.4L2428.2 737.1L2427.2 737.1L2426.2 736.6L2425.2 736.8L2424.2 736.8L2423.2 736.7L2422.2 737.0L2421.2 736.9L2420.2 737.1L2419.2 737.3L2418.2 737.4L2417.2 737.7L2416.2 737.6L2415.2 737.5L2414.2 737.1L2413.2 737.0L2412.2 736.7L2411.2 736.7L2410.2 736.8L2409.2 736.8L2408.2 736.9z" fill="#a6a6a6"/><path d="M2445.9 731.2L2446.9 730.6L2447.9 730.5L2448.9 730.2L2449.9 730.8L2450.9 730.6L2451.9 730.6L2452.9 730.7L2453.9 730.9L2454.9 730.7L2455.9 730.4L2456.9 730.7L2457.9 730.7L2458.9 730.9L2459.9 730.6L2460.9 730.6L2461.9 730.3L2462.9 730.4L2463.9 730.5L2464.9 730.2L2465.9 730.5L2466.9 730.3L2467.9 730.4L2468.9 729.9L2469.9 730.4L2470.9 730.2L2471.9 730.0L2472.9 729.6L2473.9 729.7L2474.9 730.3L2475.9 730.2L2476.9 729.9L2477.9 730.1L2478.9 730.4L2479.9 730.4L2480.9 730.1L2481.9 730.3L2482.9 730.2L2483.9 729.8L2484.9 729.7L2485.9 729.7L2486.9 729.4L2487.9 729.9L2488.9 729.7L2489.9 729.2L2490.9 729.1L2491.9 729.7L2492.9 729.3L2493.9 729.3L2494.9 729.2L2495.9 729.4L2496.9 729.1L2497.9 729.7L2498.9 729.5L2499.9 729.9L2500.9 729.9L2501.9 729.6L2502.9 729.6L2503.9 729.5L2504.9 729.5L2505.9 729.2L2506.9 729.8L2507.9 729.2L2508.9 729.6L2509.9 729.1L2510.9 729.8L2511.9 729.7L2512.9 729.8L2513.9 729.7L2514.9 729.8L2515.9 729.6L2516.9 729.7L2517.9 729.7L2518.9 729.9L2519.9 729.9L2520.9 730.2L2521.9 730.1L2522.9 730.3L2523.9 730.7L2524.9 730.8L2525.9 730.9L2526.9 731.0L2527.9 731.3L2528.9 731.4L2529.9 731.9L2530.9 731.9L2531.9 732.3L2532.9 732.5L2533.9 732.8L2534.9 733.1L2535.9 733.4L2536.9 733.7L2537.9 734.0L2537.9 734.8L2536.9 735.1L2535.9 735.4L2534.9 735.7L2533.9 736.1L2532.9 736.2L2531.9 736.7L2530.9 736.9L2529.9 737.2L2528.9 737.5L2527.9 737.8L2526.9 737.9L2525.9 738.2L2524.9 738.5L2523.9 739.3L2522.9 739.0L2521.9 739.2L2520.9 739.7L2519.9 739.8L2518.9 740.2L2517.9 740.0L2516.9 740.0L2515.9 740.3L2514.9 740.7L2513.9 740.3L2512.9 741.0L2511.9 740.8L2510.9 741.3L2509.9 740.8L2508.9 741.3L2507.9 741.7L2506.9 741.7L2505.9 741.1L2504.9 741.0L2503.9 741.7L2502.9 741.3L2501.9 741.5L2500.9 741.6L2499.9 741.3L2498.9 741.7L2497.9 741.8L2496.9 741.8L2495.9 741.4L2494.9 742.1L2493.9 742.4L2492.9 742.4L2491.9 742.1L2490.9 742.1L2489.9 742.3L2488.9 742.6L2487.9 742.6L2486.9 741.8L2485.9 742.7L2484.9 741.9L2483.9 742.1L2482.9 742.0L2481.9 741.3L2480.9 741.1L2479.9 741.4L2478.9 741.2L2477.9 740.7L2476.9 740.9L2475.9 741.1L2474.9 741.6L2473.9 742.1L2472.9 742.7L2471.9 742.2L2470.9 742.3L2469.9 742.2L2468.9 742.1L2467.9 741.4L2466.9 741.2L2465.9 741.2L2464.9 740.7L2463.9 741.4L2462.9 740.7L2461.9 740.4L2460.9 740.6L2459.9 739.6L2458.9 740.2L2457.9 739.8L2456.9 740.0L2455.9 740.1L2454.9 739.5L2453.9 739.5L2452.9 740.1L2451.9 739.5L2450.9 739.9L2449.9 739.3L2448.9 739.9L2447.9 739.8L2446.9 738.9L2445.9 737.6z" fill="#a6a6a6"/><rect x="415.20" y="761.60" width="2206.00" height="67.60" rx="4.7" fill="#4a4a4a" stroke="#0c0c0c" stroke-width="1.300"/><path d="M476.24 762.7V828.1M537.38 762.7V828.1M598.52 762.7V828.1M659.66 762.7V828.1M720.80 762.7V828.1M781.94 762.7V828.1M843.08 762.7V828.1M904.22 762.7V828.1M965.36 762.7V828.1M1026.50 762.7V828.1M1087.64 762.7V828.1M1148.78 762.7V828.1M1209.92 762.7V828.1M1271.06 762.7V828.1M1332.20 762.7V828.1M1393.34 762.7V828.1M1454.48 762.7V828.1M1515.62 762.7V828.1M1576.76 762.7V828.1M1637.90 762.7V828.1M1699.04 762.7V828.1M1760.18 762.7V828.1M1821.32 762.7V828.1M1882.46 762.7V828.1M1943.60 762.7V828.1M2004.74 762.7V828.1M2065.88 762.7V828.1M2127.02 762.7V828.1M2188.16 762.7V828.1M2249.30 762.7V828.1M2310.44 762.7V828.1M2371.58 762.7V828.1M2432.72 762.7V828.1M2493.86 762.7V828.1M2555.00 762.7V828.1" stroke="#505050" stroke-width="1" fill="none"/><rect x="415.20" y="831.50" width="2206.00" height="77.80" rx="4.7" fill="#4a4a4a" stroke="#0c0c0c" stroke-width="1.300"/><path d="M476.24 832.6V908.2M537.38 832.6V908.2M598.52 832.6V908.2M659.66 832.6V908.2M720.80 832.6V908.2M781.94 832.6V908.2M843.08 832.6V908.2M904.22 832.6V908.2M965.36 832.6V908.2M1026.50 832.6V908.2M1087.64 832.6V908.2M1148.78 832.6V908.2M1209.92 832.6V908.2M1271.06 832.6V908.2M1332.20 832.6V908.2M1393.34 832.6V908.2M1454.48 832.6V908.2M1515.62 832.6V908.2M1576.76 832.6V908.2M1637.90 832.6V908.2M1699.04 832.6V908.2M1760.18 832.6V908.2M1821.32 832.6V908.2M1882.46 832.6V908.2M1943.60 832.6V908.2M2004.74 832.6V908.2M2065.88 832.6V908.2M2127.02 832.6V908.2M2188.16 832.6V908.2M2249.30 832.6V908.2M2310.44 832.6V908.2M2371.58 832.6V908.2M2432.72 832.6V908.2M2493.86 832.6V908.2M2555.00 832.6V908.2" stroke="#505050" stroke-width="1" fill="none"/><path d="M415.8 879.6H2612.6" stroke="#a9a9a9" stroke-width="0.900"/><rect x="415.20" y="911.60" width="2206.00" height="77.80" rx="4.7" fill="#396fb1" stroke="#0c0c0c" stroke-width="1.300"/><path d="M415.8 959.2H2612.6" stroke="#d4e6ff" stroke-width="0.950"/><rect x="415.20" y="991.70" width="2206.00" height="72.50" rx="4.7" fill="#396fb1" stroke="#0c0c0c" stroke-width="1.300"/><path d="M415.8 1036.5H2612.6" stroke="#d4e6ff" stroke-width="0.950"/><path d="M1271.0 1036.1L1271.9 1036.1L1272.8 1035.7L1273.7 1035.9L1274.6 1035.8L1275.5 1035.7L1276.4 1035.4L1277.3 1035.5L1278.2 1035.8L1279.1 1036.0L1280.0 1035.8L1280.9 1036.1L1281.8 1035.9L1282.7 1036.1L1283.6 1036.1L1284.5 1036.1L1285.4 1036.1L1286.3 1036.1L1286.3 1036.9L1285.4 1036.9L1284.5 1036.9L1283.6 1036.9L1282.7 1037.0L1281.8 1037.1L1280.9 1037.1L1280.0 1037.4L1279.1 1037.3L1278.2 1037.7L1277.3 1037.3L1276.4 1037.6L1275.5 1037.5L1274.6 1037.5L1273.7 1037.7L1272.8 1037.1L1271.9 1036.9L1271.0 1036.9z" fill="#d4e6ff"/><path d="M1333.5 1036.1L1334.4 1036.1L1335.3 1035.9L1336.2 1035.8L1337.1 1035.5L1338.0 1035.1L1338.9 1035.3L1339.8 1035.5L1340.7 1035.2L1341.6 1035.8L1342.5 1035.7L1343.4 1035.9L1344.3 1035.9L1345.2 1035.9L1346.1 1036.1L1347.0 1036.1L1347.9 1036.1L1348.8 1036.1L1348.8 1036.9L1347.9 1037.0L1347.0 1037.0L1346.1 1037.3L1345.2 1037.2L1344.3 1037.4L1343.4 1037.4L1342.5 1037.8L1341.6 1037.4L1340.7 1038.0L1339.8 1038.0L1338.9 1038.0L1338.0 1037.9L1337.1 1037.7L1336.2 1037.8L1335.3 1037.5L1334.4 1036.9L1333.5 1036.9z" fill="#d4e6ff"/><path d="M1393.7 1036.1L1394.6 1036.1L1395.5 1035.6L1396.4 1035.1L1397.3 1035.5L1398.2 1035.3L1399.1 1035.2L1400.0 1035.0L1400.9 1034.6L1401.8 1035.4L1402.7 1035.3L1403.6 1035.6L1404.5 1035.4L1405.4 1035.6L1406.3 1035.7L1407.2 1035.5L1408.1 1035.7L1409.0 1035.7L1409.9 1036.1L1410.8 1036.1L1411.7 1036.1L1411.7 1036.9L1410.8 1036.9L1409.9 1037.1L1409.0 1037.3L1408.1 1037.2L1407.2 1037.4L1406.3 1037.9L1405.4 1037.7L1404.5 1037.7L1403.6 1038.6L1402.7 1038.2L1401.8 1038.0L1400.9 1039.0L1400.0 1038.3L1399.1 1039.1L1398.2 1039.0L1397.3 1037.7L1396.4 1037.5L1395.5 1037.6L1394.6 1037.3L1393.7 1036.9z" fill="#d4e6ff"/><path d="M1485.0 1036.1L1485.9 1035.8L1486.8 1035.4L1487.7 1035.2L1488.6 1034.8L1489.5 1034.9L1490.4 1034.8L1491.3 1035.5L1492.2 1035.3L1493.1 1035.7L1494.0 1035.4L1494.9 1035.5L1495.8 1035.7L1496.7 1036.0L1497.6 1036.1L1497.6 1036.9L1496.7 1036.9L1495.8 1037.4L1494.9 1037.3L1494.0 1037.4L1493.1 1038.0L1492.2 1038.2L1491.3 1038.0L1490.4 1037.8L1489.5 1038.8L1488.6 1038.1L1487.7 1038.4L1486.8 1037.4L1485.9 1037.3L1485.0 1036.9z" fill="#d4e6ff"/><path d="M1543.0 1036.1L1543.9 1036.1L1544.8 1035.4L1545.7 1035.1L1546.6 1035.3L1547.5 1034.8L1548.4 1034.9L1549.3 1035.2L1550.2 1034.9L1551.1 1035.2L1552.0 1035.6L1552.9 1035.5L1553.8 1035.5L1554.7 1035.6L1555.6 1035.9L1556.5 1036.1L1557.4 1036.1L1557.4 1036.9L1556.5 1036.9L1555.6 1037.1L1554.7 1037.1L1553.8 1037.6L1552.9 1037.6L1552.0 1037.6L1551.1 1037.5L1550.2 1037.8L1549.3 1038.1L1548.4 1037.8L1547.5 1038.0L1546.6 1038.4L1545.7 1038.3L1544.8 1037.7L1543.9 1037.1L1543.0 1036.9z" fill="#d4e6ff"/><path d="M1606.0 1036.1L1606.9 1036.1L1607.8 1036.1L1608.7 1036.0L1609.6 1035.9L1610.5 1035.5L1611.4 1035.7L1612.3 1035.6L1613.2 1035.1L1614.1 1035.3L1615.0 1035.7L1615.9 1035.6L1616.8 1035.7L1617.7 1035.4L1618.6 1035.4L1619.5 1035.6L1620.4 1035.8L1621.3 1036.0L1622.2 1036.0L1623.1 1036.0L1624.0 1035.8L1624.9 1036.0L1625.8 1035.9L1626.7 1035.9L1627.6 1036.0L1628.5 1036.0L1629.4 1036.1L1630.3 1036.1L1631.2 1036.1L1631.2 1036.9L1630.3 1036.9L1629.4 1037.0L1628.5 1036.9L1627.6 1037.1L1626.7 1037.0L1625.8 1037.2L1624.9 1037.4L1624.0 1037.5L1623.1 1037.4L1622.2 1037.2L1621.3 1037.3L1620.4 1037.8L1619.5 1037.4L1618.6 1037.8L1617.7 1037.6L1616.8 1037.4L1615.9 1038.0L1615.0 1038.2L1614.1 1038.2L1613.2 1038.1L1612.3 1038.0L1611.4 1037.3L1610.5 1037.2L1609.6 1037.4L1608.7 1037.0L1607.8 1036.9L1606.9 1037.0L1606.0 1036.9z" fill="#d4e6ff"/><path d="M1632.0 1036.1L1632.9 1035.7L1633.8 1035.3L1634.7 1035.2L1635.6 1034.6L1636.5 1034.0L1637.4 1034.0L1638.3 1034.1L1639.2 1034.9L1640.1 1034.5L1641.0 1034.6L1641.9 1035.2L1642.8 1035.0L1643.7 1035.0L1644.6 1035.5L1645.5 1035.6L1646.4 1035.4L1647.3 1035.5L1648.2 1035.7L1649.1 1036.1L1650.0 1036.1L1650.0 1036.9L1649.1 1037.0L1648.2 1037.0L1647.3 1037.5L1646.4 1037.7L1645.5 1037.6L1644.6 1038.0L1643.7 1037.7L1642.8 1038.4L1641.9 1038.3L1641.0 1038.3L1640.1 1038.7L1639.2 1038.4L1638.3 1039.8L1637.4 1039.0L1636.5 1038.5L1635.6 1038.7L1634.7 1038.5L1633.8 1037.9L1632.9 1037.4L1632.0 1036.9z" fill="#d4e6ff"/><path d="M1753.0 1036.1L1753.9 1036.0L1754.8 1035.8L1755.7 1035.6L1756.6 1035.6L1757.5 1035.0L1758.4 1035.4L1759.3 1035.1L1760.2 1034.9L1761.1 1034.7L1762.0 1035.0L1762.9 1035.1L1763.8 1035.4L1764.7 1035.3L1765.6 1035.7L1766.5 1035.5L1767.4 1035.9L1768.3 1035.8L1769.2 1036.1L1770.1 1036.1L1771.0 1036.1L1771.0 1036.9L1770.1 1036.9L1769.2 1037.0L1768.3 1037.2L1767.4 1037.6L1766.5 1037.7L1765.6 1037.4L1764.7 1037.4L1763.8 1037.7L1762.9 1037.5L1762.0 1038.5L1761.1 1038.0L1760.2 1038.9L1759.3 1037.9L1758.4 1037.9L1757.5 1037.9L1756.6 1038.2L1755.7 1037.8L1754.8 1037.5L1753.9 1037.2L1753.0 1036.9z" fill="#d4e6ff"/><path d="M1817.0 1036.1L1817.9 1035.9L1818.8 1035.7L1819.7 1035.1L1820.6 1035.5L1821.5 1035.0L1822.4 1034.8L1823.3 1034.8L1824.2 1035.1L1825.1 1035.5L1826.0 1035.8L1826.9 1035.6L1827.8 1035.7L1828.7 1036.0L1829.6 1036.1L1830.5 1036.1L1830.5 1036.9L1829.6 1037.1L1828.7 1037.0L1827.8 1037.5L1826.9 1037.5L1826.0 1037.7L1825.1 1037.5L1824.2 1037.9L1823.3 1037.7L1822.4 1038.7L1821.5 1038.4L1820.6 1038.6L1819.7 1037.8L1818.8 1037.8L1817.9 1037.3L1817.0 1036.9z" fill="#d4e6ff"/><path d="M1877.0 1036.1L1877.9 1036.0L1878.8 1035.3L1879.7 1035.6L1880.6 1035.4L1881.5 1034.3L1882.4 1034.6L1883.3 1034.5L1884.2 1034.8L1885.1 1034.8L1886.0 1034.7L1886.9 1035.0L1887.8 1035.5L1888.7 1035.6L1889.6 1035.3L1890.5 1035.5L1891.4 1035.7L1892.3 1035.9L1893.2 1036.1L1893.2 1036.9L1892.3 1037.0L1891.4 1037.2L1890.5 1037.8L1889.6 1037.5L1888.7 1037.9L1887.8 1037.8L1886.9 1038.1L1886.0 1038.6L1885.1 1037.9L1884.2 1039.2L1883.3 1039.1L1882.4 1038.3L1881.5 1038.8L1880.6 1038.1L1879.7 1038.1L1878.8 1037.4L1877.9 1037.0L1877.0 1036.9z" fill="#d4e6ff"/><path d="M1968.0 1036.1L1968.9 1036.0L1969.8 1036.0L1970.7 1035.8L1971.6 1035.3L1972.5 1035.1L1973.4 1035.1L1974.3 1035.3L1975.2 1035.6L1976.1 1035.1L1977.0 1035.2L1977.9 1035.7L1978.8 1035.5L1979.7 1035.5L1980.6 1035.6L1981.5 1035.9L1982.4 1036.0L1983.3 1036.1L1984.2 1036.1L1984.2 1036.9L1983.3 1036.9L1982.4 1037.2L1981.5 1037.2L1980.6 1037.1L1979.7 1037.6L1978.8 1037.4L1977.9 1038.0L1977.0 1038.2L1976.1 1038.4L1975.2 1038.1L1974.3 1038.5L1973.4 1037.8L1972.5 1037.9L1971.6 1037.8L1970.7 1037.7L1969.8 1037.3L1968.9 1037.0L1968.0 1036.9z" fill="#d4e6ff"/><path d="M2029.0 1036.1L2029.9 1036.1L2030.8 1035.7L2031.7 1035.3L2032.6 1035.0L2033.5 1035.2L2034.4 1035.1L2035.3 1035.4L2036.2 1035.3L2037.1 1035.4L2038.0 1035.1L2038.9 1035.5L2039.8 1035.1L2040.7 1035.4L2041.6 1035.8L2042.5 1035.7L2043.4 1035.7L2044.3 1035.9L2045.2 1036.1L2046.1 1036.1L2047.0 1036.1L2047.0 1036.9L2046.1 1036.9L2045.2 1037.2L2044.3 1037.2L2043.4 1037.1L2042.5 1037.3L2041.6 1037.7L2040.7 1038.0L2039.8 1038.2L2038.9 1037.8L2038.0 1037.9L2037.1 1037.9L2036.2 1038.0L2035.3 1038.9L2034.4 1039.0L2033.5 1038.9L2032.6 1038.0L2031.7 1037.4L2030.8 1037.3L2029.9 1037.0L2029.0 1036.9z" fill="#d4e6ff"/><path d="M2096.0 1036.1L2096.9 1036.1L2097.8 1035.9L2098.7 1036.1L2099.6 1036.0L2100.5 1035.6L2101.4 1035.8L2102.3 1035.4L2103.2 1035.7L2104.1 1035.0L2105.0 1035.7L2105.9 1035.1L2106.8 1035.7L2107.7 1035.2L2108.6 1035.8L2109.5 1035.4L2110.4 1035.5L2111.3 1035.6L2112.2 1035.5L2113.1 1035.7L2114.0 1035.8L2114.9 1036.0L2115.8 1035.8L2116.7 1035.9L2117.6 1035.8L2118.5 1036.0L2119.4 1036.1L2120.3 1036.1L2121.2 1036.1L2121.2 1036.9L2120.3 1037.0L2119.4 1037.0L2118.5 1037.1L2117.6 1037.1L2116.7 1037.0L2115.8 1037.0L2114.9 1037.1L2114.0 1037.3L2113.1 1037.6L2112.2 1037.6L2111.3 1037.2L2110.4 1037.6L2109.5 1037.3L2108.6 1037.9L2107.7 1037.8L2106.8 1038.0L2105.9 1037.9L2105.0 1037.9L2104.1 1038.1L2103.2 1037.5L2102.3 1037.4L2101.4 1037.4L2100.5 1037.4L2099.6 1037.4L2098.7 1037.4L2097.8 1037.2L2096.9 1037.0L2096.0 1036.9z" fill="#d4e6ff"/><path d="M2122.0 1036.1L2122.9 1036.0L2123.8 1035.9L2124.7 1035.6L2125.6 1035.4L2126.5 1034.6L2127.4 1035.1L2128.3 1034.8L2129.2 1035.2L2130.1 1035.1L2131.0 1035.3L2131.9 1034.5L2132.8 1035.2L2133.7 1034.9L2134.6 1035.1L2135.5 1035.5L2136.4 1035.2L2137.3 1035.1L2138.2 1035.4L2139.1 1035.6L2140.0 1035.8L2140.9 1035.8L2141.8 1035.9L2142.7 1036.0L2143.6 1036.1L2143.6 1036.9L2142.7 1036.9L2141.8 1037.0L2140.9 1037.1L2140.0 1037.3L2139.1 1037.4L2138.2 1037.9L2137.3 1037.4L2136.4 1038.1L2135.5 1037.8L2134.6 1038.3L2133.7 1037.9L2132.8 1037.9L2131.9 1038.6L2131.0 1038.5L2130.1 1038.7L2129.2 1039.1L2128.3 1038.2L2127.4 1039.1L2126.5 1038.8L2125.6 1037.6L2124.7 1037.7L2123.8 1037.2L2122.9 1037.1L2122.0 1036.9z" fill="#d4e6ff"/><path d="M2246.0 1036.1L2246.9 1035.8L2247.8 1035.4L2248.7 1035.3L2249.6 1034.9L2250.5 1034.6L2251.4 1035.2L2252.3 1034.8L2253.2 1034.8L2254.1 1034.2L2255.0 1035.3L2255.9 1034.9L2256.8 1035.1L2257.7 1035.5L2258.6 1035.2L2259.5 1035.7L2260.4 1035.7L2261.3 1035.6L2262.2 1035.8L2263.1 1035.8L2264.0 1035.9L2264.9 1036.1L2265.8 1036.1L2265.8 1036.9L2264.9 1037.0L2264.0 1037.3L2263.1 1037.4L2262.2 1037.6L2261.3 1037.8L2260.4 1037.4L2259.5 1037.8L2258.6 1038.4L2257.7 1038.3L2256.8 1038.8L2255.9 1038.4L2255.0 1038.3L2254.1 1039.0L2253.2 1038.0L2252.3 1039.3L2251.4 1038.5L2250.5 1038.7L2249.6 1038.7L2248.7 1037.5L2247.8 1037.2L2246.9 1037.0L2246.0 1036.9z" fill="#d4e6ff"/><path d="M2308.0 1036.1L2308.9 1035.9L2309.8 1035.4L2310.7 1035.1L2311.6 1035.4L2312.5 1035.1L2313.4 1034.8L2314.3 1035.5L2315.2 1034.7L2316.1 1035.6L2317.0 1035.2L2317.9 1035.5L2318.8 1035.6L2319.7 1035.8L2320.6 1035.9L2321.5 1036.0L2322.4 1035.9L2323.3 1036.1L2323.3 1036.9L2322.4 1037.2L2321.5 1037.0L2320.6 1037.5L2319.7 1037.3L2318.8 1037.5L2317.9 1037.8L2317.0 1037.9L2316.1 1038.0L2315.2 1038.6L2314.3 1038.7L2313.4 1038.9L2312.5 1038.1L2311.6 1038.5L2310.7 1037.5L2309.8 1037.8L2308.9 1037.2L2308.0 1036.9z" fill="#d4e6ff"/><path d="M2367.0 1036.1L2367.9 1035.9L2368.8 1035.6L2369.7 1035.4L2370.6 1035.4L2371.5 1035.6L2372.4 1035.1L2373.3 1035.4L2374.2 1034.5L2375.1 1034.6L2376.0 1035.4L2376.9 1034.7L2377.8 1035.4L2378.7 1035.0L2379.6 1035.6L2380.5 1035.4L2381.4 1035.4L2382.3 1035.4L2383.2 1035.5L2384.1 1035.3L2385.0 1035.8L2385.9 1035.8L2386.8 1035.9L2387.7 1035.9L2388.6 1036.1L2389.5 1036.1L2389.5 1036.9L2388.6 1037.1L2387.7 1036.9L2386.8 1037.2L2385.9 1037.5L2385.0 1037.5L2384.1 1037.5L2383.2 1037.3L2382.3 1037.8L2381.4 1038.3L2380.5 1037.8L2379.6 1038.5L2378.7 1037.8L2377.8 1038.9L2376.9 1038.7L2376.0 1038.8L2375.1 1039.0L2374.2 1039.3L2373.3 1038.0L2372.4 1038.7L2371.5 1038.4L2370.6 1037.9L2369.7 1038.0L2368.8 1037.3L2367.9 1037.2L2367.0 1036.9z" fill="#d4e6ff"/><path d="M2462.0 1036.1L2462.9 1036.0L2463.8 1035.8L2464.7 1035.8L2465.6 1035.6L2466.5 1035.5L2467.4 1035.5L2468.3 1035.4L2469.2 1035.3L2470.1 1035.7L2471.0 1035.8L2471.9 1035.8L2472.8 1035.8L2473.7 1035.8L2474.6 1036.0L2475.5 1036.1L2476.4 1035.9L2477.3 1036.1L2478.2 1036.1L2479.1 1036.1L2480.0 1036.1L2480.0 1036.9L2479.1 1036.9L2478.2 1036.9L2477.3 1036.9L2476.4 1036.9L2475.5 1037.0L2474.6 1037.5L2473.7 1037.2L2472.8 1037.8L2471.9 1037.9L2471.0 1037.9L2470.1 1037.9L2469.2 1037.6L2468.3 1037.7L2467.4 1038.4L2466.5 1037.4L2465.6 1037.9L2464.7 1037.7L2463.8 1037.4L2462.9 1036.9L2462.0 1036.9z" fill="#d4e6ff"/><path d="M2520.0 1036.1L2520.9 1036.0L2521.8 1035.7L2522.7 1035.7L2523.6 1035.1L2524.5 1035.4L2525.4 1034.9L2526.3 1035.3L2527.2 1035.0L2528.1 1035.5L2529.0 1035.6L2529.9 1035.7L2530.8 1035.8L2531.7 1035.9L2532.6 1035.8L2533.5 1036.0L2534.4 1036.0L2535.3 1036.0L2536.2 1036.1L2536.2 1036.9L2535.3 1036.9L2534.4 1037.0L2533.5 1037.3L2532.6 1037.1L2531.7 1037.4L2530.8 1037.7L2529.9 1037.8L2529.0 1037.9L2528.1 1038.4L2527.2 1038.5L2526.3 1038.1L2525.4 1038.1L2524.5 1038.0L2523.6 1037.8L2522.7 1038.0L2521.8 1037.2L2520.9 1037.0L2520.0 1036.9z" fill="#d4e6ff"/><path d="M2588.0 1036.1L2588.9 1036.1L2589.8 1036.1L2590.7 1035.9L2591.6 1036.0L2592.5 1035.6L2593.4 1035.7L2594.3 1035.6L2595.2 1035.4L2596.1 1035.0L2597.0 1035.5L2597.9 1035.1L2598.8 1035.6L2599.7 1035.2L2600.6 1035.6L2601.5 1035.4L2602.4 1035.6L2603.3 1035.5L2604.2 1035.7L2605.1 1035.8L2606.0 1035.9L2606.9 1036.0L2607.8 1035.8L2608.7 1035.8L2609.6 1036.0L2610.5 1036.0L2611.4 1036.1L2612.3 1036.1L2612.3 1036.9L2611.4 1036.9L2610.5 1036.9L2609.6 1037.0L2608.7 1037.2L2607.8 1037.2L2606.9 1037.0L2606.0 1037.3L2605.1 1037.3L2604.2 1037.4L2603.3 1037.3L2602.4 1037.9L2601.5 1037.4L2600.6 1038.1L2599.7 1037.7L2598.8 1037.9L2597.9 1037.7L2597.0 1037.6L2596.1 1038.1L2595.2 1038.5L2594.3 1038.1L2593.4 1038.0L2592.5 1037.8L2591.6 1037.5L2590.7 1037.3L2589.8 1037.1L2588.9 1036.9L2588.0 1036.9z" fill="#d4e6ff"/><rect x="415.20" y="1066.50" width="2206.00" height="51.00" rx="4.7" fill="#4a4a4a" stroke="#0c0c0c" stroke-width="1.300"/><path d="M476.24 1067.6V1116.4M537.38 1067.6V1116.4M598.52 1067.6V1116.4M659.66 1067.6V1116.4M720.80 1067.6V1116.4M781.94 1067.6V1116.4M843.08 1067.6V1116.4M904.22 1067.6V1116.4M965.36 1067.6V1116.4M1026.50 1067.6V1116.4M1087.64 1067.6V1116.4M1148.78 1067.6V1116.4M1209.92 1067.6V1116.4M1271.06 1067.6V1116.4M1332.20 1067.6V1116.4M1393.34 1067.6V1116.4M1454.48 1067.6V1116.4M1515.62 1067.6V1116.4M1576.76 1067.6V1116.4M1637.90 1067.6V1116.4M1699.04 1067.6V1116.4M1760.18 1067.6V1116.4M1821.32 1067.6V1116.4M1882.46 1067.6V1116.4M1943.60 1067.6V1116.4M2004.74 1067.6V1116.4M2065.88 1067.6V1116.4M2127.02 1067.6V1116.4M2188.16 1067.6V1116.4M2249.30 1067.6V1116.4M2310.44 1067.6V1116.4M2371.58 1067.6V1116.4M2432.72 1067.6V1116.4M2493.86 1067.6V1116.4M2555.00 1067.6V1116.4" stroke="#505050" stroke-width="1" fill="none"/><rect x="904.22" y="1119.10" width="978.14" height="44.20" rx="4.7" fill="#4a4a4a" stroke="#0c0c0c" stroke-width="1.300"/><rect x="1882.46" y="1119.10" width="738.74" height="44.20" rx="4.7" fill="#4a4a4a" stroke="#0c0c0c" stroke-width="1.300"/><path d="M965.36 1120.2V1162.2M1026.50 1120.2V1162.2M1087.64 1120.2V1162.2M1148.78 1120.2V1162.2M1209.92 1120.2V1162.2M1271.06 1120.2V1162.2M1332.20 1120.2V1162.2M1393.34 1120.2V1162.2M1454.48 1120.2V1162.2M1515.62 1120.2V1162.2M1576.76 1120.2V1162.2M1637.90 1120.2V1162.2M1699.04 1120.2V1162.2M1760.18 1120.2V1162.2M1821.32 1120.2V1162.2M1943.60 1120.2V1162.2M2004.74 1120.2V1162.2M2065.88 1120.2V1162.2M2127.02 1120.2V1162.2M2188.16 1120.2V1162.2M2249.30 1120.2V1162.2M2310.44 1120.2V1162.2M2371.58 1120.2V1162.2M2432.72 1120.2V1162.2M2493.86 1120.2V1162.2M2555.00 1120.2V1162.2" stroke="#505050" stroke-width="1" fill="none"/><path d="M905.2 1152.2H2612.6" stroke="#8a8a8a" stroke-width="0.600"/><path d="M905.7 1148.9L950.2 1152.0L950.2 1152.4L905.7 1155.5zM921.0 1150.4L927.0 1152.0L927.0 1152.4L921.0 1154.0zM936.3 1150.3L942.3 1152.0L942.3 1152.4L936.3 1154.1zM951.6 1150.2L957.6 1152.0L957.6 1152.4L951.6 1154.2zM966.9 1150.4L972.9 1152.0L972.9 1152.4L966.9 1154.0zM982.1 1150.3L988.1 1152.0L988.1 1152.4L982.1 1154.1zM997.4 1150.3L1003.4 1152.0L1003.4 1152.4L997.4 1154.1zM1012.7 1150.4L1018.7 1152.0L1018.7 1152.4L1012.7 1154.0zM1028.0 1148.9L1041.0 1152.0L1041.0 1152.4L1028.0 1155.5zM1043.3 1150.3L1049.3 1152.0L1049.3 1152.4L1043.3 1154.1zM1058.6 1150.3L1064.6 1152.0L1064.6 1152.4L1058.6 1154.1zM1073.9 1150.3L1079.9 1152.0L1079.9 1152.4L1073.9 1154.1zM1089.1 1150.5L1095.1 1152.0L1095.1 1152.4L1089.1 1153.9zM1104.4 1149.6L1112.9 1152.0L1112.9 1152.4L1104.4 1154.8zM1119.7 1150.4L1125.7 1152.0L1125.7 1152.4L1119.7 1154.0zM1135.0 1150.5L1141.0 1152.0L1141.0 1152.4L1135.0 1153.9zM1150.3 1148.9L1163.3 1152.0L1163.3 1152.4L1150.3 1155.5zM1165.6 1150.3L1171.6 1152.0L1171.6 1152.4L1165.6 1154.1zM1180.9 1150.3L1186.9 1152.0L1186.9 1152.4L1180.9 1154.1zM1196.1 1150.5L1202.1 1152.0L1202.1 1152.4L1196.1 1153.9zM1211.4 1150.2L1217.4 1152.0L1217.4 1152.4L1211.4 1154.2zM1226.7 1150.2L1232.7 1152.0L1232.7 1152.4L1226.7 1154.2zM1242.0 1150.3L1248.0 1152.0L1248.0 1152.4L1242.0 1154.1zM1257.3 1150.3L1263.3 1152.0L1263.3 1152.4L1257.3 1154.1zM1272.6 1148.9L1285.6 1152.0L1285.6 1152.4L1272.6 1155.5zM1287.8 1150.5L1293.8 1152.0L1293.8 1152.4L1287.8 1153.9zM1303.1 1150.5L1309.1 1152.0L1309.1 1152.4L1303.1 1153.9zM1318.4 1150.3L1324.4 1152.0L1324.4 1152.4L1318.4 1154.1zM1333.7 1150.5L1339.7 1152.0L1339.7 1152.4L1333.7 1153.9zM1349.0 1149.6L1357.5 1152.0L1357.5 1152.4L1349.0 1154.8zM1364.3 1150.4L1370.3 1152.0L1370.3 1152.4L1364.3 1154.0zM1379.6 1150.4L1385.6 1152.0L1385.6 1152.4L1379.6 1154.0zM1394.8 1148.9L1407.8 1152.0L1407.8 1152.4L1394.8 1155.5zM1410.1 1150.5L1416.1 1152.0L1416.1 1152.4L1410.1 1153.9zM1425.4 1150.4L1431.4 1152.0L1431.4 1152.4L1425.4 1154.0zM1440.7 1150.4L1446.7 1152.0L1446.7 1152.4L1440.7 1154.0zM1456.0 1150.2L1462.0 1152.0L1462.0 1152.4L1456.0 1154.2zM1471.3 1150.3L1477.3 1152.0L1477.3 1152.4L1471.3 1154.1zM1486.6 1150.3L1492.6 1152.0L1492.6 1152.4L1486.6 1154.1zM1501.8 1150.4L1507.8 1152.0L1507.8 1152.4L1501.8 1154.0zM1517.1 1148.9L1530.1 1152.0L1530.1 1152.4L1517.1 1155.5zM1532.4 1150.3L1538.4 1152.0L1538.4 1152.4L1532.4 1154.1zM1547.7 1150.4L1553.7 1152.0L1553.7 1152.4L1547.7 1154.0zM1563.0 1150.4L1569.0 1152.0L1569.0 1152.4L1563.0 1154.0zM1578.3 1150.2L1584.3 1152.0L1584.3 1152.4L1578.3 1154.2zM1593.5 1149.6L1602.0 1152.0L1602.0 1152.4L1593.5 1154.8zM1608.8 1150.2L1614.8 1152.0L1614.8 1152.4L1608.8 1154.2zM1624.1 1150.2L1630.1 1152.0L1630.1 1152.4L1624.1 1154.2zM1639.4 1148.9L1652.4 1152.0L1652.4 1152.4L1639.4 1155.5zM1654.7 1150.3L1660.7 1152.0L1660.7 1152.4L1654.7 1154.1zM1670.0 1150.4L1676.0 1152.0L1676.0 1152.4L1670.0 1154.0zM1685.3 1150.4L1691.3 1152.0L1691.3 1152.4L1685.3 1154.0zM1700.5 1150.4L1706.5 1152.0L1706.5 1152.4L1700.5 1154.0zM1715.8 1150.5L1721.8 1152.0L1721.8 1152.4L1715.8 1153.9zM1731.1 1150.3L1737.1 1152.0L1737.1 1152.4L1731.1 1154.1zM1746.4 1150.4L1752.4 1152.0L1752.4 1152.4L1746.4 1154.0zM1761.7 1148.9L1774.7 1152.0L1774.7 1152.4L1761.7 1155.5zM1777.0 1150.2L1783.0 1152.0L1783.0 1152.4L1777.0 1154.2zM1792.3 1150.4L1798.3 1152.0L1798.3 1152.4L1792.3 1154.0zM1807.5 1150.2L1813.5 1152.0L1813.5 1152.4L1807.5 1154.2zM1822.8 1150.2L1828.8 1152.0L1828.8 1152.4L1822.8 1154.2zM1838.1 1149.6L1846.6 1152.0L1846.6 1152.4L1838.1 1154.8zM1853.4 1150.5L1859.4 1152.0L1859.4 1152.4L1853.4 1153.9zM1868.7 1150.4L1874.7 1152.0L1874.7 1152.4L1868.7 1154.0zM1884.0 1148.9L1928.5 1152.0L1928.5 1152.4L1884.0 1155.5zM1899.2 1150.2L1905.2 1152.0L1905.2 1152.4L1899.2 1154.2zM1914.5 1150.4L1920.5 1152.0L1920.5 1152.4L1914.5 1154.0zM1929.8 1150.2L1935.8 1152.0L1935.8 1152.4L1929.8 1154.2zM1945.1 1150.4L1951.1 1152.0L1951.1 1152.4L1945.1 1154.0zM1960.4 1150.5L1966.4 1152.0L1966.4 1152.4L1960.4 1153.9zM1975.7 1150.3L1981.7 1152.0L1981.7 1152.4L1975.7 1154.1zM1991.0 1150.3L1997.0 1152.0L1997.0 1152.4L1991.0 1154.1zM2006.2 1148.9L2019.2 1152.0L2019.2 1152.4L2006.2 1155.5zM2021.5 1150.4L2027.5 1152.0L2027.5 1152.4L2021.5 1154.0zM2036.8 1150.5L2042.8 1152.0L2042.8 1152.4L2036.8 1153.9zM2052.1 1150.4L2058.1 1152.0L2058.1 1152.4L2052.1 1154.0zM2067.4 1150.2L2073.4 1152.0L2073.4 1152.4L2067.4 1154.2zM2082.7 1149.6L2091.2 1152.0L2091.2 1152.4L2082.7 1154.8zM2098.0 1150.3L2104.0 1152.0L2104.0 1152.4L2098.0 1154.1zM2113.2 1150.5L2119.2 1152.0L2119.2 1152.4L2113.2 1153.9zM2128.5 1148.9L2141.5 1152.0L2141.5 1152.4L2128.5 1155.5zM2143.8 1150.4L2149.8 1152.0L2149.8 1152.4L2143.8 1154.0zM2159.1 1150.5L2165.1 1152.0L2165.1 1152.4L2159.1 1153.9zM2174.4 1150.5L2180.4 1152.0L2180.4 1152.4L2174.4 1153.9zM2189.7 1150.3L2195.7 1152.0L2195.7 1152.4L2189.7 1154.1zM2204.9 1150.4L2210.9 1152.0L2210.9 1152.4L2204.9 1154.0zM2220.2 1150.3L2226.2 1152.0L2226.2 1152.4L2220.2 1154.1zM2235.5 1150.4L2241.5 1152.0L2241.5 1152.4L2235.5 1154.0zM2250.8 1148.9L2263.8 1152.0L2263.8 1152.4L2250.8 1155.5zM2266.1 1150.4L2272.1 1152.0L2272.1 1152.4L2266.1 1154.0zM2281.4 1150.3L2287.4 1152.0L2287.4 1152.4L2281.4 1154.1zM2296.7 1150.5L2302.7 1152.0L2302.7 1152.4L2296.7 1153.9zM2311.9 1150.3L2317.9 1152.0L2317.9 1152.4L2311.9 1154.1zM2327.2 1149.6L2335.7 1152.0L2335.7 1152.4L2327.2 1154.8zM2342.5 1150.5L2348.5 1152.0L2348.5 1152.4L2342.5 1153.9zM2357.8 1150.4L2363.8 1152.0L2363.8 1152.4L2357.8 1154.0zM2373.1 1148.9L2386.1 1152.0L2386.1 1152.4L2373.1 1155.5zM2388.4 1150.4L2394.4 1152.0L2394.4 1152.4L2388.4 1154.0zM2403.7 1150.4L2409.7 1152.0L2409.7 1152.4L2403.7 1154.0zM2418.9 1150.2L2424.9 1152.0L2424.9 1152.4L2418.9 1154.2zM2434.2 1150.3L2440.2 1152.0L2440.2 1152.4L2434.2 1154.1zM2449.5 1150.4L2455.5 1152.0L2455.5 1152.4L2449.5 1154.0zM2464.8 1150.2L2470.8 1152.0L2470.8 1152.4L2464.8 1154.2zM2480.1 1150.4L2486.1 1152.0L2486.1 1152.4L2480.1 1154.0zM2495.4 1148.9L2508.4 1152.0L2508.4 1152.4L2495.4 1155.5zM2510.6 1150.4L2516.6 1152.0L2516.6 1152.4L2510.6 1154.0zM2525.9 1150.2L2531.9 1152.0L2531.9 1152.4L2525.9 1154.2zM2541.2 1150.3L2547.2 1152.0L2547.2 1152.4L2541.2 1154.1zM2556.5 1150.5L2562.5 1152.0L2562.5 1152.4L2556.5 1153.9zM2571.8 1149.6L2580.3 1152.0L2580.3 1152.4L2571.8 1154.8zM2587.1 1150.2L2593.1 1152.0L2593.1 1152.4L2587.1 1154.2zM2602.4 1150.4L2608.4 1152.0L2608.4 1152.4L2602.4 1154.0z" fill="#b4b4b4"/><path d="M782.2 282.0H812.2" stroke="#b6fcc0" stroke-width="1.9"/><path d="M843.4 277.9H873.4" stroke="#b6fcc0" stroke-width="1.9"/><path d="M904.5 275.0H934.5" stroke="#b6fcc0" stroke-width="1.9"/><path d="M996.2 270.9H1026.2" stroke="#b6fcc0" stroke-width="1.9"/><path d="M1057.4 271.8H1087.4" stroke="#b6fcc0" stroke-width="1.9"/><path d="M1118.5 277.9H1148.5" stroke="#b6fcc0" stroke-width="1.9"/><path d="M1149.1 275.0H1179.1" stroke="#b6fcc0" stroke-width="1.9"/><path d="M1271.4 282.0H1301.4" stroke="#b6fcc0" stroke-width="1.9"/><path d="M1332.5 277.9H1362.5" stroke="#b6fcc0" stroke-width="1.9"/><path d="M1393.6 275.0H1423.6" stroke="#b6fcc0" stroke-width="1.9"/><path d="M1485.3 270.9H1515.3" stroke="#b6fcc0" stroke-width="1.9"/><path d="M1546.5 271.8H1576.5" stroke="#b6fcc0" stroke-width="1.9"/><path d="M1607.6 277.9H1637.6" stroke="#b6fcc0" stroke-width="1.9"/><path d="M1638.2 275.0H1668.2" stroke="#b6fcc0" stroke-width="1.9"/><path d="M1760.5 282.0H1790.5" stroke="#b6fcc0" stroke-width="1.9"/><path d="M1821.6 277.9H1851.6" stroke="#b6fcc0" stroke-width="1.9"/><path d="M1882.8 275.0H1912.8" stroke="#b6fcc0" stroke-width="1.9"/><path d="M1974.5 270.9H2004.5" stroke="#b6fcc0" stroke-width="1.9"/><path d="M2035.6 271.8H2065.6" stroke="#b6fcc0" stroke-width="1.9"/><path d="M2096.8 277.9H2126.8" stroke="#b6fcc0" stroke-width="1.9"/><path d="M2127.3 275.0H2157.3" stroke="#b6fcc0" stroke-width="1.9"/><path d="M2249.6 282.0H2279.6" stroke="#b6fcc0" stroke-width="1.9"/><path d="M2310.7 277.9H2340.7" stroke="#b6fcc0" stroke-width="1.9"/><path d="M2371.9 275.0H2401.9" stroke="#b6fcc0" stroke-width="1.9"/><path d="M2463.6 270.9H2493.6" stroke="#b6fcc0" stroke-width="1.9"/><path d="M2524.7 271.8H2554.7" stroke="#b6fcc0" stroke-width="1.9"/><path d="M2585.9 277.9H2615.9" stroke="#b6fcc0" stroke-width="1.9"/><path d="M2616.4 275.0H2646.4" stroke="#b6fcc0" stroke-width="1.9"/><path d="M1271.1 318.0H1286.3" stroke="#b6fcc0" stroke-width="1.5"/><path d="M1271.1 322.4H1286.3" stroke="#b6fcc0" stroke-width="1.5"/><path d="M1271.1 326.7H1286.3" stroke="#b6fcc0" stroke-width="1.5"/><path d="M1332.2 315.0H1347.4" stroke="#b6fcc0" stroke-width="1.5"/><path d="M1332.2 319.3H1347.4" stroke="#b6fcc0" stroke-width="1.5"/><path d="M1332.2 323.0H1347.4" stroke="#b6fcc0" stroke-width="1.5"/><path d="M1393.3 312.5H1424.1" stroke="#b6fcc0" stroke-width="1.4"/><path d="M1393.3 315.7H1424.1" stroke="#b6fcc0" stroke-width="1.4"/><path d="M1393.3 318.8H1424.1" stroke="#b6fcc0" stroke-width="1.4"/><path d="M1393.3 321.9H1424.1" stroke="#b6fcc0" stroke-width="1.4"/><path d="M1760.2 318.0H1775.4" stroke="#b6fcc0" stroke-width="1.5"/><path d="M1760.2 322.4H1775.4" stroke="#b6fcc0" stroke-width="1.5"/><path d="M1760.2 326.7H1775.4" stroke="#b6fcc0" stroke-width="1.5"/><path d="M1821.3 315.0H1836.5" stroke="#b6fcc0" stroke-width="1.5"/><path d="M1821.3 319.3H1836.5" stroke="#b6fcc0" stroke-width="1.5"/><path d="M1821.3 323.0H1836.5" stroke="#b6fcc0" stroke-width="1.5"/><path d="M1882.5 312.5H1913.3" stroke="#b6fcc0" stroke-width="1.4"/><path d="M1882.5 315.7H1913.3" stroke="#b6fcc0" stroke-width="1.4"/><path d="M1882.5 318.8H1913.3" stroke="#b6fcc0" stroke-width="1.4"/><path d="M1882.5 321.9H1913.3" stroke="#b6fcc0" stroke-width="1.4"/><path d="M2249.3 318.0H2264.5" stroke="#b6fcc0" stroke-width="1.5"/><path d="M2249.3 322.4H2264.5" stroke="#b6fcc0" stroke-width="1.5"/><path d="M2249.3 326.7H2264.5" stroke="#b6fcc0" stroke-width="1.5"/><path d="M2310.4 315.0H2325.6" stroke="#b6fcc0" stroke-width="1.5"/><path d="M2310.4 319.3H2325.6" stroke="#b6fcc0" stroke-width="1.5"/><path d="M2310.4 323.0H2325.6" stroke="#b6fcc0" stroke-width="1.5"/><path d="M2371.6 312.5H2402.4" stroke="#b6fcc0" stroke-width="1.4"/><path d="M2371.6 315.7H2402.4" stroke="#b6fcc0" stroke-width="1.4"/><path d="M2371.6 318.8H2402.4" stroke="#b6fcc0" stroke-width="1.4"/><path d="M2371.6 321.9H2402.4" stroke="#b6fcc0" stroke-width="1.4"/><path d="M1912.0 407.9H1943.5" stroke="#b6fcc0" stroke-width="1.7"/><path d="M1943.5 410.9H1974.0" stroke="#b6fcc0" stroke-width="1.7"/><path d="M1974.0 407.9H2004.0" stroke="#b6fcc0" stroke-width="1.7"/><path d="M2004.0 410.9H2035.5" stroke="#b6fcc0" stroke-width="1.7"/><path d="M2035.5 413.3H2065.4" stroke="#b6fcc0" stroke-width="1.7"/><path d="M2065.4 416.9H2096.3" stroke="#b6fcc0" stroke-width="1.7"/><path d="M2096.3 419.9H2126.3" stroke="#b6fcc0" stroke-width="1.7"/><path d="M2126.3 416.9H2249.1" stroke="#b6fcc0" stroke-width="1.7"/><path d="M2401.0 407.9H2463.4" stroke="#b6fcc0" stroke-width="1.7"/><path d="M2464.9 407.9H2493.4" stroke="#b6fcc0" stroke-width="1.7"/><path d="M2493.4 410.9H2553.9" stroke="#b6fcc0" stroke-width="1.7"/><path d="M2553.9 419.9H2613.7" stroke="#b6fcc0" stroke-width="1.7"/><path d="M904.5 509.0H918.9" stroke="#b6fcc0" stroke-width="1.8"/><path d="M919.8 505.0H934.2" stroke="#b6fcc0" stroke-width="1.8"/><path d="M935.1 505.0H949.5" stroke="#b6fcc0" stroke-width="1.8"/><path d="M950.4 505.0H964.8" stroke="#b6fcc0" stroke-width="1.8"/><path d="M965.7 509.0H980.0" stroke="#b6fcc0" stroke-width="1.8"/><path d="M980.9 505.0H995.3" stroke="#b6fcc0" stroke-width="1.8"/><path d="M996.2 503.5H1010.6" stroke="#b6fcc0" stroke-width="1.8"/><path d="M1011.5 505.0H1025.9" stroke="#b6fcc0" stroke-width="1.8"/><path d="M1026.8 501.8H1041.2" stroke="#b6fcc0" stroke-width="1.8"/><path d="M1026.8 509.0H1041.2" stroke="#b6fcc0" stroke-width="1.8"/><path d="M1042.1 505.0H1056.5" stroke="#b6fcc0" stroke-width="1.8"/><path d="M1057.4 503.5H1071.8" stroke="#b6fcc0" stroke-width="1.8"/><path d="M1072.7 505.0H1087.0" stroke="#b6fcc0" stroke-width="1.8"/><path d="M1087.9 509.0H1102.3" stroke="#b6fcc0" stroke-width="1.8"/><path d="M1103.2 505.0H1117.6" stroke="#b6fcc0" stroke-width="1.8"/><path d="M1118.5 505.0H1132.9" stroke="#b6fcc0" stroke-width="1.8"/><path d="M1133.8 505.0H1148.2" stroke="#b6fcc0" stroke-width="1.8"/><path d="M1149.1 501.8H1163.5" stroke="#b6fcc0" stroke-width="1.8"/><path d="M1149.1 509.0H1163.5" stroke="#b6fcc0" stroke-width="1.8"/><path d="M1164.4 505.0H1178.8" stroke="#b6fcc0" stroke-width="1.8"/><path d="M1179.7 505.0H1194.0" stroke="#b6fcc0" stroke-width="1.8"/><path d="M1194.9 505.0H1209.3" stroke="#b6fcc0" stroke-width="1.8"/><path d="M1210.2 509.0H1224.6" stroke="#b6fcc0" stroke-width="1.8"/><path d="M1225.5 505.0H1239.9" stroke="#b6fcc0" stroke-width="1.8"/><path d="M1240.8 503.5H1255.2" stroke="#b6fcc0" stroke-width="1.8"/><path d="M1256.1 505.0H1270.5" stroke="#b6fcc0" stroke-width="1.8"/><path d="M1271.4 501.8H1285.7" stroke="#b6fcc0" stroke-width="1.8"/><path d="M1271.4 509.0H1285.7" stroke="#b6fcc0" stroke-width="1.8"/><path d="M1286.6 505.0H1301.0" stroke="#b6fcc0" stroke-width="1.8"/><path d="M1301.9 503.5H1316.3" stroke="#b6fcc0" stroke-width="1.8"/><path d="M1317.2 505.0H1331.6" stroke="#b6fcc0" stroke-width="1.8"/><path d="M1332.5 509.0H1346.9" stroke="#b6fcc0" stroke-width="1.8"/><path d="M1347.8 505.0H1362.2" stroke="#b6fcc0" stroke-width="1.8"/><path d="M1363.1 505.0H1377.5" stroke="#b6fcc0" stroke-width="1.8"/><path d="M1378.4 505.0H1392.7" stroke="#b6fcc0" stroke-width="1.8"/><path d="M1393.6 509.0H1408.0" stroke="#b6fcc0" stroke-width="1.8"/><path d="M1408.9 505.0H1423.3" stroke="#b6fcc0" stroke-width="1.8"/><path d="M1424.2 505.0H1438.6" stroke="#b6fcc0" stroke-width="1.8"/><path d="M1439.5 505.0H1453.9" stroke="#b6fcc0" stroke-width="1.8"/><path d="M1454.8 509.0H1469.2" stroke="#b6fcc0" stroke-width="1.8"/><path d="M1470.1 505.0H1484.5" stroke="#b6fcc0" stroke-width="1.8"/><path d="M1485.4 503.5H1499.7" stroke="#b6fcc0" stroke-width="1.8"/><path d="M1500.6 505.0H1515.0" stroke="#b6fcc0" stroke-width="1.8"/><path d="M1515.9 501.8H1530.3" stroke="#b6fcc0" stroke-width="1.8"/><path d="M1515.9 509.0H1530.3" stroke="#b6fcc0" stroke-width="1.8"/><path d="M1531.2 505.0H1545.6" stroke="#b6fcc0" stroke-width="1.8"/><path d="M1546.5 503.5H1560.9" stroke="#b6fcc0" stroke-width="1.8"/><path d="M1561.8 505.0H1576.2" stroke="#b6fcc0" stroke-width="1.8"/><path d="M1577.1 509.0H1591.4" stroke="#b6fcc0" stroke-width="1.8"/><path d="M1592.3 505.0H1606.7" stroke="#b6fcc0" stroke-width="1.8"/><path d="M1607.6 505.0H1622.0" stroke="#b6fcc0" stroke-width="1.8"/><path d="M1622.9 505.0H1637.3" stroke="#b6fcc0" stroke-width="1.8"/><path d="M1638.2 501.8H1652.6" stroke="#b6fcc0" stroke-width="1.8"/><path d="M1638.2 509.0H1652.6" stroke="#b6fcc0" stroke-width="1.8"/><path d="M1653.5 505.0H1667.9" stroke="#b6fcc0" stroke-width="1.8"/><path d="M1668.8 505.0H1683.2" stroke="#b6fcc0" stroke-width="1.8"/><path d="M1684.1 505.0H1698.4" stroke="#b6fcc0" stroke-width="1.8"/><path d="M1699.3 509.0H1713.7" stroke="#b6fcc0" stroke-width="1.8"/><path d="M1714.6 505.0H1729.0" stroke="#b6fcc0" stroke-width="1.8"/><path d="M1729.9 503.5H1744.3" stroke="#b6fcc0" stroke-width="1.8"/><path d="M1745.2 505.0H1759.6" stroke="#b6fcc0" stroke-width="1.8"/><path d="M1760.5 501.8H1774.9" stroke="#b6fcc0" stroke-width="1.8"/><path d="M1760.5 509.0H1774.9" stroke="#b6fcc0" stroke-width="1.8"/><path d="M1775.8 505.0H1790.2" stroke="#b6fcc0" stroke-width="1.8"/><path d="M1791.1 505.0H1805.4" stroke="#b6fcc0" stroke-width="1.8"/><path d="M1791.1 508.0H1805.4" stroke="#b6fcc0" stroke-width="1.8"/><path d="M1806.3 505.0H1820.7" stroke="#b6fcc0" stroke-width="1.8"/><path d="M1821.6 500.7H1836.0" stroke="#b6fcc0" stroke-width="1.8"/><path d="M1852.2 501.8H1866.6" stroke="#b6fcc0" stroke-width="1.8"/><path d="M1852.2 509.0H1866.6" stroke="#b6fcc0" stroke-width="1.8"/><path d="M1882.8 495.8H1897.1" stroke="#b6fcc0" stroke-width="1.8"/><path d="M1882.8 509.0H1897.1" stroke="#b6fcc0" stroke-width="1.8"/><path d="M1898.0 505.0H1912.4" stroke="#b6fcc0" stroke-width="1.8"/><path d="M1913.3 505.0H1927.7" stroke="#b6fcc0" stroke-width="1.8"/><path d="M1928.6 505.0H1943.0" stroke="#b6fcc0" stroke-width="1.8"/><path d="M1943.9 509.0H1958.3" stroke="#b6fcc0" stroke-width="1.8"/><path d="M1959.2 505.0H1973.6" stroke="#b6fcc0" stroke-width="1.8"/><path d="M1974.5 503.5H1988.9" stroke="#b6fcc0" stroke-width="1.8"/><path d="M1989.8 505.0H2004.1" stroke="#b6fcc0" stroke-width="1.8"/><path d="M2005.0 501.8H2019.4" stroke="#b6fcc0" stroke-width="1.8"/><path d="M2005.0 509.0H2019.4" stroke="#b6fcc0" stroke-width="1.8"/><path d="M2020.3 505.0H2034.7" stroke="#b6fcc0" stroke-width="1.8"/><path d="M2035.6 503.5H2050.0" stroke="#b6fcc0" stroke-width="1.8"/><path d="M2050.9 505.0H2065.3" stroke="#b6fcc0" stroke-width="1.8"/><path d="M2066.2 509.0H2080.6" stroke="#b6fcc0" stroke-width="1.8"/><path d="M2081.5 505.0H2095.9" stroke="#b6fcc0" stroke-width="1.8"/><path d="M2096.8 505.0H2111.1" stroke="#b6fcc0" stroke-width="1.8"/><path d="M2112.0 505.0H2126.4" stroke="#b6fcc0" stroke-width="1.8"/><path d="M2127.3 501.8H2141.7" stroke="#b6fcc0" stroke-width="1.8"/><path d="M2127.3 509.0H2141.7" stroke="#b6fcc0" stroke-width="1.8"/><path d="M2142.6 505.0H2157.0" stroke="#b6fcc0" stroke-width="1.8"/><path d="M2157.9 505.0H2172.3" stroke="#b6fcc0" stroke-width="1.8"/><path d="M2173.2 505.0H2187.6" stroke="#b6fcc0" stroke-width="1.8"/><path d="M2188.5 509.0H2202.8" stroke="#b6fcc0" stroke-width="1.8"/><path d="M2203.7 505.0H2218.1" stroke="#b6fcc0" stroke-width="1.8"/><path d="M2219.0 503.5H2233.4" stroke="#b6fcc0" stroke-width="1.8"/><path d="M2234.3 505.0H2248.7" stroke="#b6fcc0" stroke-width="1.8"/><path d="M2249.6 501.8H2264.0" stroke="#b6fcc0" stroke-width="1.8"/><path d="M2249.6 509.0H2264.0" stroke="#b6fcc0" stroke-width="1.8"/><path d="M2264.9 505.0H2279.3" stroke="#b6fcc0" stroke-width="1.8"/><path d="M2280.2 503.5H2294.6" stroke="#b6fcc0" stroke-width="1.8"/><path d="M2295.5 505.0H2309.8" stroke="#b6fcc0" stroke-width="1.8"/><path d="M2310.7 509.0H2325.1" stroke="#b6fcc0" stroke-width="1.8"/><path d="M2326.0 505.0H2340.4" stroke="#b6fcc0" stroke-width="1.8"/><path d="M2341.3 505.0H2355.7" stroke="#b6fcc0" stroke-width="1.8"/><path d="M2356.6 505.0H2371.0" stroke="#b6fcc0" stroke-width="1.8"/><path d="M2371.9 509.0H2386.3" stroke="#b6fcc0" stroke-width="1.8"/><path d="M2387.2 505.0H2401.6" stroke="#b6fcc0" stroke-width="1.8"/><path d="M2402.5 505.0H2416.8" stroke="#b6fcc0" stroke-width="1.8"/><path d="M2417.7 505.0H2432.1" stroke="#b6fcc0" stroke-width="1.8"/><path d="M2433.0 509.0H2447.4" stroke="#b6fcc0" stroke-width="1.8"/><path d="M2448.3 505.0H2462.7" stroke="#b6fcc0" stroke-width="1.8"/><path d="M2463.6 503.5H2478.0" stroke="#b6fcc0" stroke-width="1.8"/><path d="M2478.9 505.0H2493.3" stroke="#b6fcc0" stroke-width="1.8"/><path d="M2494.2 501.8H2508.5" stroke="#b6fcc0" stroke-width="1.8"/><path d="M2494.2 509.0H2508.5" stroke="#b6fcc0" stroke-width="1.8"/><path d="M2509.4 505.0H2523.8" stroke="#b6fcc0" stroke-width="1.8"/><path d="M2524.7 503.5H2539.1" stroke="#b6fcc0" stroke-width="1.8"/><path d="M2540.0 505.0H2554.4" stroke="#b6fcc0" stroke-width="1.8"/><path d="M2555.3 509.0H2569.7" stroke="#b6fcc0" stroke-width="1.8"/><path d="M2570.6 505.0H2585.0" stroke="#b6fcc0" stroke-width="1.8"/><path d="M2585.9 505.0H2600.3" stroke="#b6fcc0" stroke-width="1.8"/><path d="M2601.2 505.0H2612.6" stroke="#b6fcc0" stroke-width="1.8"/><path d="M415.5 548.0H430.4" stroke="#b2b2b2" stroke-width="1.5"/><path d="M537.8 548.0H552.7" stroke="#b2b2b2" stroke-width="1.5"/><path d="M660.1 548.0H675.0" stroke="#b2b2b2" stroke-width="1.5"/><path d="M721.2 548.0H736.1" stroke="#b2b2b2" stroke-width="1.5"/><path d="M782.3 548.0H797.2" stroke="#b2b2b2" stroke-width="1.5"/><path d="M843.5 548.0H858.4" stroke="#b2b2b2" stroke-width="1.5"/><path d="M1728.9 824.0H1759.7" stroke="#a8a8a8" stroke-width="1.6"/><path d="M1760.2 818.9H1789.8" stroke="#a8a8a8" stroke-width="1.6"/><path d="M1792.0 818.9H1821.0" stroke="#a8a8a8" stroke-width="1.6"/><path d="M1821.0 811.9H1851.0" stroke="#a8a8a8" stroke-width="1.6"/><path d="M1853.0 811.9H1882.0" stroke="#a8a8a8" stroke-width="1.6"/><path d="M1882.0 807.8H1912.0" stroke="#a8a8a8" stroke-width="1.6"/><path d="M1914.0 807.8H2064.8" stroke="#a8a8a8" stroke-width="1.6"/><path d="M2218.0 807.9H2249.0" stroke="#a8a8a8" stroke-width="1.6"/><path d="M2249.0 803.7H2279.0" stroke="#a8a8a8" stroke-width="1.6"/><path d="M2279.0 801.0H2310.0" stroke="#a8a8a8" stroke-width="1.6"/><path d="M2310.0 803.7H2340.0" stroke="#a8a8a8" stroke-width="1.6"/><path d="M2340.0 811.8H2371.0" stroke="#a8a8a8" stroke-width="1.6"/><path d="M2371.0 807.9H2554.0" stroke="#a8a8a8" stroke-width="1.6"/></g></svg>
<div style="left:59.10px;top:149.80px;width:346.20px;height:35.60px;background:#595959;"></div>
<div style="left:59.10px;top:185.20px;width:2553.50px;height:1.20px;background:#0e0e0e;"></div>
<div style="left:67.50px;top:156.50px;width:32.50px;height:20.20px;background:#3b3b3b;border-radius:4.500px;box-shadow:inset 0 0 0 1px #2b2b2b,0 1px 0 rgba(255,255,255,.07);"></div>
<div style="left:108.10px;top:156.50px;width:32.50px;height:20.20px;background:#3b3b3b;border-radius:4.500px;box-shadow:inset 0 0 0 1px #2b2b2b,0 1px 0 rgba(255,255,255,.07);"></div>
<div style="left:149.30px;top:156.50px;width:32.50px;height:20.20px;background:#3b3b3b;border-radius:4.500px;box-shadow:inset 0 0 0 1px #2b2b2b,0 1px 0 rgba(255,255,255,.07);"></div>
<svg style="left:77.20px;top:160.10px;" width="13" height="13" viewBox="0 0 13 13"><path d="M6.500 1v11M1 6.500h11" stroke="#fff" stroke-width="1.200"/></svg>
<svg style="left:115.50px;top:158.20px;" width="18" height="17" viewBox="0 0 18 17"><rect x="5.600" y="5.400" width="10.400" height="9.800" rx="0.800" fill="none" stroke="#fff" stroke-width="1.100"/><rect x="0.800" y="0.800" width="11" height="10.400" rx="0.800" fill="#fff"/><path d="M6.300 3v6M3.300 6h6" stroke="#3b3b3b" stroke-width="1.300"/></svg>
<div style="left:364.40px;top:156.50px;width:32.40px;height:20.20px;background:#3a6fc0;border-radius:4.500px;box-shadow:inset 0 0 0 1px #2c57a0;"></div>
<svg style="left:373.60px;top:159.60px;" width="14" height="14" viewBox="0 0 14 14"><rect x="1" y="1.200" width="12" height="11.600" rx="0.600" fill="none" stroke="#e8f0ff" stroke-width="1.100"/><rect x="1" y="1.200" width="12" height="2.600" fill="#e8f0ff"/><path d="M5 8.600l2-2 2 2" stroke="#e8f0ff" stroke-width="1.100" fill="none"/></svg>
<div style="left:59.10px;top:186.30px;width:346.20px;height:25.00px;background:#646464;"></div>
<div style="left:59.10px;top:211.20px;width:346.20px;height:1.00px;background:#505050;"></div>
<div style="left:59.10px;top:212.20px;width:346.20px;height:27.60px;background:#646464;"></div>
<div style="left:385.00px;top:189.80px;width:14.00px;height:14.00px;border-radius:50%;background:#5a5a5a;"></div>
<svg style="left:387.00px;top:191.80px;" width="10" height="10" viewBox="0 0 10 10"><path d="M5 0.600v8.800M0.600 5h8.800" stroke="#fff" stroke-width="1.150"/></svg>
<div style="left:385.00px;top:216.60px;width:14.00px;height:14.00px;border-radius:50%;background:#5a5a5a;"></div>
<svg style="left:387.00px;top:218.60px;" width="10" height="10" viewBox="0 0 10 10"><path d="M5 0.600v8.800M0.600 5h8.800" stroke="#fff" stroke-width="1.150"/></svg>
<div style="left:59.10px;top:239.60px;width:2553.50px;height:3.20px;background:#1c1c1c;"></div>
<div style="left:59.10px;top:240.40px;width:346.20px;height:1.20px;background:#5e5e5e;"></div>
<div style="left:406.00px;top:240.40px;width:2206.60px;height:1.20px;background:#5e5e5e;"></div>
<div style="left:405.30px;top:149.80px;width:1.00px;height:1237.80px;background:#0e0e0e;"></div>
<svg class="tx" style="left:0;top:0;" width="2672" height="1465"><defs><clipPath id="tclip"><rect x="406.2" y="242" width="2206.4" height="1146"/></clipPath></defs><text x="159.66" y="172.60" font-size="17.5" fill="#fff">S</text><text x="79.60" y="202.80" font-size="13" fill="#fff" letter-spacing="0.323" stroke="#fff" stroke-width="0.3">Arrangement</text><text x="78.80" y="229.60" font-size="13" fill="#fff" letter-spacing="0.292" stroke="#fff" stroke-width="0.3">Marker</text></svg>
<div style="left:59.10px;top:242.80px;width:346.20px;height:1144.80px;background:#626262;"></div>
<div style="left:59.10px;top:287.70px;width:346.20px;height:1.10px;background:#4d4d4d;"></div>
<svg style="left:87.50px;top:249.75px;" width="32" height="32" viewBox="0 0 32 32"><path d="M14.200 18.800L29.400 2.800" stroke="#c58a2e" stroke-width="1.500" stroke-linecap="round"/><path d="M27.400 3.600l2.600-2.900 1.300 1.100-2.400 3.200z" fill="#e2b456"/>
<ellipse cx="8.300" cy="25.300" rx="7.700" ry="4.700" transform="rotate(-38 8.300 25.300)" fill="#d8c86e"/><ellipse cx="6.600" cy="26.600" rx="4.600" ry="3" transform="rotate(-38 6.600 26.600)" fill="#e4d684"/>
<path d="M9.400 15.700c1-.9 2.200-1.500 2.800-1.100.5.500-.3 1.700-.2 2.900.2 1.500 1.700 2.100 2.900 3.100.9.800 1.300 1.500.7 2.100-.8.800-2.300.3-3.500.6-1 .3-1.700 1.200-2.500.7-.9-.6-.3-2.400-.4-3.900-.1-1.700-.8-3.500.2-4.400z" fill="#241f18"/></svg>
<div style="left:128.10px;top:257.20px;width:20.80px;height:17.30px;background:#3770b6;border-radius:3.500px;box-shadow:inset 0 0 0 1px #25528f;"></div>
<svg style="left:132.50px;top:259.85px;" width="12" height="12" viewBox="0 0 12 12"><path d="M3.500 3.100A4.600 4.600 0 1 0 8.500 3.100" stroke="#d3e7ff" stroke-width="1.100" fill="none" stroke-linecap="round"/><path d="M6 0.900v5.200" stroke="#d3e7ff" stroke-width="1.100" stroke-linecap="round"/></svg>
<div class="hb" style="left:155.00px;top:257.20px;width:40.90px;height:17.30px;"></div>
<div class="hbd" style="left:174.95px;top:258.20px;width:1.00px;height:15.30px;"></div>
<div class="hb" style="left:202.00px;top:257.20px;width:20.70px;height:17.30px;"></div>
<div style="left:385.90px;top:260.95px;width:9.00px;height:9.00px;border-radius:50%;background:#3d3d3d;"></div>
<div style="left:59.10px;top:333.50px;width:346.20px;height:1.10px;background:#4d4d4d;"></div>
<svg style="left:87.50px;top:295.40px;" width="32" height="32" viewBox="0 0 32 32"><path d="M3.500 11.200l1.800-4.600 21.500 2.400 2 4.400-1 2.400-22.800-2.400z" fill="#1c1c1e"/><path d="M5.300 6.600l21.500 2.400-.3 1.200-21.600-2.400z" fill="#4a4a50"/><path d="M4 12.600l23 2.500" stroke="#d8d8d8" stroke-width="0.900"/>
<path d="M6 14v11M10.500 14.500v8M24.500 16v11M21 15.600v8" stroke="#8e8e8e" stroke-width="0.800"/></svg>
<div style="left:128.10px;top:302.85px;width:20.80px;height:17.30px;background:#3770b6;border-radius:3.500px;box-shadow:inset 0 0 0 1px #25528f;"></div>
<svg style="left:132.50px;top:305.50px;" width="12" height="12" viewBox="0 0 12 12"><path d="M3.500 3.100A4.600 4.600 0 1 0 8.500 3.100" stroke="#d3e7ff" stroke-width="1.100" fill="none" stroke-linecap="round"/><path d="M6 0.900v5.200" stroke="#d3e7ff" stroke-width="1.100" stroke-linecap="round"/></svg>
<div class="hb" style="left:155.00px;top:302.85px;width:40.90px;height:17.30px;"></div>
<div class="hbd" style="left:174.95px;top:303.85px;width:1.00px;height:15.30px;"></div>
<div class="hb" style="left:202.00px;top:302.85px;width:20.70px;height:17.30px;"></div>
<div style="left:385.90px;top:306.60px;width:9.00px;height:9.00px;border-radius:50%;background:#3d3d3d;"></div>
<div style="left:59.10px;top:379.40px;width:346.20px;height:1.10px;background:#4d4d4d;"></div>
<svg style="left:87.50px;top:341.25px;" width="32" height="32" viewBox="0 0 32 32"><path d="M4.300 28.200L29 4.400" stroke="#161616" stroke-width="1.800" stroke-linecap="round"/><path d="M14 18.200l1 1M19.500 12.900l.9.900M23.500 9l.9.900" stroke="#bdbdbd" stroke-width="1"/><path d="M27.400 5.900l1.300-1.200" stroke="#f0f0f0" stroke-width="1.500" stroke-linecap="round"/><path d="M4.300 28.200l.9-.9" stroke="#cfcfcf" stroke-width="1.200" stroke-linecap="round"/></svg>
<div style="left:128.10px;top:348.70px;width:20.80px;height:17.30px;background:#3770b6;border-radius:3.500px;box-shadow:inset 0 0 0 1px #25528f;"></div>
<svg style="left:132.50px;top:351.35px;" width="12" height="12" viewBox="0 0 12 12"><path d="M3.500 3.100A4.600 4.600 0 1 0 8.500 3.100" stroke="#d3e7ff" stroke-width="1.100" fill="none" stroke-linecap="round"/><path d="M6 0.900v5.200" stroke="#d3e7ff" stroke-width="1.100" stroke-linecap="round"/></svg>
<div class="hb" style="left:155.00px;top:348.70px;width:40.90px;height:17.30px;"></div>
<div class="hbd" style="left:174.95px;top:349.70px;width:1.00px;height:15.30px;"></div>
<div class="hb" style="left:202.00px;top:348.70px;width:20.70px;height:17.30px;"></div>
<div style="left:385.90px;top:352.45px;width:9.00px;height:9.00px;border-radius:50%;background:#3d3d3d;"></div>
<div style="left:59.10px;top:425.30px;width:346.20px;height:1.10px;background:#4d4d4d;"></div>
<svg style="left:87.50px;top:387.15px;" width="32" height="32" viewBox="0 0 32 32"><path d="M14.200 18.800L29.400 2.800" stroke="#c58a2e" stroke-width="1.500" stroke-linecap="round"/><path d="M27.400 3.600l2.600-2.900 1.300 1.100-2.400 3.200z" fill="#e2b456"/>
<ellipse cx="8.300" cy="25.300" rx="7.700" ry="4.700" transform="rotate(-38 8.300 25.300)" fill="#d8c86e"/><ellipse cx="6.600" cy="26.600" rx="4.600" ry="3" transform="rotate(-38 6.600 26.600)" fill="#e4d684"/>
<path d="M9.400 15.700c1-.9 2.200-1.500 2.800-1.100.5.500-.3 1.700-.2 2.900.2 1.500 1.700 2.100 2.900 3.100.9.800 1.300 1.500.7 2.100-.8.800-2.300.3-3.500.6-1 .3-1.700 1.200-2.500.7-.9-.6-.3-2.400-.4-3.900-.1-1.700-.8-3.500.2-4.400z" fill="#241f18"/></svg>
<div style="left:128.10px;top:394.60px;width:20.80px;height:17.30px;background:#3770b6;border-radius:3.500px;box-shadow:inset 0 0 0 1px #25528f;"></div>
<svg style="left:132.50px;top:397.25px;" width="12" height="12" viewBox="0 0 12 12"><path d="M3.500 3.100A4.600 4.600 0 1 0 8.500 3.100" stroke="#d3e7ff" stroke-width="1.100" fill="none" stroke-linecap="round"/><path d="M6 0.900v5.200" stroke="#d3e7ff" stroke-width="1.100" stroke-linecap="round"/></svg>
<div class="hb" style="left:155.00px;top:394.60px;width:40.90px;height:17.30px;"></div>
<div class="hbd" style="left:174.95px;top:395.60px;width:1.00px;height:15.30px;"></div>
<div class="hb" style="left:202.00px;top:394.60px;width:20.70px;height:17.30px;"></div>
<div style="left:385.90px;top:398.35px;width:9.00px;height:9.00px;border-radius:50%;background:#3d3d3d;"></div>
<div style="left:59.10px;top:471.40px;width:346.20px;height:1.10px;background:#4d4d4d;"></div>
<svg style="left:87.50px;top:433.15px;" width="32" height="32" viewBox="0 0 32 32"><path d="M14.200 18.800L29.400 2.800" stroke="#c58a2e" stroke-width="1.500" stroke-linecap="round"/><path d="M27.400 3.600l2.600-2.900 1.300 1.100-2.400 3.200z" fill="#e2b456"/>
<ellipse cx="8.300" cy="25.300" rx="7.700" ry="4.700" transform="rotate(-38 8.300 25.300)" fill="#d8c86e"/><ellipse cx="6.600" cy="26.600" rx="4.600" ry="3" transform="rotate(-38 6.600 26.600)" fill="#e4d684"/>
<path d="M9.400 15.700c1-.9 2.200-1.500 2.800-1.100.5.500-.3 1.700-.2 2.900.2 1.500 1.700 2.100 2.900 3.100.9.800 1.300 1.500.7 2.100-.8.800-2.300.3-3.500.6-1 .3-1.700 1.200-2.500.7-.9-.6-.3-2.400-.4-3.900-.1-1.700-.8-3.500.2-4.400z" fill="#241f18"/></svg>
<div style="left:128.10px;top:440.60px;width:20.80px;height:17.30px;background:#3770b6;border-radius:3.500px;box-shadow:inset 0 0 0 1px #25528f;"></div>
<svg style="left:132.50px;top:443.25px;" width="12" height="12" viewBox="0 0 12 12"><path d="M3.500 3.100A4.600 4.600 0 1 0 8.500 3.100" stroke="#d3e7ff" stroke-width="1.100" fill="none" stroke-linecap="round"/><path d="M6 0.900v5.200" stroke="#d3e7ff" stroke-width="1.100" stroke-linecap="round"/></svg>
<div class="hb" style="left:155.00px;top:440.60px;width:40.90px;height:17.30px;"></div>
<div class="hbd" style="left:174.95px;top:441.60px;width:1.00px;height:15.30px;"></div>
<div class="hb" style="left:202.00px;top:440.60px;width:20.70px;height:17.30px;"></div>
<div style="left:385.90px;top:444.35px;width:9.00px;height:9.00px;border-radius:50%;background:#3d3d3d;"></div>
<div style="left:59.10px;top:517.50px;width:346.20px;height:1.10px;background:#4d4d4d;"></div>
<svg style="left:87.50px;top:479.25px;" width="32" height="32" viewBox="0 0 32 32"><ellipse cx="9" cy="10" rx="5.500" ry="1.600" fill="#a8a8a8"/><ellipse cx="24" cy="9.500" rx="5.500" ry="1.600" fill="#a8a8a8"/><ellipse cx="11.500" cy="14.500" rx="4" ry="3.200" fill="#c9c9c9"/><ellipse cx="20.500" cy="14.500" rx="4" ry="3.200" fill="#c9c9c9"/>
<ellipse cx="6" cy="20.500" rx="4" ry="3.600" fill="#b0b0b0"/><ellipse cx="26.500" cy="21" rx="4" ry="3.400" fill="#b0b0b0"/><circle cx="16.200" cy="21.500" r="6.600" fill="#d0d0d0"/><circle cx="16.200" cy="22" r="4.600" fill="#1e1e1e"/>
<path d="M3 27l-2 3M29 27l2.500 3M9 10v16M24 9.500v16" stroke="#8a8a8a" stroke-width="0.700"/></svg>
<div style="left:128.10px;top:486.70px;width:20.80px;height:17.30px;background:#3770b6;border-radius:3.500px;box-shadow:inset 0 0 0 1px #25528f;"></div>
<svg style="left:132.50px;top:489.35px;" width="12" height="12" viewBox="0 0 12 12"><path d="M3.500 3.100A4.600 4.600 0 1 0 8.500 3.100" stroke="#d3e7ff" stroke-width="1.100" fill="none" stroke-linecap="round"/><path d="M6 0.900v5.200" stroke="#d3e7ff" stroke-width="1.100" stroke-linecap="round"/></svg>
<div class="hb" style="left:155.00px;top:486.70px;width:40.90px;height:17.30px;"></div>
<div class="hbd" style="left:174.95px;top:487.70px;width:1.00px;height:15.30px;"></div>
<div class="hb" style="left:202.00px;top:486.70px;width:20.70px;height:17.30px;"></div>
<div style="left:385.90px;top:490.45px;width:9.00px;height:9.00px;border-radius:50%;background:#3d3d3d;"></div>
<div style="left:59.10px;top:563.80px;width:346.20px;height:1.10px;background:#4d4d4d;"></div>
<svg style="left:87.50px;top:525.45px;" width="32" height="32" viewBox="0 0 32 32"><path d="M2.800 15.800L28.600 8" stroke="#dcae80" stroke-width="1.200" stroke-linecap="round"/><path d="M13.400 29L23.800 4" stroke="#e2b88c" stroke-width="1.200" stroke-linecap="round"/></svg>
<div style="left:128.10px;top:532.90px;width:20.80px;height:17.30px;background:#3770b6;border-radius:3.500px;box-shadow:inset 0 0 0 1px #25528f;"></div>
<svg style="left:132.50px;top:535.55px;" width="12" height="12" viewBox="0 0 12 12"><path d="M3.500 3.100A4.600 4.600 0 1 0 8.500 3.100" stroke="#d3e7ff" stroke-width="1.100" fill="none" stroke-linecap="round"/><path d="M6 0.900v5.200" stroke="#d3e7ff" stroke-width="1.100" stroke-linecap="round"/></svg>
<div class="hb" style="left:155.00px;top:532.90px;width:40.90px;height:17.30px;"></div>
<div style="left:155.00px;top:532.90px;width:20.45px;height:17.30px;background:#2b979e;border-radius:3.500px 0 0 3.500px;box-shadow:inset 0 0 0 1px #247d84;"></div>
<div class="hbd" style="left:174.95px;top:533.90px;width:1.00px;height:15.30px;"></div>
<div class="hb" style="left:202.00px;top:532.90px;width:20.70px;height:17.30px;"></div>
<div style="left:385.90px;top:536.65px;width:9.00px;height:9.00px;border-radius:50%;background:#3d3d3d;"></div>
<div style="left:59.10px;top:564.40px;width:346.20px;height:125.70px;background:#8c8c8c;"></div>
<div style="left:59.10px;top:564.40px;width:20.40px;height:125.70px;background:#898989;"></div>
<div style="left:59.10px;top:689.50px;width:346.20px;height:1.10px;background:#4d4d4d;"></div>
<svg style="left:87.70px;top:613.45px;" width="32" height="32" viewBox="0 0 32 32"><path d="M16.900 6.500v21.500" stroke="#4a4a4a" stroke-width="0.700"/><path d="M16.300 6.500v21.500" stroke="#e6e6e6" stroke-width="0.800"/><path d="M14.200 6l4.200-3.600" stroke="#2b2b2b" stroke-width="2.100" stroke-linecap="round"/><path d="M15.400 4.200l2.800-2.400" stroke="#c8c8c8" stroke-width="0.600" stroke-linecap="round"/>
<ellipse cx="16.500" cy="28.600" rx="4.300" ry="1.900" fill="#e6e6e6"/><ellipse cx="16.500" cy="29.300" rx="4.300" ry="1.500" fill="none" stroke="#555" stroke-width="0.500"/><ellipse cx="16.500" cy="28.200" rx="2" ry="0.700" fill="#9a9a9a"/></svg>
<div style="left:128.10px;top:629.20px;width:20.80px;height:17.30px;background:#3770b6;border-radius:3.500px;box-shadow:inset 0 0 0 1px #25528f;"></div>
<svg style="left:132.50px;top:631.85px;" width="12" height="12" viewBox="0 0 12 12"><path d="M3.500 3.100A4.600 4.600 0 1 0 8.500 3.100" stroke="#d3e7ff" stroke-width="1.100" fill="none" stroke-linecap="round"/><path d="M6 0.900v5.200" stroke="#d3e7ff" stroke-width="1.100" stroke-linecap="round"/></svg>
<div class="hb" style="left:155.00px;top:629.20px;width:40.90px;height:17.30px;"></div>
<div class="hbd" style="left:174.95px;top:630.20px;width:1.00px;height:15.30px;"></div>
<div class="hb" style="left:202.00px;top:629.20px;width:40.70px;height:17.30px;"></div>
<div class="hbd" style="left:221.85px;top:630.20px;width:1.00px;height:15.30px;"></div>
<div style="left:254.20px;top:631.90px;width:100.70px;height:11.90px;border-radius:6px;background:#363837;"></div>
<div style="left:314.60px;top:628.75px;width:18.20px;height:18.20px;border-radius:50%;background:#a9a9a9;box-shadow:inset 0 0 0 1.050px #dedede,0 0.500px 1.500px rgba(0,0,0,.4);"></div>
<svg style="left:363.50px;top:612.45px;" width="32" height="32" viewBox="0 0 32 32"><path d="M8.84 25.50A11.9 11.9 0 1 1 23.16 25.50" stroke="#3a3a3a" stroke-width="3.100" fill="none"/><circle cx="16" cy="16" r="10.500" fill="#c9c9c9"/><path d="M16.00 13.80L16.00 3.40" stroke="#3a3a3a" stroke-width="1.100"/></svg>
<div style="left:59.10px;top:759.60px;width:346.20px;height:1.10px;background:#4d4d4d;"></div>
<svg style="left:87.70px;top:711.35px;" width="32" height="32" viewBox="0 0 32 32"><path d="M16.900 6.500v21.500" stroke="#4a4a4a" stroke-width="0.700"/><path d="M16.300 6.500v21.500" stroke="#e6e6e6" stroke-width="0.800"/><path d="M14.200 6l4.200-3.600" stroke="#2b2b2b" stroke-width="2.100" stroke-linecap="round"/><path d="M15.400 4.200l2.800-2.400" stroke="#c8c8c8" stroke-width="0.600" stroke-linecap="round"/>
<ellipse cx="16.500" cy="28.600" rx="4.300" ry="1.900" fill="#e6e6e6"/><ellipse cx="16.500" cy="29.300" rx="4.300" ry="1.500" fill="none" stroke="#555" stroke-width="0.500"/><ellipse cx="16.500" cy="28.200" rx="2" ry="0.700" fill="#9a9a9a"/></svg>
<div style="left:128.10px;top:727.10px;width:20.80px;height:17.30px;background:#3770b6;border-radius:3.500px;box-shadow:inset 0 0 0 1px #25528f;"></div>
<svg style="left:132.50px;top:729.75px;" width="12" height="12" viewBox="0 0 12 12"><path d="M3.500 3.100A4.600 4.600 0 1 0 8.500 3.100" stroke="#d3e7ff" stroke-width="1.100" fill="none" stroke-linecap="round"/><path d="M6 0.900v5.200" stroke="#d3e7ff" stroke-width="1.100" stroke-linecap="round"/></svg>
<div class="hb" style="left:155.00px;top:727.10px;width:40.90px;height:17.30px;"></div>
<div style="left:155.00px;top:727.10px;width:20.45px;height:17.30px;background:#2b979e;border-radius:3.500px 0 0 3.500px;box-shadow:inset 0 0 0 1px #247d84;"></div>
<div class="hbd" style="left:174.95px;top:728.10px;width:1.00px;height:15.30px;"></div>
<div class="hb" style="left:202.00px;top:727.10px;width:40.70px;height:17.30px;"></div>
<div class="hbd" style="left:221.85px;top:728.10px;width:1.00px;height:15.30px;"></div>
<div style="left:254.20px;top:729.80px;width:100.70px;height:11.90px;border-radius:6px;background:#363837;"></div>
<div style="left:293.70px;top:726.65px;width:18.20px;height:18.20px;border-radius:50%;background:#9f9f9f;box-shadow:inset 0 0 0 1.050px #dedede,0 0.500px 1.500px rgba(0,0,0,.4);"></div>
<svg style="left:363.50px;top:710.35px;" width="32" height="32" viewBox="0 0 32 32"><path d="M8.84 25.50A11.9 11.9 0 1 1 23.16 25.50" stroke="#363636" stroke-width="3.100" fill="none"/><path d="M13.73 4.32A11.9 11.9 0 0 1 15.79 4.10" stroke="#55d06a" stroke-width="3.100" fill="none"/><circle cx="16" cy="16" r="10.500" fill="#8b8b8b"/><path d="M15.77 13.81L14.68 3.47" stroke="#3a3a3a" stroke-width="1.100"/></svg>
<div style="left:59.10px;top:829.50px;width:346.20px;height:1.10px;background:#4d4d4d;"></div>
<svg style="left:88.00px;top:780.15px;" width="32" height="32" viewBox="0 0 32 32"><path d="M16 2.800c3.200 0 5.200 2.500 5.200 6 0 2.700-1.200 5.200-2.700 6.400v2c0 .8.600 1.200 1.700 1.600l5 1.800c.9.400 1.300 1 1.300 2v4.800H3.200v-4.600c0-1.100.5-1.800 1.500-2.200l6.900-2.500c1-.4 1.700-.8 1.700-1.700v-1.200c-1.500-1.200-2.600-3.700-2.600-6.400 0-3.500 2.100-6 5.300-6z" fill="#2ecc40"/>
<rect x="23.300" y="15.800" width="5" height="8.400" rx="2.500" fill="#2ecc40" stroke="#636363" stroke-width="1"/><path d="M24.300 18.200h3M24.300 20.200h3" stroke="#636363" stroke-width="0.700"/><path d="M22.300 23.600c0 2.400 1.500 3.800 3.500 3.800s3.500-1.400 3.500-3.800M25.800 27.400v2" stroke="#2ecc40" stroke-width="1" fill="none"/></svg>
<div style="left:128.10px;top:797.10px;width:20.80px;height:17.30px;background:#3770b6;border-radius:3.500px;box-shadow:inset 0 0 0 1px #25528f;"></div>
<svg style="left:132.50px;top:799.75px;" width="12" height="12" viewBox="0 0 12 12"><path d="M3.500 3.100A4.600 4.600 0 1 0 8.500 3.100" stroke="#d3e7ff" stroke-width="1.100" fill="none" stroke-linecap="round"/><path d="M6 0.900v5.200" stroke="#d3e7ff" stroke-width="1.100" stroke-linecap="round"/></svg>
<div class="hb" style="left:155.00px;top:797.10px;width:40.90px;height:17.30px;"></div>
<div style="left:155.00px;top:797.10px;width:20.45px;height:17.30px;background:#2b979e;border-radius:3.500px 0 0 3.500px;box-shadow:inset 0 0 0 1px #247d84;"></div>
<div class="hbd" style="left:174.95px;top:798.10px;width:1.00px;height:15.30px;"></div>
<div class="hb" style="left:202.00px;top:797.10px;width:20.70px;height:17.30px;"></div>
<div style="left:254.20px;top:799.80px;width:100.70px;height:11.90px;border-radius:6px;background:#363837;"></div>
<div style="left:308.50px;top:796.65px;width:18.20px;height:18.20px;border-radius:50%;background:#9f9f9f;box-shadow:inset 0 0 0 1.050px #dedede,0 0.500px 1.500px rgba(0,0,0,.4);"></div>
<svg style="left:363.50px;top:780.35px;" width="32" height="32" viewBox="0 0 32 32"><path d="M8.84 25.50A11.9 11.9 0 1 1 23.16 25.50" stroke="#363636" stroke-width="3.100" fill="none"/><circle cx="16" cy="16" r="10.500" fill="#8b8b8b"/><path d="M16.00 13.80L16.00 3.40" stroke="#3a3a3a" stroke-width="1.100"/></svg>
<div style="left:59.10px;top:909.60px;width:346.20px;height:1.10px;background:#4d4d4d;"></div>
<svg style="left:87.70px;top:856.35px;" width="32" height="32" viewBox="0 0 32 32"><path d="M16.900 6.500v21.500" stroke="#4a4a4a" stroke-width="0.700"/><path d="M16.300 6.500v21.500" stroke="#e6e6e6" stroke-width="0.800"/><path d="M14.200 6l4.200-3.600" stroke="#2b2b2b" stroke-width="2.100" stroke-linecap="round"/><path d="M15.400 4.200l2.800-2.400" stroke="#c8c8c8" stroke-width="0.600" stroke-linecap="round"/>
<ellipse cx="16.500" cy="28.600" rx="4.300" ry="1.900" fill="#e6e6e6"/><ellipse cx="16.500" cy="29.300" rx="4.300" ry="1.500" fill="none" stroke="#555" stroke-width="0.500"/><ellipse cx="16.500" cy="28.200" rx="2" ry="0.700" fill="#9a9a9a"/></svg>
<div style="left:128.10px;top:872.10px;width:20.80px;height:17.30px;background:#3770b6;border-radius:3.500px;box-shadow:inset 0 0 0 1px #25528f;"></div>
<svg style="left:132.50px;top:874.75px;" width="12" height="12" viewBox="0 0 12 12"><path d="M3.500 3.100A4.600 4.600 0 1 0 8.500 3.100" stroke="#d3e7ff" stroke-width="1.100" fill="none" stroke-linecap="round"/><path d="M6 0.900v5.200" stroke="#d3e7ff" stroke-width="1.100" stroke-linecap="round"/></svg>
<div class="hb" style="left:155.00px;top:872.10px;width:40.90px;height:17.30px;"></div>
<div style="left:155.00px;top:872.10px;width:20.45px;height:17.30px;background:#2b979e;border-radius:3.500px 0 0 3.500px;box-shadow:inset 0 0 0 1px #247d84;"></div>
<div class="hbd" style="left:174.95px;top:873.10px;width:1.00px;height:15.30px;"></div>
<div class="hb" style="left:202.00px;top:872.10px;width:40.70px;height:17.30px;"></div>
<div class="hbd" style="left:221.85px;top:873.10px;width:1.00px;height:15.30px;"></div>
<div style="left:254.20px;top:874.80px;width:100.70px;height:11.90px;border-radius:6px;background:#363837;"></div>
<div style="left:291.60px;top:871.65px;width:18.20px;height:18.20px;border-radius:50%;background:#9f9f9f;box-shadow:inset 0 0 0 1.050px #dedede,0 0.500px 1.500px rgba(0,0,0,.4);"></div>
<svg style="left:363.50px;top:855.35px;" width="32" height="32" viewBox="0 0 32 32"><path d="M8.84 25.50A11.9 11.9 0 1 1 23.16 25.50" stroke="#363636" stroke-width="3.100" fill="none"/><circle cx="16" cy="16" r="10.500" fill="#8b8b8b"/><path d="M16.00 13.80L16.00 3.40" stroke="#3a3a3a" stroke-width="1.100"/></svg>
<div style="left:59.10px;top:989.70px;width:346.20px;height:1.10px;background:#4d4d4d;"></div>
<svg style="left:87.70px;top:936.45px;" width="32" height="32" viewBox="0 0 32 32"><path d="M16.900 6.500v21.500" stroke="#4a4a4a" stroke-width="0.700"/><path d="M16.300 6.500v21.500" stroke="#e6e6e6" stroke-width="0.800"/><path d="M14.200 6l4.200-3.600" stroke="#2b2b2b" stroke-width="2.100" stroke-linecap="round"/><path d="M15.400 4.200l2.800-2.400" stroke="#c8c8c8" stroke-width="0.600" stroke-linecap="round"/>
<ellipse cx="16.500" cy="28.600" rx="4.300" ry="1.900" fill="#e6e6e6"/><ellipse cx="16.500" cy="29.300" rx="4.300" ry="1.500" fill="none" stroke="#555" stroke-width="0.500"/><ellipse cx="16.500" cy="28.200" rx="2" ry="0.700" fill="#9a9a9a"/></svg>
<div style="left:128.10px;top:952.20px;width:20.80px;height:17.30px;background:#3770b6;border-radius:3.500px;box-shadow:inset 0 0 0 1px #25528f;"></div>
<svg style="left:132.50px;top:954.85px;" width="12" height="12" viewBox="0 0 12 12"><path d="M3.500 3.100A4.600 4.600 0 1 0 8.500 3.100" stroke="#d3e7ff" stroke-width="1.100" fill="none" stroke-linecap="round"/><path d="M6 0.900v5.200" stroke="#d3e7ff" stroke-width="1.100" stroke-linecap="round"/></svg>
<div class="hb" style="left:155.00px;top:952.20px;width:40.90px;height:17.30px;"></div>
<div class="hbd" style="left:174.95px;top:953.20px;width:1.00px;height:15.30px;"></div>
<div class="hb" style="left:202.00px;top:952.20px;width:40.70px;height:17.30px;"></div>
<div class="hbd" style="left:221.85px;top:953.20px;width:1.00px;height:15.30px;"></div>
<div style="left:254.20px;top:954.90px;width:100.70px;height:11.90px;border-radius:6px;background:#363837;"></div>
<div style="left:312.70px;top:951.75px;width:18.20px;height:18.20px;border-radius:50%;background:#9f9f9f;box-shadow:inset 0 0 0 1.050px #dedede,0 0.500px 1.500px rgba(0,0,0,.4);"></div>
<svg style="left:363.50px;top:935.45px;" width="32" height="32" viewBox="0 0 32 32"><path d="M8.84 25.50A11.9 11.9 0 1 1 23.16 25.50" stroke="#363636" stroke-width="3.100" fill="none"/><path d="M16.00 4.10A11.9 11.9 0 0 1 20.46 4.97" stroke="#55d06a" stroke-width="3.100" fill="none"/><circle cx="16" cy="16" r="10.500" fill="#8b8b8b"/><path d="M16.82 13.96L20.72 4.32" stroke="#3a3a3a" stroke-width="1.100"/></svg>
<div style="left:59.10px;top:1064.50px;width:346.20px;height:1.10px;background:#4d4d4d;"></div>
<svg style="left:88.00px;top:1012.70px;" width="32" height="32" viewBox="0 0 32 32"><path d="M12 18.500L29.500 2.800" stroke="#2a2a2a" stroke-width="1.900" stroke-linecap="round"/><path d="M28.600 1.600l2.600 1.600-1.600 2-2.200-1.500z" fill="#1a1a1a"/>
<path d="M3.200 20.200c-1.400 1.600-1.600 3.400-.8 5.600.8 2.400 2 4.200 4.600 4.600 2.400.4 4.400-.8 5.800-2.800 1.200-1.800 2.400-3 2.400-5 0-1.600-.4-3.400.4-5.600-1.600.8-2.600 1.600-3.400 1.200-.8-.4-.6-1.800-1-3.400-1.200 1-1.600 2.600-3.200 3.400-1.600.8-3.600.6-4.800 2z" fill="#b32428"/>
<path d="M6 24.500l5-4.500 1.500 1.500-5 4.500z" fill="#1e1e1e"/><circle cx="5.800" cy="27" r="0.800" fill="#e8e8e8"/><circle cx="8.600" cy="28.200" r="0.800" fill="#e8e8e8"/></svg>
<div style="left:128.10px;top:1029.65px;width:20.80px;height:17.30px;background:#3770b6;border-radius:3.500px;box-shadow:inset 0 0 0 1px #25528f;"></div>
<svg style="left:132.50px;top:1032.30px;" width="12" height="12" viewBox="0 0 12 12"><path d="M3.500 3.100A4.600 4.600 0 1 0 8.500 3.100" stroke="#d3e7ff" stroke-width="1.100" fill="none" stroke-linecap="round"/><path d="M6 0.900v5.200" stroke="#d3e7ff" stroke-width="1.100" stroke-linecap="round"/></svg>
<div class="hb" style="left:155.00px;top:1029.65px;width:40.90px;height:17.30px;"></div>
<div class="hbd" style="left:174.95px;top:1030.65px;width:1.00px;height:15.30px;"></div>
<div class="hb" style="left:202.00px;top:1029.65px;width:40.70px;height:17.30px;"></div>
<div class="hbd" style="left:221.85px;top:1030.65px;width:1.00px;height:15.30px;"></div>
<div style="left:254.20px;top:1032.35px;width:100.70px;height:11.90px;border-radius:6px;background:#363837;"></div>
<div style="left:305.50px;top:1029.20px;width:18.20px;height:18.20px;border-radius:50%;background:#9f9f9f;box-shadow:inset 0 0 0 1.050px #dedede,0 0.500px 1.500px rgba(0,0,0,.4);"></div>
<svg style="left:363.50px;top:1012.90px;" width="32" height="32" viewBox="0 0 32 32"><path d="M8.84 25.50A11.9 11.9 0 1 1 23.16 25.50" stroke="#363636" stroke-width="3.100" fill="none"/><path d="M16.00 4.10A11.9 11.9 0 0 1 27.49 12.92" stroke="#55d06a" stroke-width="3.100" fill="none"/><circle cx="16" cy="16" r="10.500" fill="#8b8b8b"/><path d="M18.13 15.43L28.17 12.74" stroke="#3a3a3a" stroke-width="1.100"/></svg>
<div style="left:59.10px;top:1117.80px;width:346.20px;height:1.10px;background:#4d4d4d;"></div>
<svg style="left:88.00px;top:1076.75px;" width="32" height="32" viewBox="0 0 32 32"><path d="M14.200 18.800L29.400 2.800" stroke="#c58a2e" stroke-width="1.500" stroke-linecap="round"/><path d="M27.400 3.600l2.600-2.900 1.300 1.100-2.400 3.200z" fill="#e2b456"/>
<ellipse cx="8.300" cy="25.300" rx="7.700" ry="4.700" transform="rotate(-38 8.300 25.300)" fill="#d8c86e"/><ellipse cx="6.600" cy="26.600" rx="4.600" ry="3" transform="rotate(-38 6.600 26.600)" fill="#e4d684"/>
<path d="M9.400 15.700c1-.9 2.200-1.500 2.800-1.100.5.500-.3 1.700-.2 2.900.2 1.500 1.700 2.100 2.900 3.100.9.800 1.300 1.500.7 2.100-.8.800-2.300.3-3.500.6-1 .3-1.700 1.200-2.500.7-.9-.6-.3-2.400-.4-3.900-.1-1.700-.8-3.500.2-4.400z" fill="#241f18"/></svg>
<div style="left:128.10px;top:1093.70px;width:20.80px;height:17.30px;background:#3770b6;border-radius:3.500px;box-shadow:inset 0 0 0 1px #25528f;"></div>
<svg style="left:132.50px;top:1096.35px;" width="12" height="12" viewBox="0 0 12 12"><path d="M3.500 3.100A4.600 4.600 0 1 0 8.500 3.100" stroke="#d3e7ff" stroke-width="1.100" fill="none" stroke-linecap="round"/><path d="M6 0.900v5.200" stroke="#d3e7ff" stroke-width="1.100" stroke-linecap="round"/></svg>
<div class="hb" style="left:155.00px;top:1093.70px;width:40.90px;height:17.30px;"></div>
<div style="left:155.00px;top:1093.70px;width:20.45px;height:17.30px;background:#2b979e;border-radius:3.500px 0 0 3.500px;box-shadow:inset 0 0 0 1px #247d84;"></div>
<div class="hbd" style="left:174.95px;top:1094.70px;width:1.00px;height:15.30px;"></div>
<div class="hb" style="left:202.00px;top:1093.70px;width:20.70px;height:17.30px;"></div>
<div style="left:254.20px;top:1096.40px;width:100.70px;height:11.90px;border-radius:6px;background:#363837;"></div>
<div style="left:308.50px;top:1093.25px;width:18.20px;height:18.20px;border-radius:50%;background:#9f9f9f;box-shadow:inset 0 0 0 1.050px #dedede,0 0.500px 1.500px rgba(0,0,0,.4);"></div>
<svg style="left:363.50px;top:1076.95px;" width="32" height="32" viewBox="0 0 32 32"><path d="M8.84 25.50A11.9 11.9 0 1 1 23.16 25.50" stroke="#363636" stroke-width="3.100" fill="none"/><path d="M10.05 26.31A11.9 11.9 0 0 1 16.00 4.10" stroke="#55d06a" stroke-width="3.100" fill="none"/><circle cx="16" cy="16" r="10.500" fill="#8b8b8b"/><path d="M14.90 17.91L9.70 26.91" stroke="#3a3a3a" stroke-width="1.100"/></svg>
<div style="left:59.10px;top:1163.80px;width:346.20px;height:1.10px;background:#4d4d4d;"></div>
<svg style="left:87.50px;top:1125.60px;" width="32" height="32" viewBox="0 0 32 32"><ellipse cx="8.500" cy="7.200" rx="5.500" ry="1.300" fill="#c9b06a"/><ellipse cx="24.500" cy="7" rx="5.500" ry="1.300" fill="#c9b06a"/><ellipse cx="15.500" cy="5" rx="4" ry="1" fill="#c9b06a"/>
<path d="M8.500 7.200v20M24.500 7v20M5.500 27l3-4 3 4M21.500 27l3-4 3 4" stroke="#9a9a9a" stroke-width="0.800" fill="none"/>
<rect x="9.300" y="11" width="5.400" height="4.400" fill="#e6e6e6" stroke="#777" stroke-width="0.500"/><rect x="17" y="11" width="5.400" height="4.400" fill="#e6e6e6" stroke="#777" stroke-width="0.500"/>
<rect x="2.500" y="16.200" width="6" height="7" fill="#dcdcdc" stroke="#777" stroke-width="0.500"/><rect x="23.500" y="15.500" width="6" height="8.500" fill="#dcdcdc" stroke="#777" stroke-width="0.500"/>
<path d="M11.500 16v10M13.500 16v10M19 16v10M21 16v10" stroke="#c8c8c8" stroke-width="0.900"/><circle cx="16" cy="22.800" r="4.400" fill="#fbfbfb" stroke="#8a8a8a" stroke-width="0.700"/></svg>
<div style="left:128.10px;top:1133.05px;width:20.80px;height:17.30px;background:#3770b6;border-radius:3.500px;box-shadow:inset 0 0 0 1px #25528f;"></div>
<svg style="left:132.50px;top:1135.70px;" width="12" height="12" viewBox="0 0 12 12"><path d="M3.500 3.100A4.600 4.600 0 1 0 8.500 3.100" stroke="#d3e7ff" stroke-width="1.100" fill="none" stroke-linecap="round"/><path d="M6 0.900v5.200" stroke="#d3e7ff" stroke-width="1.100" stroke-linecap="round"/></svg>
<div class="hb" style="left:155.00px;top:1133.05px;width:40.90px;height:17.30px;"></div>
<div style="left:155.00px;top:1133.05px;width:20.45px;height:17.30px;background:#2b979e;border-radius:3.500px 0 0 3.500px;box-shadow:inset 0 0 0 1px #247d84;"></div>
<div class="hbd" style="left:174.95px;top:1134.05px;width:1.00px;height:15.30px;"></div>
<div style="left:385.90px;top:1136.80px;width:9.00px;height:9.00px;border-radius:50%;background:#3d3d3d;"></div>
<div style="left:79.00px;top:242.80px;width:1.00px;height:921.60px;background:rgba(0,0,0,.16);"></div>
<svg class="tx" style="left:0;top:0;" width="2672" height="1465"><defs><clipPath id="tclip"><rect x="406.2" y="242" width="2206.4" height="1146"/></clipPath></defs><text x="65.98" y="271.55" font-size="12.3" fill="#fff" stroke="#fff" stroke-width="0.35">1</text><text x="160.34" y="270.20" font-size="12.2" fill="#fff">M</text><text x="181.41" y="270.20" font-size="12.2" fill="#fff">S</text><text x="207.99" y="270.20" font-size="12.2" fill="#fff">R</text><text x="251.30" y="270.85" font-size="13.2" fill="#fff" letter-spacing="-0.336" stroke="#fff" stroke-width="0.3">Bass</text><text x="65.98" y="317.20" font-size="12.3" fill="#fff" stroke="#fff" stroke-width="0.35">2</text><text x="160.34" y="315.85" font-size="12.2" fill="#fff">M</text><text x="181.41" y="315.85" font-size="12.2" fill="#fff">S</text><text x="207.99" y="315.85" font-size="12.2" fill="#fff">R</text><text x="251.30" y="316.50" font-size="13.2" fill="#fff" letter-spacing="0.078" stroke="#fff" stroke-width="0.3">Electric Piano</text><text x="65.98" y="363.05" font-size="12.3" fill="#fff" stroke="#fff" stroke-width="0.35">3</text><text x="160.34" y="361.70" font-size="12.2" fill="#fff">M</text><text x="181.41" y="361.70" font-size="12.2" fill="#fff">S</text><text x="207.99" y="361.70" font-size="12.2" fill="#fff">R</text><text x="251.30" y="362.35" font-size="13.2" fill="#fff" letter-spacing="0.102" stroke="#fff" stroke-width="0.3">Clarinets</text><text x="65.98" y="408.95" font-size="12.3" fill="#fff" stroke="#fff" stroke-width="0.35">4</text><text x="160.34" y="407.60" font-size="12.2" fill="#fff">M</text><text x="181.41" y="407.60" font-size="12.2" fill="#fff">S</text><text x="207.99" y="407.60" font-size="12.2" fill="#fff">R</text><text x="251.30" y="408.25" font-size="13.2" fill="#fff" letter-spacing="0.029" stroke="#fff" stroke-width="0.3">Lead Guitar</text><text x="65.98" y="454.95" font-size="12.3" fill="#fff" stroke="#fff" stroke-width="0.35">5</text><text x="160.34" y="453.60" font-size="12.2" fill="#fff">M</text><text x="181.41" y="453.60" font-size="12.2" fill="#fff">S</text><text x="207.99" y="453.60" font-size="12.2" fill="#fff">R</text><text x="251.30" y="454.25" font-size="13.2" fill="#fff" letter-spacing="0.033" stroke="#fff" stroke-width="0.3">Lead Guitar Solo</text><text x="65.98" y="501.05" font-size="12.3" fill="#fff" stroke="#fff" stroke-width="0.35">6</text><text x="160.34" y="499.70" font-size="12.2" fill="#fff">M</text><text x="181.41" y="499.70" font-size="12.2" fill="#fff">S</text><text x="207.99" y="499.70" font-size="12.2" fill="#fff">R</text><text x="251.30" y="500.35" font-size="13.2" fill="#fff" letter-spacing="0.067" stroke="#fff" stroke-width="0.3">Drums</text><text x="65.98" y="547.25" font-size="12.3" fill="#fff" stroke="#fff" stroke-width="0.35">7</text><text x="160.34" y="545.90" font-size="12.2" fill="#fff">M</text><text x="181.41" y="545.90" font-size="12.2" fill="#fff">S</text><text x="207.99" y="545.90" font-size="12.2" fill="#fff">R</text><text x="251.30" y="546.55" font-size="13.2" fill="#fff" letter-spacing="0.062" stroke="#fff" stroke-width="0.3">Count In</text><text x="65.98" y="633.25" font-size="12.3" fill="#fff" stroke="#fff" stroke-width="0.35">8</text><text x="128.40" y="622.10" font-size="13.2" fill="#fff" letter-spacing="-0.134" stroke="#fff" stroke-width="0.3">Lynn</text><text x="160.34" y="642.20" font-size="12.2" fill="#fff">M</text><text x="181.41" y="642.20" font-size="12.2" fill="#fff">S</text><text x="207.97" y="642.20" font-size="12.2" fill="#e5524d">R</text><text x="230.63" y="642.20" font-size="12.2" fill="#fff">I</text><text x="368.28" y="646.05" font-size="6.6" fill="#d8d8d8" font-weight="bold">L</text><text x="384.52" y="646.05" font-size="6.6" fill="#d8d8d8" font-weight="bold">R</text><text x="65.98" y="731.15" font-size="12.3" fill="#fff" stroke="#fff" stroke-width="0.35">9</text><text x="128.40" y="720.00" font-size="13.2" fill="#fff" letter-spacing="0.043" stroke="#fff" stroke-width="0.3">Lynn Best</text><text x="160.34" y="740.10" font-size="12.2" fill="#fff">M</text><text x="181.41" y="740.10" font-size="12.2" fill="#fff">S</text><text x="207.97" y="740.10" font-size="12.2" fill="#fff">R</text><text x="230.63" y="740.10" font-size="12.2" fill="#fff">I</text><text x="368.28" y="743.95" font-size="6.6" fill="#b4b4b4" font-weight="bold">L</text><text x="384.52" y="743.95" font-size="6.6" fill="#b4b4b4" font-weight="bold">R</text><text x="62.36" y="801.15" font-size="12.3" fill="#fff" stroke="#fff" stroke-width="0.35">10</text><text x="128.40" y="790.00" font-size="13.2" fill="#fff" letter-spacing="0.208" stroke="#fff" stroke-width="0.3">Melody</text><text x="160.34" y="810.10" font-size="12.2" fill="#fff">M</text><text x="181.41" y="810.10" font-size="12.2" fill="#fff">S</text><text x="207.99" y="810.10" font-size="12.2" fill="#fff">R</text><text x="368.28" y="813.95" font-size="6.6" fill="#b4b4b4" font-weight="bold">L</text><text x="384.52" y="813.95" font-size="6.6" fill="#b4b4b4" font-weight="bold">R</text><text x="62.82" y="876.15" font-size="12.3" fill="#fff" stroke="#fff" stroke-width="0.35">11</text><text x="128.40" y="865.00" font-size="13.2" fill="#fff" letter-spacing="0.068" stroke="#fff" stroke-width="0.3">Doug Vocal</text><text x="160.34" y="885.10" font-size="12.2" fill="#fff">M</text><text x="181.41" y="885.10" font-size="12.2" fill="#fff">S</text><text x="207.97" y="885.10" font-size="12.2" fill="#fff">R</text><text x="230.63" y="885.10" font-size="12.2" fill="#fff">I</text><text x="368.28" y="888.95" font-size="6.6" fill="#b4b4b4" font-weight="bold">L</text><text x="384.52" y="888.95" font-size="6.6" fill="#b4b4b4" font-weight="bold">R</text><text x="62.36" y="956.25" font-size="12.3" fill="#fff" stroke="#fff" stroke-width="0.35">12</text><text x="128.40" y="945.10" font-size="13.2" fill="#fff" letter-spacing="0.107" stroke="#fff" stroke-width="0.3">Doug Best</text><text x="160.34" y="965.20" font-size="12.2" fill="#fff">M</text><text x="181.41" y="965.20" font-size="12.2" fill="#fff">S</text><text x="207.97" y="965.20" font-size="12.2" fill="#fff">R</text><text x="230.63" y="965.20" font-size="12.2" fill="#fff">I</text><text x="368.28" y="969.05" font-size="6.6" fill="#b4b4b4" font-weight="bold">L</text><text x="384.52" y="969.05" font-size="6.6" fill="#b4b4b4" font-weight="bold">R</text><text x="62.36" y="1033.70" font-size="12.3" fill="#fff" stroke="#fff" stroke-width="0.35">13</text><text x="128.40" y="1022.55" font-size="13.2" fill="#fff" letter-spacing="0.093" stroke="#fff" stroke-width="0.3">Doug Guitar</text><text x="160.34" y="1042.65" font-size="12.2" fill="#fff">M</text><text x="181.41" y="1042.65" font-size="12.2" fill="#fff">S</text><text x="207.97" y="1042.65" font-size="12.2" fill="#fff">R</text><text x="230.63" y="1042.65" font-size="12.2" fill="#fff">I</text><text x="368.28" y="1046.50" font-size="6.6" fill="#b4b4b4" font-weight="bold">L</text><text x="384.52" y="1046.50" font-size="6.6" fill="#b4b4b4" font-weight="bold">R</text><text x="62.36" y="1097.75" font-size="12.3" fill="#fff" stroke="#fff" stroke-width="0.35">14</text><text x="128.40" y="1086.60" font-size="13.2" fill="#fff" letter-spacing="0.058" stroke="#fff" stroke-width="0.3">Lead Guitar harmony</text><text x="160.34" y="1106.70" font-size="12.2" fill="#fff">M</text><text x="181.41" y="1106.70" font-size="12.2" fill="#fff">S</text><text x="207.99" y="1106.70" font-size="12.2" fill="#fff">R</text><text x="368.28" y="1110.55" font-size="6.6" fill="#b4b4b4" font-weight="bold">L</text><text x="384.52" y="1110.55" font-size="6.6" fill="#b4b4b4" font-weight="bold">R</text><text x="62.36" y="1147.40" font-size="12.3" fill="#fff" stroke="#fff" stroke-width="0.35">15</text><text x="160.34" y="1146.05" font-size="12.2" fill="#fff">M</text><text x="181.41" y="1146.05" font-size="12.2" fill="#fff">S</text><text x="251.30" y="1146.70" font-size="13.2" fill="#fff" letter-spacing="0.159" stroke="#fff" stroke-width="0.3">Bluebird (Darcy)</text></svg>
<div style="left:419.20px;top:569.10px;width:49.80px;height:12.90px;background:#383838;border-radius:3.500px 0 0 3.500px;"></div>
<div style="left:435.00px;top:569.10px;width:1.00px;height:12.90px;background:#4a4a4a;"></div>
<div style="left:450.20px;top:569.10px;width:1.00px;height:12.90px;background:#4a4a4a;"></div>
<svg style="left:422.80px;top:571.70px;" width="9" height="8" viewBox="0 0 9 8"><path d="M0.400 0.200v7.400L8 3.900z" fill="#fff"/></svg>
<svg style="left:453.60px;top:572.30px;" width="13" height="7" viewBox="0 0 13 7"><rect x="0.200" y="3.800" width="3.700" height="2.800" fill="#fff"/><rect x="4.400" y="0.300" width="3.700" height="2.800" fill="#fff"/><rect x="8.600" y="3.800" width="3.700" height="2.800" fill="#fff"/></svg>
<div style="left:472.80px;top:571.10px;width:9.20px;height:9.20px;border-radius:50%;background:#7db9ff;"></div>
<svg style="left:550.50px;top:569.70px;" width="12" height="12" viewBox="0 0 12 12"><circle cx="6" cy="6" r="4.100" fill="none" stroke="#c0c0c0" stroke-width="1.050"/></svg>
<svg style="left:480.60px;top:695.40px;" width="12" height="12" viewBox="0 0 12 12"><circle cx="6" cy="6" r="4.100" fill="none" stroke="#8ebcf5" stroke-width="1.050"/></svg>
<div style="left:419.20px;top:834.80px;width:49.80px;height:12.90px;background:#383838;border-radius:3.500px 0 0 3.500px;"></div>
<div style="left:435.00px;top:834.80px;width:1.00px;height:12.90px;background:#4a4a4a;"></div>
<div style="left:450.20px;top:834.80px;width:1.00px;height:12.90px;background:#4a4a4a;"></div>
<svg style="left:422.80px;top:837.40px;" width="9" height="8" viewBox="0 0 9 8"><path d="M0.400 0.200v7.400L8 3.900z" fill="#fff"/></svg>
<svg style="left:453.60px;top:838.00px;" width="13" height="7" viewBox="0 0 13 7"><rect x="0.200" y="3.800" width="3.700" height="2.800" fill="#fff"/><rect x="4.400" y="0.300" width="3.700" height="2.800" fill="#fff"/><rect x="8.600" y="3.800" width="3.700" height="2.800" fill="#fff"/></svg>
<svg style="left:632.40px;top:835.40px;" width="12" height="12" viewBox="0 0 12 12"><circle cx="6" cy="6" r="4.100" fill="none" stroke="#86b4ee" stroke-width="1.050"/></svg>
<svg style="left:523.50px;top:915.50px;" width="12" height="12" viewBox="0 0 12 12"><circle cx="6" cy="6" r="4.100" fill="none" stroke="#e3efff" stroke-width="1.050"/></svg>
<div style="left:419.20px;top:995.00px;width:49.80px;height:12.90px;background:#2b5288;border-radius:3.500px 0 0 3.500px;"></div>
<div style="left:435.00px;top:995.00px;width:1.00px;height:12.90px;background:#3f6db0;"></div>
<div style="left:450.20px;top:995.00px;width:1.00px;height:12.90px;background:#3f6db0;"></div>
<svg style="left:422.80px;top:997.60px;" width="9" height="8" viewBox="0 0 9 8"><path d="M0.400 0.200v7.400L8 3.900z" fill="#fff"/></svg>
<svg style="left:453.60px;top:998.20px;" width="13" height="7" viewBox="0 0 13 7"><rect x="0.200" y="3.800" width="3.700" height="2.800" fill="#fff"/><rect x="4.400" y="0.300" width="3.700" height="2.800" fill="#fff"/><rect x="8.600" y="3.800" width="3.700" height="2.800" fill="#fff"/></svg>
<svg style="left:574.50px;top:995.60px;" width="12" height="12" viewBox="0 0 12 12"><circle cx="6" cy="6" r="4.100" fill="none" stroke="#e3efff" stroke-width="1.050"/></svg>
<div style="left:1443.20px;top:569.10px;width:49.80px;height:12.90px;background:#383838;border-radius:3.500px 0 0 3.500px;"></div>
<div style="left:1459.00px;top:569.10px;width:1.00px;height:12.90px;background:#4a4a4a;"></div>
<div style="left:1474.20px;top:569.10px;width:1.00px;height:12.90px;background:#4a4a4a;"></div>
<svg style="left:1446.80px;top:571.70px;" width="9" height="8" viewBox="0 0 9 8"><path d="M0.400 0.200v7.400L8 3.900z" fill="#fff"/></svg>
<svg style="left:1477.60px;top:572.30px;" width="13" height="7" viewBox="0 0 13 7"><rect x="0.200" y="3.800" width="3.700" height="2.800" fill="#fff"/><rect x="4.400" y="0.300" width="3.700" height="2.800" fill="#fff"/><rect x="8.600" y="3.800" width="3.700" height="2.800" fill="#fff"/></svg>
<div style="left:1496.80px;top:571.10px;width:9.20px;height:9.20px;border-radius:50%;background:#7db9ff;"></div>
<svg style="left:1574.50px;top:569.70px;" width="12" height="12" viewBox="0 0 12 12"><circle cx="6" cy="6" r="4.100" fill="none" stroke="#c0c0c0" stroke-width="1.050"/></svg>
<svg style="left:1504.60px;top:695.40px;" width="12" height="12" viewBox="0 0 12 12"><circle cx="6" cy="6" r="4.100" fill="none" stroke="#8ebcf5" stroke-width="1.050"/></svg>
<div style="left:1443.20px;top:834.80px;width:49.80px;height:12.90px;background:#383838;border-radius:3.500px 0 0 3.500px;"></div>
<div style="left:1459.00px;top:834.80px;width:1.00px;height:12.90px;background:#4a4a4a;"></div>
<div style="left:1474.20px;top:834.80px;width:1.00px;height:12.90px;background:#4a4a4a;"></div>
<svg style="left:1446.80px;top:837.40px;" width="9" height="8" viewBox="0 0 9 8"><path d="M0.400 0.200v7.400L8 3.900z" fill="#fff"/></svg>
<svg style="left:1477.60px;top:838.00px;" width="13" height="7" viewBox="0 0 13 7"><rect x="0.200" y="3.800" width="3.700" height="2.800" fill="#fff"/><rect x="4.400" y="0.300" width="3.700" height="2.800" fill="#fff"/><rect x="8.600" y="3.800" width="3.700" height="2.800" fill="#fff"/></svg>
<svg style="left:1656.40px;top:835.40px;" width="12" height="12" viewBox="0 0 12 12"><circle cx="6" cy="6" r="4.100" fill="none" stroke="#86b4ee" stroke-width="1.050"/></svg>
<svg style="left:1547.50px;top:915.50px;" width="12" height="12" viewBox="0 0 12 12"><circle cx="6" cy="6" r="4.100" fill="none" stroke="#e3efff" stroke-width="1.050"/></svg>
<div style="left:1443.20px;top:995.00px;width:49.80px;height:12.90px;background:#2b5288;border-radius:3.500px 0 0 3.500px;"></div>
<div style="left:1459.00px;top:995.00px;width:1.00px;height:12.90px;background:#3f6db0;"></div>
<div style="left:1474.20px;top:995.00px;width:1.00px;height:12.90px;background:#3f6db0;"></div>
<svg style="left:1446.80px;top:997.60px;" width="9" height="8" viewBox="0 0 9 8"><path d="M0.400 0.200v7.400L8 3.900z" fill="#fff"/></svg>
<svg style="left:1477.60px;top:998.20px;" width="13" height="7" viewBox="0 0 13 7"><rect x="0.200" y="3.800" width="3.700" height="2.800" fill="#fff"/><rect x="4.400" y="0.300" width="3.700" height="2.800" fill="#fff"/><rect x="8.600" y="3.800" width="3.700" height="2.800" fill="#fff"/></svg>
<svg style="left:1598.50px;top:995.60px;" width="12" height="12" viewBox="0 0 12 12"><circle cx="6" cy="6" r="4.100" fill="none" stroke="#e3efff" stroke-width="1.050"/></svg>
<div style="left:2467.20px;top:569.10px;width:49.80px;height:12.90px;background:#383838;border-radius:3.500px 0 0 3.500px;"></div>
<div style="left:2483.00px;top:569.10px;width:1.00px;height:12.90px;background:#4a4a4a;"></div>
<div style="left:2498.20px;top:569.10px;width:1.00px;height:12.90px;background:#4a4a4a;"></div>
<svg style="left:2470.80px;top:571.70px;" width="9" height="8" viewBox="0 0 9 8"><path d="M0.400 0.200v7.400L8 3.900z" fill="#fff"/></svg>
<svg style="left:2501.60px;top:572.30px;" width="13" height="7" viewBox="0 0 13 7"><rect x="0.200" y="3.800" width="3.700" height="2.800" fill="#fff"/><rect x="4.400" y="0.300" width="3.700" height="2.800" fill="#fff"/><rect x="8.600" y="3.800" width="3.700" height="2.800" fill="#fff"/></svg>
<div style="left:2520.80px;top:571.10px;width:9.20px;height:9.20px;border-radius:50%;background:#7db9ff;"></div>
<svg style="left:2598.50px;top:569.70px;" width="12" height="12" viewBox="0 0 12 12"><circle cx="6" cy="6" r="4.100" fill="none" stroke="#c0c0c0" stroke-width="1.050"/></svg>
<svg style="left:2528.60px;top:695.40px;" width="12" height="12" viewBox="0 0 12 12"><circle cx="6" cy="6" r="4.100" fill="none" stroke="#8ebcf5" stroke-width="1.050"/></svg>
<div style="left:2467.20px;top:834.80px;width:49.80px;height:12.90px;background:#383838;border-radius:3.500px 0 0 3.500px;"></div>
<div style="left:2483.00px;top:834.80px;width:1.00px;height:12.90px;background:#4a4a4a;"></div>
<div style="left:2498.20px;top:834.80px;width:1.00px;height:12.90px;background:#4a4a4a;"></div>
<svg style="left:2470.80px;top:837.40px;" width="9" height="8" viewBox="0 0 9 8"><path d="M0.400 0.200v7.400L8 3.900z" fill="#fff"/></svg>
<svg style="left:2501.60px;top:838.00px;" width="13" height="7" viewBox="0 0 13 7"><rect x="0.200" y="3.800" width="3.700" height="2.800" fill="#fff"/><rect x="4.400" y="0.300" width="3.700" height="2.800" fill="#fff"/><rect x="8.600" y="3.800" width="3.700" height="2.800" fill="#fff"/></svg>
<svg style="left:2571.50px;top:915.50px;" width="12" height="12" viewBox="0 0 12 12"><circle cx="6" cy="6" r="4.100" fill="none" stroke="#e3efff" stroke-width="1.050"/></svg>
<div style="left:2467.20px;top:995.00px;width:49.80px;height:12.90px;background:#2b5288;border-radius:3.500px 0 0 3.500px;"></div>
<div style="left:2483.00px;top:995.00px;width:1.00px;height:12.90px;background:#3f6db0;"></div>
<div style="left:2498.20px;top:995.00px;width:1.00px;height:12.90px;background:#3f6db0;"></div>
<svg style="left:2470.80px;top:997.60px;" width="9" height="8" viewBox="0 0 9 8"><path d="M0.400 0.200v7.400L8 3.900z" fill="#fff"/></svg>
<svg style="left:2501.60px;top:998.20px;" width="13" height="7" viewBox="0 0 13 7"><rect x="0.200" y="3.800" width="3.700" height="2.800" fill="#fff"/><rect x="4.400" y="0.300" width="3.700" height="2.800" fill="#fff"/><rect x="8.600" y="3.800" width="3.700" height="2.800" fill="#fff"/></svg>
<svg class="tx" style="left:0;top:0;" width="2672" height="1465"><defs><clipPath id="tclip"><rect x="406.2" y="242" width="2206.4" height="1146"/></clipPath></defs><g clip-path="url(#tclip)"><text x="421.40" y="256.90" font-size="11" fill="#b9f6c2" letter-spacing="-0.214" stroke="#b9f6c2" stroke-width="0.3">Bass</text></g><g clip-path="url(#tclip)"><text x="1445.40" y="256.90" font-size="11" fill="#b9f6c2" letter-spacing="-0.214" stroke="#b9f6c2" stroke-width="0.3">Bass</text></g><g clip-path="url(#tclip)"><text x="2469.40" y="256.90" font-size="11" fill="#b9f6c2" letter-spacing="-0.214" stroke="#b9f6c2" stroke-width="0.3">Bass</text></g><g clip-path="url(#tclip)"><text x="421.40" y="302.90" font-size="11" fill="#b9f6c2" letter-spacing="0.268" stroke="#b9f6c2" stroke-width="0.3">Electric Piano</text></g><g clip-path="url(#tclip)"><text x="1445.40" y="302.90" font-size="11" fill="#b9f6c2" letter-spacing="0.268" stroke="#b9f6c2" stroke-width="0.3">Electric Piano</text></g><g clip-path="url(#tclip)"><text x="2469.40" y="302.90" font-size="11" fill="#b9f6c2" letter-spacing="0.268" stroke="#b9f6c2" stroke-width="0.3">Electric Piano</text></g><g clip-path="url(#tclip)"><text x="421.40" y="348.70" font-size="11" fill="#b9f6c2" letter-spacing="0.288" stroke="#b9f6c2" stroke-width="0.3">Clarinets</text></g><g clip-path="url(#tclip)"><text x="1445.40" y="348.70" font-size="11" fill="#b9f6c2" letter-spacing="0.288" stroke="#b9f6c2" stroke-width="0.3">Clarinets</text></g><g clip-path="url(#tclip)"><text x="2469.40" y="348.70" font-size="11" fill="#b9f6c2" letter-spacing="0.288" stroke="#b9f6c2" stroke-width="0.3">Clarinets</text></g><g clip-path="url(#tclip)"><text x="421.40" y="394.60" font-size="11" fill="#b9f6c2" letter-spacing="0.192" stroke="#b9f6c2" stroke-width="0.3">Lead Guitar</text></g><g clip-path="url(#tclip)"><text x="1445.40" y="394.60" font-size="11" fill="#b9f6c2" letter-spacing="0.192" stroke="#b9f6c2" stroke-width="0.3">Lead Guitar</text></g><g clip-path="url(#tclip)"><text x="2469.40" y="394.60" font-size="11" fill="#b9f6c2" letter-spacing="0.192" stroke="#b9f6c2" stroke-width="0.3">Lead Guitar</text></g><g clip-path="url(#tclip)"><text x="421.40" y="440.50" font-size="11" fill="#b9f6c2" letter-spacing="0.240" stroke="#b9f6c2" stroke-width="0.3">Lead Guitar Solo</text></g><g clip-path="url(#tclip)"><text x="1445.40" y="440.50" font-size="11" fill="#b9f6c2" letter-spacing="0.240" stroke="#b9f6c2" stroke-width="0.3">Lead Guitar Solo</text></g><g clip-path="url(#tclip)"><text x="2469.40" y="440.50" font-size="11" fill="#b9f6c2" letter-spacing="0.240" stroke="#b9f6c2" stroke-width="0.3">Lead Guitar Solo</text></g><g clip-path="url(#tclip)"><text x="421.40" y="486.60" font-size="11" fill="#b9f6c2" letter-spacing="0.242" stroke="#b9f6c2" stroke-width="0.3">Drums</text></g><g clip-path="url(#tclip)"><text x="1445.40" y="486.60" font-size="11" fill="#b9f6c2" letter-spacing="0.242" stroke="#b9f6c2" stroke-width="0.3">Drums</text></g><g clip-path="url(#tclip)"><text x="2469.40" y="486.60" font-size="11" fill="#b9f6c2" letter-spacing="0.242" stroke="#b9f6c2" stroke-width="0.3">Drums</text></g><g clip-path="url(#tclip)"><text x="421.40" y="532.70" font-size="11" fill="#7fdc8f" letter-spacing="0.227" stroke="#7fdc8f" stroke-width="0.3">Count In</text></g><g clip-path="url(#tclip)"><text x="1445.40" y="532.70" font-size="11" fill="#7fdc8f" letter-spacing="0.227" stroke="#7fdc8f" stroke-width="0.3">Count In</text></g><g clip-path="url(#tclip)"><text x="2469.40" y="532.70" font-size="11" fill="#7fdc8f" letter-spacing="0.227" stroke="#7fdc8f" stroke-width="0.3">Count In</text></g><text x="439.70" y="579.00" font-size="9.6" fill="#fff" stroke="#fff" stroke-width="0.2">A</text><g clip-path="url(#tclip)"><text x="488.60" y="579.00" font-size="11" fill="#b5b5b5" letter-spacing="0.193" stroke="#b5b5b5" stroke-width="0.3">Lynn: Best</text></g><g clip-path="url(#tclip)"><text x="421.40" y="704.70" font-size="11" fill="#8ebcf5" letter-spacing="0.232" stroke="#8ebcf5" stroke-width="0.3">Lynn Best</text></g><g clip-path="url(#tclip)"><text x="421.40" y="774.80" font-size="11" fill="#72d982" letter-spacing="0.357" stroke="#72d982" stroke-width="0.3">Melody</text></g><text x="439.70" y="844.70" font-size="9.6" fill="#fff" stroke="#fff" stroke-width="0.2">B</text><g clip-path="url(#tclip)"><text x="473.40" y="844.70" font-size="11" fill="#86b4ee" letter-spacing="0.316" stroke="#86b4ee" stroke-width="0.3">Doug Vocal: Recording Temp</text></g><g clip-path="url(#tclip)"><text x="421.40" y="924.80" font-size="11" fill="#e3efff" letter-spacing="0.326" stroke="#e3efff" stroke-width="0.3">Doug Vocal - Best</text></g><text x="439.70" y="1004.90" font-size="9.6" fill="#fff" stroke="#fff" stroke-width="0.2">A</text><g clip-path="url(#tclip)"><text x="473.40" y="1004.90" font-size="11" fill="#e3efff" letter-spacing="0.292" stroke="#e3efff" stroke-width="0.3">Doug Guitar: Best</text></g><g clip-path="url(#tclip)"><text x="421.40" y="1079.70" font-size="11" fill="#72d982" letter-spacing="0.287" stroke="#72d982" stroke-width="0.3">Lead Guitar harmony</text></g><text x="1463.70" y="579.00" font-size="9.6" fill="#fff" stroke="#fff" stroke-width="0.2">A</text><g clip-path="url(#tclip)"><text x="1512.60" y="579.00" font-size="11" fill="#b5b5b5" letter-spacing="0.193" stroke="#b5b5b5" stroke-width="0.3">Lynn: Best</text></g><g clip-path="url(#tclip)"><text x="1445.40" y="704.70" font-size="11" fill="#8ebcf5" letter-spacing="0.232" stroke="#8ebcf5" stroke-width="0.3">Lynn Best</text></g><g clip-path="url(#tclip)"><text x="1445.40" y="774.80" font-size="11" fill="#72d982" letter-spacing="0.357" stroke="#72d982" stroke-width="0.3">Melody</text></g><text x="1463.70" y="844.70" font-size="9.6" fill="#fff" stroke="#fff" stroke-width="0.2">B</text><g clip-path="url(#tclip)"><text x="1497.40" y="844.70" font-size="11" fill="#86b4ee" letter-spacing="0.316" stroke="#86b4ee" stroke-width="0.3">Doug Vocal: Recording Temp</text></g><g clip-path="url(#tclip)"><text x="1445.40" y="924.80" font-size="11" fill="#e3efff" letter-spacing="0.326" stroke="#e3efff" stroke-width="0.3">Doug Vocal - Best</text></g><text x="1463.70" y="1004.90" font-size="9.6" fill="#fff" stroke="#fff" stroke-width="0.2">A</text><g clip-path="url(#tclip)"><text x="1497.40" y="1004.90" font-size="11" fill="#e3efff" letter-spacing="0.292" stroke="#e3efff" stroke-width="0.3">Doug Guitar: Best</text></g><g clip-path="url(#tclip)"><text x="1445.40" y="1079.70" font-size="11" fill="#72d982" letter-spacing="0.287" stroke="#72d982" stroke-width="0.3">Lead Guitar harmony</text></g><text x="2487.70" y="579.00" font-size="9.6" fill="#fff" stroke="#fff" stroke-width="0.2">A</text><g clip-path="url(#tclip)"><text x="2536.60" y="579.00" font-size="11" fill="#b5b5b5" letter-spacing="0.193" stroke="#b5b5b5" stroke-width="0.3">Lynn: Best</text></g><g clip-path="url(#tclip)"><text x="2469.40" y="704.70" font-size="11" fill="#8ebcf5" letter-spacing="0.232" stroke="#8ebcf5" stroke-width="0.3">Lynn Best</text></g><g clip-path="url(#tclip)"><text x="2469.40" y="774.80" font-size="11" fill="#72d982" letter-spacing="0.357" stroke="#72d982" stroke-width="0.3">Melody</text></g><text x="2487.70" y="844.70" font-size="9.6" fill="#fff" stroke="#fff" stroke-width="0.2">B</text><g clip-path="url(#tclip)"><text x="2521.40" y="844.70" font-size="11" fill="#86b4ee" letter-spacing="0.316" stroke="#86b4ee" stroke-width="0.3">Doug Vocal: Recording Temp</text></g><g clip-path="url(#tclip)"><text x="2469.40" y="924.80" font-size="11" fill="#e3efff" letter-spacing="0.326" stroke="#e3efff" stroke-width="0.3">Doug Vocal - Best</text></g><text x="2487.70" y="1004.90" font-size="9.6" fill="#fff" stroke="#fff" stroke-width="0.2">A</text><g clip-path="url(#tclip)"><text x="2521.40" y="1004.90" font-size="11" fill="#e3efff" letter-spacing="0.292" stroke="#e3efff" stroke-width="0.3">Doug Guitar: Best</text></g><g clip-path="url(#tclip)"><text x="2469.40" y="1079.70" font-size="11" fill="#72d982" letter-spacing="0.287" stroke="#72d982" stroke-width="0.3">Lead Guitar harmony</text></g><text x="910.02" y="1133.00" font-size="11" fill="#ead28c" letter-spacing="0.358" stroke="#ead28c" stroke-width="0.3">Intro</text><text x="1888.26" y="1133.00" font-size="11" fill="#ead28c" letter-spacing="0.254" stroke="#ead28c" stroke-width="0.3">Verse</text></svg>
<svg style="left:0;top:0;" width="2672" height="1465"><path d="M772.55 178V240.200M772.55 243V1388" stroke="#1f1f1f" stroke-opacity="0.55" stroke-width="3.200"/><path d="M772.55 178V240.200M772.55 243V1388" stroke="#f6f6f6" stroke-width="1.600"/><path d="M765.9499999999999 169.600c0-1 .600-1.500 1.500-1.500h10.200c.9 0 1.500.5 1.500 1.500v4.200L772.55 180.700L765.9499999999999 173.800z" fill="#dcdcdc" stroke="#242424" stroke-width="0.800"/></svg>
<svg style="left:370.00px;top:525.00px;" width="250" height="100" viewBox="0 0 250 100"><ellipse cx="124" cy="50.500" rx="107.300" ry="33.700" fill="none" stroke="#f5311b" stroke-width="6.500"/></svg>
</div></body></html>
